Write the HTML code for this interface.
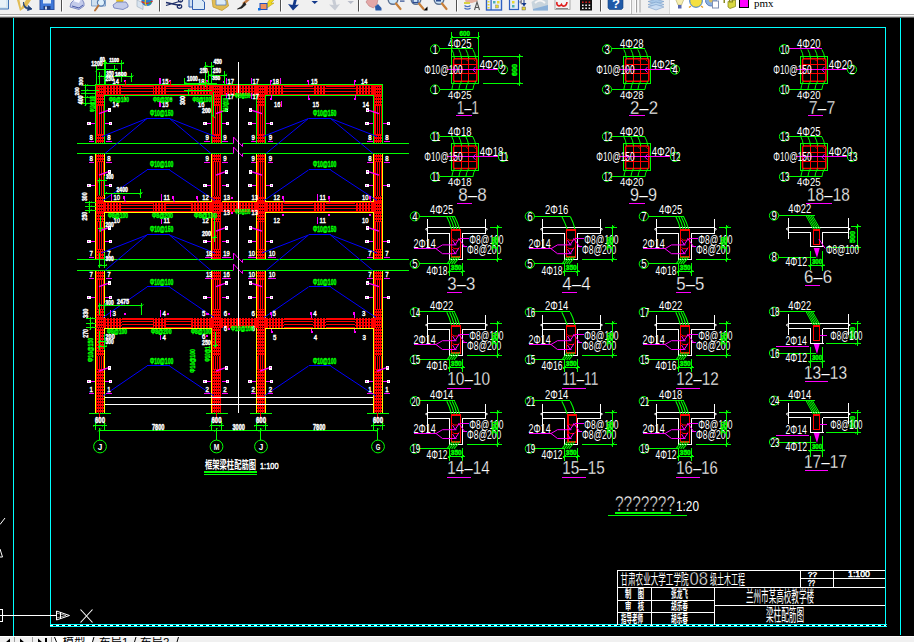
<!DOCTYPE html>
<html><head><meta charset="utf-8"><title>CAD</title>
<style>
html,body{margin:0;padding:0;background:#000;}
body{width:914px;height:642px;overflow:hidden;position:relative;font-family:"Liberation Sans","Noto Sans CJK SC",sans-serif;}
#tb{position:absolute;left:0;top:0;width:914px;height:14px;background:#f0f0f0;overflow:hidden}
#tb2{position:absolute;left:0;top:14px;width:914px;height:4px;background:linear-gradient(#a6a6a6 0,#a6a6a6 25%,#fbfbfb 25%,#fbfbfb 50%,#c4c4c4 50%,#c4c4c4 75%,#5a5a5a 75%,#5a5a5a 100%)}
#dd{position:absolute;left:669px;top:0;width:245px;height:14px;background:#fff}
#pmx{position:absolute;left:754px;top:-3px;font:11px "Liberation Serif",serif;color:#000;letter-spacing:0px}
#bb{position:absolute;left:0;top:636px;width:914px;height:6px;background:#f0f0f0;border-top:1px solid #fff;box-sizing:border-box;overflow:hidden}
.tab{position:absolute;top:-4px;font:11.5px "Liberation Sans","Noto Sans CJK SC",sans-serif;color:#000;white-space:nowrap}
svg{position:absolute;left:0;top:0}
svg text{font-family:"Liberation Sans",sans-serif}
svg text.c{font-family:"Liberation Sans","Noto Sans CJK SC",sans-serif}
</style></head><body>
<div id="tb"><svg width="914" height="14" viewBox="0 0 914 14"><path d="M-1 -1H8.5V9H-1Z" fill="#d4e6f1" stroke="#3f74b5" stroke-width="1"/><rect x="0" y="0" width="6" height="7" fill="#e8f2f8"/>
<path d="M17 0L20 11L27 6L31 0Z" fill="#e2bd55"/><path d="M19.5 0L21 8L26 0Z" fill="#f4f0e0"/><path d="M23.5 2C24 6 26 7.5 28.5 7.5L28 5.5L32 9L27.5 10.5L28 9C25 9 23 6 23.5 2Z" fill="#1d3f7a" stroke="#1d3f7a" stroke-width="0.8"/>
<rect x="40" y="-1" width="14" height="10.5" fill="#3f78d8" stroke="#2a4fa0" stroke-width="1"/><rect x="43" y="-1" width="8" height="4.5" fill="#dfeaf6"/><rect x="43.5" y="6" width="7" height="3.5" fill="#1e3c7c"/><rect x="45" y="6.5" width="2" height="3" fill="#cfd8ea"/>
<rect x="61" y="0" width="1" height="11.5" fill="#505050"/><rect x="62" y="0" width="1" height="11.5" fill="#fff"/>
<path d="M71 3L75 -1H82L84 3V6L79 9.5L70 7Z" fill="#c3cbea" stroke="#6a78b8" stroke-width="0.8"/><path d="M73 1L76 -1H81L79 3Z" fill="#f8f8ff"/><path d="M72 6L79 8L83 5" fill="none" stroke="#4a5aa8" stroke-width="1"/>
<path d="M91.5 -1H105.5V6H91.5Z" fill="#cfe0f0" stroke="#6a90c0" stroke-width="0.8"/><circle cx="101" cy="2.5" r="3.6" fill="#dff0fb" stroke="#5a7fb0" stroke-width="1.2"/><path d="M98.5 5.5L95 10.5" stroke="#b8733a" stroke-width="2" stroke-linecap="round"/>
<path d="M116 -1H124L122 5H117Z" fill="#e8c020"/><path d="M113 5L117 2H126L128 5V7L123 9.5L114 8Z" fill="#c3cbea" stroke="#6a78b8" stroke-width="0.8"/>
<path d="M137 0L143 3V9.5L137 6.5Z" fill="#d8e4f0" stroke="#9ab" stroke-width="0.6"/><circle cx="147" cy="0.5" r="5.5" fill="#2f7fd0"/><path d="M141.5 1.5C145 4 149 4 152.5 1" stroke="#e03020" stroke-width="1.2" fill="none"/><path d="M146 -1C144.5 2 145 4 146.5 6" stroke="#e8d020" stroke-width="1.2" fill="none"/><path d="M149 4L151 2" stroke="#30b040" stroke-width="1.5"/>
<rect x="159" y="0" width="1" height="11.5" fill="#505050"/><rect x="160" y="0" width="1" height="11.5" fill="#fff"/>
<path d="M166 2.5L180 5.5M166 5.5L181 1" stroke="#1e2f6a" stroke-width="1.3" fill="none"/><ellipse cx="179.5" cy="6.5" rx="2.2" ry="1.8" fill="none" stroke="#1e2f6a" stroke-width="1.3"/><ellipse cx="180.5" cy="0.5" rx="2" ry="1.5" fill="none" stroke="#1e2f6a" stroke-width="1.3"/>
<path d="M189 -1H196V7H189Z" fill="#cfe0f0" stroke="#2f5fb0" stroke-width="1"/><path d="M192.5 -1H201L204.5 2V9.5H192.5Z" fill="#dcebf6" stroke="#2f5fb0" stroke-width="1"/>
<path d="M212 -1L213 7L222 10.5L228.5 6L227 -1Z" fill="#e2bd55" stroke="#c09a30" stroke-width="0.8"/><path d="M216 -1H224L226 1.5V5H216Z" fill="#dcebf6" stroke="#5a80c0" stroke-width="0.8"/>
<path d="M249 -1L243 4" stroke="#c07840" stroke-width="2.4"/><path d="M244.5 2.5L241 7L237.5 9L242 8L246 4.5Z" fill="#202020" stroke="#202020" stroke-width="0.8"/>
<path d="M266 5L270 -1H275L271 3H274L267 8Z" fill="#f0d820" stroke="#b09a10" stroke-width="0.5"/><rect x="260" y="3.5" width="7" height="6" fill="#f09060" stroke="#2050c0" stroke-width="1"/><rect x="258" y="8" width="2.5" height="2.5" fill="#1070e0"/>
<rect x="280" y="0" width="1" height="11.5" fill="#505050"/><rect x="281" y="0" width="1" height="11.5" fill="#fff"/>
<path d="M294 -1C293.5 2 293 3.5 292.5 5L288 4L293 10.5L299 4.5L295.5 5C296 3 296.5 1 297 -1Z" fill="#14398a"/>
<path d="M311.5 1H318L314.7 4Z" fill="#14398a"/>
<path d="M332 -1C332.5 2 333 3.5 333.5 5L329 4.5L335 10.5L340 4L336.5 5C336 3 335.5 1 335 -1Z" fill="#c8ccd4"/>
<path d="M347.5 1H354L350.7 4Z" fill="#b8bcc8"/>
<rect x="358" y="0" width="1" height="11.5" fill="#505050"/><rect x="359" y="0" width="1" height="11.5" fill="#fff"/>
<path d="M366 2L368 -1H378L377 4L373.5 8L369 6Z" fill="#e4a8a8" stroke="#b87878" stroke-width="0.6"/><path d="M375 6.5L378 4L381.5 8V10.5H375.5Z" fill="#2a5aa8"/>
<circle cx="393" cy="-0.5" r="4.8" fill="#cfe6f8" stroke="#5a7090" stroke-width="1.4"/><path d="M396 3.5L400.5 9" stroke="#c8803a" stroke-width="2.2" stroke-linecap="round"/><rect x="400" y="0.5" width="4.5" height="1.2" fill="#2a4a90"/>
<circle cx="416" cy="-0.5" r="4.8" fill="#cfe6f8" stroke="#5a7090" stroke-width="1.4"/><path d="M419 3.5L423.5 9" stroke="#c8803a" stroke-width="2.2" stroke-linecap="round"/><rect x="413" y="-1" width="5" height="3.5" fill="none" stroke="#2a4a90" stroke-width="1.2"/><path d="M427.5 6.5V10.5H423.5Z" fill="#000"/>
<circle cx="439" cy="-0.5" r="4.8" fill="#cfe6f8" stroke="#5a7090" stroke-width="1.4"/><path d="M442 3.5L446.5 9" stroke="#c8803a" stroke-width="2.2" stroke-linecap="round"/><rect x="436" y="-1" width="5" height="2.5" fill="#2a4a90"/>
<rect x="456" y="0" width="1" height="11.5" fill="#505050"/><rect x="457" y="0" width="1" height="11.5" fill="#fff"/>
<path d="M465 0H472L476 -1L478 1L472 3H466Z" fill="#e4b0a0"/><rect x="464" y="2" width="6" height="2" fill="#d8d040"/><path d="M464.5 5.5C466 7 469 7 470.5 5.5M464.5 8C466 9.5 469 9.5 470.5 8" stroke="#4a70c0" stroke-width="1.2" fill="none"/><path d="M474.5 10L477 2L479.5 10M475.5 7.5H478.5" stroke="#555" stroke-width="1.100" fill="none"/>
<rect x="486.5" y="-1" width="15" height="11" fill="#e8f0fa" stroke="#2f5fc0" stroke-width="1.4"/><rect x="490.5" y="-1" width="1.2" height="11" fill="#2f5fc0"/><rect x="487.5" y="1" width="2" height="1.5" fill="#e8d830"/><rect x="487.5" y="4" width="2" height="1.5" fill="#e8d830"/><rect x="487.5" y="7" width="2" height="1.5" fill="#e8d830"/><rect x="493" y="1" width="2.5" height="2.5" fill="#50b0b0"/><rect x="497" y="1" width="2.5" height="2.5" fill="#e8d830"/><rect x="495.5" y="5" width="3" height="3" fill="#e8d830" stroke="#777" stroke-width="0.4"/>
<rect x="509.5" y="-1" width="9" height="10.5" fill="#e0eaf8" stroke="#2f5fc0" stroke-width="1.2"/><rect x="512" y="1" width="2.5" height="2.5" fill="#e8d830"/><rect x="512" y="5" width="2.5" height="2.5" fill="#50b0b0"/><path d="M519 2L522 -1V5Z" fill="#889"/><path d="M523.5 -1V3L521.5 3L524 6.5L526.5 3L524.5 3V-1Z" fill="#14398a"/><rect x="522" y="7" width="3.5" height="3" fill="#e8d830" stroke="#556" stroke-width="0.5"/>
<path d="M531.5 2L536 -1H548V10.5H533Z" fill="#c8d4dc"/><path d="M533 9L548 5V10.5H533Z" fill="#8ab0d8"/><path d="M535 3C538 0 542 0 545 3" stroke="#f4f4f4" stroke-width="1.8" fill="none"/>
<rect x="555" y="-1" width="15" height="10.5" fill="#f4f4f4" stroke="#999" stroke-width="0.8"/><path d="M557 2C556 6 560 7 561.5 4.5C562.5 7 566.5 7 567 2" stroke="#e02020" stroke-width="1.6" fill="none"/><rect x="556" y="8" width="12" height="1" fill="#888"/>
<rect x="580" y="-1" width="12" height="11.5" fill="#101010"/>
<rect x="582.0" y="1.5" width="1.6" height="1.4" fill="#e82020"/><rect x="582.0" y="4.5" width="1.6" height="1.5" fill="#f4f4f4"/><rect x="582.0" y="7.5" width="1.6" height="1.5" fill="#f4f4f4"/>
<rect x="585.3" y="1.5" width="1.6" height="1.4" fill="#e82020"/><rect x="585.3" y="4.5" width="1.6" height="1.5" fill="#f4f4f4"/><rect x="585.3" y="7.5" width="1.6" height="1.5" fill="#f4f4f4"/>
<rect x="588.6" y="1.5" width="1.6" height="1.4" fill="#e82020"/><rect x="588.6" y="4.5" width="1.6" height="1.5" fill="#f4f4f4"/><rect x="588.6" y="7.5" width="1.6" height="1.5" fill="#f4f4f4"/>
<rect x="600" y="0" width="1" height="11.5" fill="#505050"/><rect x="601" y="0" width="1" height="11.5" fill="#fff"/>
<path d="M608 -1H623V8L621.5 9.5H609.5L608 8Z" fill="#1f5aa8" stroke="#15407a" stroke-width="0.6"/><text x="612" y="8.3" font-family="'Liberation Sans',sans-serif" font-weight="bold" font-size="13" fill="#fff">?</text>
<rect x="630" y="0" width="1" height="13" fill="#fff"/><rect x="631" y="0" width="1" height="14" fill="#b8b8b8"/><rect x="635" y="0" width="1" height="12.5" fill="#fff"/><rect x="636" y="0" width="1" height="12.5" fill="#a0a0a0"/><rect x="638.5" y="0" width="1" height="12.5" fill="#fff"/><rect x="639.5" y="0" width="1" height="12.5" fill="#a0a0a0"/>
<path d="M648 1.5L656 -1L664 1.5L656 4.5Z" fill="#a8c8e8" stroke="#6a90c0" stroke-width="0.5"/><path d="M648 4.5L656 2L664 4.5L656 7.5Z" fill="#b8d4ee" stroke="#6a90c0" stroke-width="0.5"/><path d="M648 7L656 4.5L664 7L656 10Z" fill="#c8dcf2" stroke="#6a90c0" stroke-width="0.5"/>
<rect x="669" y="0" width="245" height="14" fill="#fff"/><rect x="669" y="0" width="1" height="14" fill="#d8d8d8"/>
<path d="M675.5 -1L678 5H681.5L684 -1Z" fill="#f6eeb0" stroke="#b0a860" stroke-width="0.6"/><rect x="678" y="5" width="3.5" height="3.5" fill="#5a6ab0"/>
<circle cx="696" cy="1" r="6.3" fill="#f4e040" stroke="#3a7ad0" stroke-width="1"/><path d="M689 7.5L691 6M703 7.5L701 6" stroke="#e8a020" stroke-width="1.5"/>
<circle cx="711" cy="0.5" r="5.5" fill="#8ab0e0" stroke="#5a80c0" stroke-width="1"/><circle cx="711" cy="0.5" r="2" fill="#d8c060"/><rect x="712.5" y="1" width="6" height="7" fill="#fff" stroke="#8090b0" stroke-width="1"/>
<rect x="723.5" y="0" width="1.5" height="3" fill="#8a8a20"/><path d="M728 1.5L735.5 0V6.5L730 8.5L728 7Z" fill="#d8d840" stroke="#8a8a20" stroke-width="0.8"/><rect x="729.5" y="-1" width="3" height="3" fill="none" stroke="#8a8a20" stroke-width="1"/>
<rect x="739.5" y="-1" width="9" height="8.5" fill="#ff00ff" stroke="#000" stroke-width="1"/></svg><span id="pmx">pmx</span></div><div id="tb2"></div>
<div id="bb"><svg width="914" height="6" viewBox="0 636 914 6" style="top:-1px" shape-rendering="crispEdges">
<rect x="54" y="637" width="38" height="6" fill="#ffffff"/>
<rect x="14" y="637" width="1" height="6" fill="#a0a0a0"/><rect x="32" y="637" width="1" height="6" fill="#a0a0a0"/><rect x="51" y="637" width="1" height="6" fill="#a0a0a0"/>
<path d="M10 638.5L5.5 642.5H10Z M20 638.5L24.5 642.5H20Z M38 638.5L42.5 642.5H38Z" fill="#000" shape-rendering="geometricPrecision"/><rect x="45" y="638" width="1.5" height="4" fill="#000"/>
<path d="M54.5 637L56.5 642M92.5 642L94 637M134.5 642L136 637M177 642L178.5 637" stroke="#000" stroke-width="1" fill="none" shape-rendering="geometricPrecision"/>
</svg><span class="tab" style="left:62.5px">模型</span><span class="tab" style="left:99px">布局1</span><span class="tab" style="left:140px">布局2</span></div>
<svg width="914" height="642" viewBox="0 0 914 642" shape-rendering="crispEdges">
<line x1="13.5" y1="18" x2="13.5" y2="636" stroke="#00ffff" stroke-width="1"/>
<line x1="900.5" y1="18" x2="900.5" y2="635" stroke="#00ffff" stroke-width="1"/>
<line x1="50" y1="27.5" x2="886" y2="27.5" stroke="#00ffff" stroke-width="1"/>
<line x1="50.5" y1="27" x2="50.5" y2="626" stroke="#00ffff" stroke-width="1"/>
<line x1="885.5" y1="27" x2="885.5" y2="626" stroke="#00ffff" stroke-width="1"/>
<line x1="50" y1="624.5" x2="887" y2="624.5" stroke="#00ffff" stroke-width="1"/>
<line x1="50" y1="626.5" x2="887" y2="626.5" stroke="#00ffff" stroke-width="1"/>
<line x1="50" y1="625.5" x2="886" y2="625.5" stroke="#fff" stroke-width="1" stroke-dasharray="3 3"/>
<line x1="0" y1="615.5" x2="57" y2="615.5" stroke="#ffffff" stroke-width="1"/>
<rect x="-3.5" y="609.5" width="6" height="12" fill="none" stroke="#ffffff" stroke-width="1"/>
<polyline points="56.5,611 69.5,615.5 56.5,620 56.5,611" fill="none" stroke="#ffffff" stroke-width="1" shape-rendering="geometricPrecision"/>
<polyline points="60.5,612 60.5,619" fill="none" stroke="#ffffff" stroke-width="1"/>
<polyline points="56.5,613 66,615.5 56.5,618" fill="none" stroke="#ffffff" stroke-width="0.6" shape-rendering="geometricPrecision"/>
<polyline points="80.5,609.5 92.5,622.5" fill="none" stroke="#ffffff" stroke-width="1.1" shape-rendering="geometricPrecision"/>
<polyline points="92.5,609.5 80.5,622.5" fill="none" stroke="#ffffff" stroke-width="1.1" shape-rendering="geometricPrecision"/>
<polyline points="0,524.5 5,518" fill="none" stroke="#ffffff" stroke-width="1" shape-rendering="geometricPrecision"/>
<polyline points="0,549 2.5,557 0,557" fill="none" stroke="#ffffff" stroke-width="1" shape-rendering="geometricPrecision"/>
<line x1="617" y1="570.5" x2="885" y2="570.5" stroke="#ffffff" stroke-width="1"/>
<line x1="617" y1="587.5" x2="885" y2="587.5" stroke="#ffffff" stroke-width="1"/>
<line x1="617.5" y1="570" x2="617.5" y2="625" stroke="#ffffff" stroke-width="1"/>
<line x1="800" y1="578.5" x2="885" y2="578.5" stroke="#ffffff" stroke-width="1"/>
<line x1="800.5" y1="570" x2="800.5" y2="587" stroke="#ffffff" stroke-width="1"/>
<line x1="833.5" y1="570" x2="833.5" y2="587" stroke="#ffffff" stroke-width="1"/>
<line x1="651.5" y1="587" x2="651.5" y2="625" stroke="#ffffff" stroke-width="1"/>
<line x1="714.5" y1="587" x2="714.5" y2="625" stroke="#ffffff" stroke-width="1"/>
<line x1="617" y1="600.5" x2="714" y2="600.5" stroke="#ffffff" stroke-width="1"/>
<line x1="617" y1="612.5" x2="714" y2="612.5" stroke="#ffffff" stroke-width="1"/>
<line x1="714" y1="605.5" x2="885" y2="605.5" stroke="#ffffff" stroke-width="1"/>
<text x="620.5" y="584.16" font-size="13.95" class="c" fill="#ffffff" textLength="68" lengthAdjust="spacingAndGlyphs">甘肃农业大学工学院</text>
<text x="689.5" y="585.3" font-size="18.58" fill="#ffffff" textLength="18.5" lengthAdjust="spacingAndGlyphs" stroke="#000" stroke-width="0.5">08</text>
<text x="710" y="584.16" font-size="13.95" class="c" fill="#ffffff" textLength="35" lengthAdjust="spacingAndGlyphs">级土木工程</text>
<text x="746" y="602.02" font-size="16.28" class="c" fill="#ffffff" textLength="68" lengthAdjust="spacingAndGlyphs">兰州市某高校教学楼</text>
<text x="766" y="620.95" font-size="17.44" class="c" fill="#ffffff" textLength="38" lengthAdjust="spacingAndGlyphs">梁柱配筋图</text>
<text x="625" y="598.3" font-size="11.63" class="c" fill="#ffffff" textLength="19" lengthAdjust="spacingAndGlyphs" font-weight="bold">制　图</text>
<text x="625" y="610.37" font-size="10.47" class="c" fill="#ffffff" textLength="19" lengthAdjust="spacingAndGlyphs" font-weight="bold">审　核</text>
<text x="621" y="623.3" font-size="11.63" class="c" fill="#ffffff" textLength="22" lengthAdjust="spacingAndGlyphs" font-weight="bold">指导老师</text>
<text x="671" y="598.3" font-size="11.63" class="c" fill="#ffffff" textLength="17" lengthAdjust="spacingAndGlyphs" font-weight="bold">张龙飞</text>
<text x="671" y="610.37" font-size="10.47" class="c" fill="#ffffff" textLength="17" lengthAdjust="spacingAndGlyphs" font-weight="bold">胡乐春</text>
<text x="671" y="623.3" font-size="11.63" class="c" fill="#ffffff" textLength="17" lengthAdjust="spacingAndGlyphs" font-weight="bold">胡乐春</text>
<text x="808" y="577" font-size="6.98" fill="#ffffff" textLength="9" lengthAdjust="spacingAndGlyphs" stroke="#ffffff" stroke-width="0.45">??</text>
<text x="808" y="586" font-size="8.38" fill="#ffffff" textLength="7" lengthAdjust="spacingAndGlyphs" stroke="#ffffff" stroke-width="0.45">??</text>
<text x="848" y="577" font-size="8.38" fill="#ffffff" textLength="22" lengthAdjust="spacingAndGlyphs" stroke="#ffffff" stroke-width="0.45">1:100</text>
<text x="615" y="510.5" font-size="22.21" fill="#ffffff" textLength="60" lengthAdjust="spacingAndGlyphs" stroke="#000" stroke-width="0.6">???????</text>
<text x="676" y="510.5" font-size="14.66" fill="#ffffff" textLength="23" lengthAdjust="spacingAndGlyphs">1:20</text>
<line x1="615" y1="513" x2="671" y2="513" stroke="#00ff00" stroke-width="2"/>
<line x1="608" y1="515.5" x2="687" y2="515.5" stroke="#00ff00" stroke-width="1"/>
<rect x="451.5" y="56.4" width="27" height="27" fill="none" stroke="#00ff00" stroke-width="1"/>
<rect x="453.6" y="58.7" width="23.2" height="22.6" rx="1.2" fill="none" stroke="#ff0000" stroke-width="1.5" shape-rendering="geometricPrecision"/>
<line x1="461.5" y1="58.9" x2="461.5" y2="80.9" stroke="#ff0000" stroke-width="1"/>
<line x1="468.5" y1="58.9" x2="468.5" y2="80.9" stroke="#ff0000" stroke-width="1"/>
<line x1="454" y1="64.5" x2="477" y2="64.5" stroke="#ff0000" stroke-width="1"/>
<line x1="454" y1="73.5" x2="477" y2="73.5" stroke="#ff0000" stroke-width="1"/>
<polyline points="474,59.9 475.5,61.4" fill="none" stroke="#ff0000" stroke-width="1" shape-rendering="geometricPrecision"/>
<polyline points="466.5,59.9 468,61.4" fill="none" stroke="#ff0000" stroke-width="1" shape-rendering="geometricPrecision"/>
<line x1="439.5" y1="48.5" x2="472.8" y2="48.5" stroke="#00ff00" stroke-width="1"/>
<path d="M451.8 49.4 Q454 52.9 454.4 58.9" fill="none" stroke="#00ff00" stroke-width="1" shape-rendering="geometricPrecision"/>
<path d="M458.8 49.4 Q461 52.9 461.6 58.9" fill="none" stroke="#00ff00" stroke-width="1" shape-rendering="geometricPrecision"/>
<path d="M465.8 49.4 Q468 52.9 468.8 58.9" fill="none" stroke="#00ff00" stroke-width="1" shape-rendering="geometricPrecision"/>
<path d="M472.8 49.4 Q475 52.9 476 58.9" fill="none" stroke="#00ff00" stroke-width="1" shape-rendering="geometricPrecision"/>
<circle cx="435" cy="49.2" r="4.6" fill="none" stroke="#00ff00" stroke-width="1" shape-rendering="geometricPrecision"/>
<text x="432.5" y="53.7" font-size="12.85" fill="#ffffff" textLength="5.4" lengthAdjust="spacingAndGlyphs">1</text>
<text x="448" y="48.3" font-size="12.29" fill="#ffffff" textLength="23.5" lengthAdjust="spacingAndGlyphs">4Φ25</text>
<line x1="439.5" y1="89.5" x2="472.8" y2="89.5" stroke="#00ff00" stroke-width="1"/>
<path d="M451.8 89.7 Q452.2 85.2 454.4 80.9" fill="none" stroke="#00ff00" stroke-width="1" shape-rendering="geometricPrecision"/>
<path d="M458.8 89.7 Q459.2 85.2 461.6 80.9" fill="none" stroke="#00ff00" stroke-width="1" shape-rendering="geometricPrecision"/>
<path d="M465.8 89.7 Q466.2 85.2 468.8 80.9" fill="none" stroke="#00ff00" stroke-width="1" shape-rendering="geometricPrecision"/>
<path d="M472.8 89.7 Q473.2 85.2 476 80.9" fill="none" stroke="#00ff00" stroke-width="1" shape-rendering="geometricPrecision"/>
<circle cx="435" cy="89.5" r="4.6" fill="none" stroke="#00ff00" stroke-width="1" shape-rendering="geometricPrecision"/>
<text x="432.5" y="94" font-size="12.85" fill="#ffffff" textLength="5.4" lengthAdjust="spacingAndGlyphs">1</text>
<text x="448" y="98.9" font-size="11.73" fill="#ffffff" textLength="23.5" lengthAdjust="spacingAndGlyphs">4Φ25</text>
<text x="479.7" y="68.8" font-size="12.71" fill="#ffffff" textLength="23.6" lengthAdjust="spacingAndGlyphs">4Φ20</text>
<line x1="447" y1="69.5" x2="498.4" y2="69.5" stroke="#ff00ff" stroke-width="1"/>
<polyline points="453.5,66.9 456,69.8 453.5,72.5" fill="none" stroke="#ff00ff" stroke-width="1" shape-rendering="geometricPrecision"/>
<polyline points="475.5,66.9 473,69.8 475.5,72.5" fill="none" stroke="#ff00ff" stroke-width="1" shape-rendering="geometricPrecision"/>
<circle cx="503" cy="69.6" r="4.6" fill="none" stroke="#00ff00" stroke-width="1" shape-rendering="geometricPrecision"/>
<text x="500.5" y="74.1" font-size="12.85" fill="#ffffff" textLength="5.4" lengthAdjust="spacingAndGlyphs">2</text>
<text x="424.2" y="73.7" font-size="12.29" fill="#ffffff" textLength="38.5" lengthAdjust="spacingAndGlyphs">Φ10@100</text>
<text x="457" y="113.6" font-size="17.74" fill="#ffffff" textLength="21.8" lengthAdjust="spacingAndGlyphs" stroke="#000" stroke-width="0.3">1–1</text>
<line x1="456" y1="115.5" x2="471.8" y2="115.5" stroke="#ff00ff" stroke-width="1"/>
<rect x="623.5" y="56.4" width="27" height="27" fill="none" stroke="#00ff00" stroke-width="1"/>
<rect x="625.6" y="58.7" width="23.2" height="22.6" rx="1.2" fill="none" stroke="#ff0000" stroke-width="1.5" shape-rendering="geometricPrecision"/>
<line x1="633.5" y1="58.9" x2="633.5" y2="80.9" stroke="#ff0000" stroke-width="1"/>
<line x1="640.5" y1="58.9" x2="640.5" y2="80.9" stroke="#ff0000" stroke-width="1"/>
<line x1="626" y1="64.5" x2="649" y2="64.5" stroke="#ff0000" stroke-width="1"/>
<line x1="626" y1="73.5" x2="649" y2="73.5" stroke="#ff0000" stroke-width="1"/>
<polyline points="646,59.9 647.5,61.4" fill="none" stroke="#ff0000" stroke-width="1" shape-rendering="geometricPrecision"/>
<polyline points="638.5,59.9 640,61.4" fill="none" stroke="#ff0000" stroke-width="1" shape-rendering="geometricPrecision"/>
<line x1="611.5" y1="48.5" x2="644.8" y2="48.5" stroke="#00ff00" stroke-width="1"/>
<path d="M623.8 49.4 Q626 52.9 626.4 58.9" fill="none" stroke="#00ff00" stroke-width="1" shape-rendering="geometricPrecision"/>
<path d="M630.8 49.4 Q633 52.9 633.6 58.9" fill="none" stroke="#00ff00" stroke-width="1" shape-rendering="geometricPrecision"/>
<path d="M637.8 49.4 Q640 52.9 640.8 58.9" fill="none" stroke="#00ff00" stroke-width="1" shape-rendering="geometricPrecision"/>
<path d="M644.8 49.4 Q647 52.9 648 58.9" fill="none" stroke="#00ff00" stroke-width="1" shape-rendering="geometricPrecision"/>
<circle cx="607" cy="49.2" r="4.6" fill="none" stroke="#00ff00" stroke-width="1" shape-rendering="geometricPrecision"/>
<text x="604.5" y="53.7" font-size="12.85" fill="#ffffff" textLength="5.4" lengthAdjust="spacingAndGlyphs">3</text>
<text x="620" y="48.3" font-size="12.29" fill="#ffffff" textLength="23.5" lengthAdjust="spacingAndGlyphs">4Φ28</text>
<line x1="611.5" y1="89.5" x2="644.8" y2="89.5" stroke="#00ff00" stroke-width="1"/>
<path d="M623.8 89.7 Q624.2 85.2 626.4 80.9" fill="none" stroke="#00ff00" stroke-width="1" shape-rendering="geometricPrecision"/>
<path d="M630.8 89.7 Q631.2 85.2 633.6 80.9" fill="none" stroke="#00ff00" stroke-width="1" shape-rendering="geometricPrecision"/>
<path d="M637.8 89.7 Q638.2 85.2 640.8 80.9" fill="none" stroke="#00ff00" stroke-width="1" shape-rendering="geometricPrecision"/>
<path d="M644.8 89.7 Q645.2 85.2 648 80.9" fill="none" stroke="#00ff00" stroke-width="1" shape-rendering="geometricPrecision"/>
<circle cx="607" cy="89.5" r="4.6" fill="none" stroke="#00ff00" stroke-width="1" shape-rendering="geometricPrecision"/>
<text x="604.5" y="94" font-size="12.85" fill="#ffffff" textLength="5.4" lengthAdjust="spacingAndGlyphs">3</text>
<text x="620" y="98.9" font-size="11.73" fill="#ffffff" textLength="23.5" lengthAdjust="spacingAndGlyphs">4Φ28</text>
<text x="651.7" y="68.8" font-size="12.71" fill="#ffffff" textLength="23.6" lengthAdjust="spacingAndGlyphs">4Φ25</text>
<line x1="619" y1="69.5" x2="670.4" y2="69.5" stroke="#ff00ff" stroke-width="1"/>
<polyline points="625.5,66.9 628,69.8 625.5,72.5" fill="none" stroke="#ff00ff" stroke-width="1" shape-rendering="geometricPrecision"/>
<polyline points="647.5,66.9 645,69.8 647.5,72.5" fill="none" stroke="#ff00ff" stroke-width="1" shape-rendering="geometricPrecision"/>
<circle cx="675" cy="69.6" r="4.6" fill="none" stroke="#00ff00" stroke-width="1" shape-rendering="geometricPrecision"/>
<text x="672.5" y="74.1" font-size="12.85" fill="#ffffff" textLength="5.4" lengthAdjust="spacingAndGlyphs">4</text>
<text x="596.2" y="73.7" font-size="12.29" fill="#ffffff" textLength="38.5" lengthAdjust="spacingAndGlyphs">Φ10@100</text>
<text x="630" y="113.6" font-size="17.74" fill="#ffffff" textLength="28" lengthAdjust="spacingAndGlyphs" stroke="#000" stroke-width="0.3">2–2</text>
<line x1="629" y1="115.5" x2="644.8" y2="115.5" stroke="#ff00ff" stroke-width="1"/>
<rect x="800.5" y="56.4" width="27" height="27" fill="none" stroke="#00ff00" stroke-width="1"/>
<rect x="802.6" y="58.7" width="23.2" height="22.6" rx="1.2" fill="none" stroke="#ff0000" stroke-width="1.5" shape-rendering="geometricPrecision"/>
<line x1="810.5" y1="58.9" x2="810.5" y2="80.9" stroke="#ff0000" stroke-width="1"/>
<line x1="817.5" y1="58.9" x2="817.5" y2="80.9" stroke="#ff0000" stroke-width="1"/>
<line x1="803" y1="64.5" x2="826" y2="64.5" stroke="#ff0000" stroke-width="1"/>
<line x1="803" y1="73.5" x2="826" y2="73.5" stroke="#ff0000" stroke-width="1"/>
<polyline points="823,59.9 824.5,61.4" fill="none" stroke="#ff0000" stroke-width="1" shape-rendering="geometricPrecision"/>
<polyline points="815.5,59.9 817,61.4" fill="none" stroke="#ff0000" stroke-width="1" shape-rendering="geometricPrecision"/>
<line x1="788.5" y1="48.5" x2="821.8" y2="48.5" stroke="#ff00ff" stroke-width="1"/>
<path d="M800.8 49.4 Q803 52.9 803.4 58.9" fill="none" stroke="#00ff00" stroke-width="1" shape-rendering="geometricPrecision"/>
<path d="M807.8 49.4 Q810 52.9 810.6 58.9" fill="none" stroke="#00ff00" stroke-width="1" shape-rendering="geometricPrecision"/>
<path d="M814.8 49.4 Q817 52.9 817.8 58.9" fill="none" stroke="#00ff00" stroke-width="1" shape-rendering="geometricPrecision"/>
<path d="M821.8 49.4 Q824 52.9 825 58.9" fill="none" stroke="#00ff00" stroke-width="1" shape-rendering="geometricPrecision"/>
<circle cx="784" cy="49.2" r="4.6" fill="none" stroke="#00ff00" stroke-width="1" shape-rendering="geometricPrecision"/>
<text x="780.4" y="53.7" font-size="12.85" fill="#ffffff" textLength="9" lengthAdjust="spacingAndGlyphs">10</text>
<text x="797" y="48.3" font-size="12.29" fill="#ffffff" textLength="23.5" lengthAdjust="spacingAndGlyphs">4Φ20</text>
<line x1="788.5" y1="89.5" x2="821.8" y2="89.5" stroke="#00ff00" stroke-width="1"/>
<path d="M800.8 89.7 Q801.2 85.2 803.4 80.9" fill="none" stroke="#00ff00" stroke-width="1" shape-rendering="geometricPrecision"/>
<path d="M807.8 89.7 Q808.2 85.2 810.6 80.9" fill="none" stroke="#00ff00" stroke-width="1" shape-rendering="geometricPrecision"/>
<path d="M814.8 89.7 Q815.2 85.2 817.8 80.9" fill="none" stroke="#00ff00" stroke-width="1" shape-rendering="geometricPrecision"/>
<path d="M821.8 89.7 Q822.2 85.2 825 80.9" fill="none" stroke="#00ff00" stroke-width="1" shape-rendering="geometricPrecision"/>
<circle cx="784" cy="89.5" r="4.6" fill="none" stroke="#00ff00" stroke-width="1" shape-rendering="geometricPrecision"/>
<text x="780.4" y="94" font-size="12.85" fill="#ffffff" textLength="9" lengthAdjust="spacingAndGlyphs">10</text>
<text x="797" y="98.9" font-size="11.73" fill="#ffffff" textLength="23.5" lengthAdjust="spacingAndGlyphs">4Φ20</text>
<text x="828.7" y="68.8" font-size="12.71" fill="#ffffff" textLength="23.6" lengthAdjust="spacingAndGlyphs">4Φ20</text>
<line x1="796" y1="69.5" x2="847.4" y2="69.5" stroke="#ff00ff" stroke-width="1"/>
<polyline points="802.5,66.9 805,69.8 802.5,72.5" fill="none" stroke="#ff00ff" stroke-width="1" shape-rendering="geometricPrecision"/>
<polyline points="824.5,66.9 822,69.8 824.5,72.5" fill="none" stroke="#ff00ff" stroke-width="1" shape-rendering="geometricPrecision"/>
<circle cx="852" cy="69.6" r="4.6" fill="none" stroke="#00ff00" stroke-width="1" shape-rendering="geometricPrecision"/>
<text x="849.5" y="74.1" font-size="12.85" fill="#ffffff" textLength="5.4" lengthAdjust="spacingAndGlyphs">2</text>
<text x="773.2" y="73.7" font-size="12.29" fill="#ffffff" textLength="38.5" lengthAdjust="spacingAndGlyphs">Φ10@150</text>
<text x="808.7" y="113.6" font-size="17.74" fill="#ffffff" textLength="26.6" lengthAdjust="spacingAndGlyphs" stroke="#000" stroke-width="0.3">7–7</text>
<line x1="807.7" y1="115.5" x2="822.7" y2="115.5" stroke="#ff00ff" stroke-width="1"/>
<rect x="451.5" y="143.7" width="27" height="27" fill="none" stroke="#00ff00" stroke-width="1"/>
<rect x="453.6" y="146" width="23.2" height="22.6" rx="1.2" fill="none" stroke="#ff0000" stroke-width="1.5" shape-rendering="geometricPrecision"/>
<line x1="461.5" y1="146.2" x2="461.5" y2="168.2" stroke="#ff0000" stroke-width="1"/>
<line x1="468.5" y1="146.2" x2="468.5" y2="168.2" stroke="#ff0000" stroke-width="1"/>
<line x1="454" y1="152.5" x2="477" y2="152.5" stroke="#ff0000" stroke-width="1"/>
<line x1="454" y1="161.5" x2="477" y2="161.5" stroke="#ff0000" stroke-width="1"/>
<polyline points="474,147.2 475.5,148.7" fill="none" stroke="#ff0000" stroke-width="1" shape-rendering="geometricPrecision"/>
<polyline points="466.5,147.2 468,148.7" fill="none" stroke="#ff0000" stroke-width="1" shape-rendering="geometricPrecision"/>
<line x1="439.5" y1="136.5" x2="472.8" y2="136.5" stroke="#00ff00" stroke-width="1"/>
<path d="M451.8 136.7 Q454 140.2 454.4 146.2" fill="none" stroke="#00ff00" stroke-width="1" shape-rendering="geometricPrecision"/>
<path d="M458.8 136.7 Q461 140.2 461.6 146.2" fill="none" stroke="#00ff00" stroke-width="1" shape-rendering="geometricPrecision"/>
<path d="M465.8 136.7 Q468 140.2 468.8 146.2" fill="none" stroke="#00ff00" stroke-width="1" shape-rendering="geometricPrecision"/>
<path d="M472.8 136.7 Q475 140.2 476 146.2" fill="none" stroke="#00ff00" stroke-width="1" shape-rendering="geometricPrecision"/>
<circle cx="435" cy="136.5" r="4.6" fill="none" stroke="#00ff00" stroke-width="1" shape-rendering="geometricPrecision"/>
<text x="431.4" y="141" font-size="12.85" fill="#ffffff" textLength="9" lengthAdjust="spacingAndGlyphs">11</text>
<text x="448" y="135.6" font-size="12.29" fill="#ffffff" textLength="23.5" lengthAdjust="spacingAndGlyphs">4Φ18</text>
<line x1="439.5" y1="176.5" x2="472.8" y2="176.5" stroke="#00ff00" stroke-width="1"/>
<path d="M451.8 177 Q452.2 172.5 454.4 168.2" fill="none" stroke="#00ff00" stroke-width="1" shape-rendering="geometricPrecision"/>
<path d="M458.8 177 Q459.2 172.5 461.6 168.2" fill="none" stroke="#00ff00" stroke-width="1" shape-rendering="geometricPrecision"/>
<path d="M465.8 177 Q466.2 172.5 468.8 168.2" fill="none" stroke="#00ff00" stroke-width="1" shape-rendering="geometricPrecision"/>
<path d="M472.8 177 Q473.2 172.5 476 168.2" fill="none" stroke="#00ff00" stroke-width="1" shape-rendering="geometricPrecision"/>
<circle cx="435" cy="176.8" r="4.6" fill="none" stroke="#00ff00" stroke-width="1" shape-rendering="geometricPrecision"/>
<text x="431.4" y="181.3" font-size="12.85" fill="#ffffff" textLength="9" lengthAdjust="spacingAndGlyphs">11</text>
<text x="448" y="186.2" font-size="11.73" fill="#ffffff" textLength="23.5" lengthAdjust="spacingAndGlyphs">4Φ18</text>
<text x="479.7" y="156.1" font-size="12.71" fill="#ffffff" textLength="23.6" lengthAdjust="spacingAndGlyphs">4Φ18</text>
<line x1="447" y1="156.5" x2="498.4" y2="156.5" stroke="#ff00ff" stroke-width="1"/>
<polyline points="453.5,154.2 456,157.1 453.5,159.8" fill="none" stroke="#ff00ff" stroke-width="1" shape-rendering="geometricPrecision"/>
<polyline points="475.5,154.2 473,157.1 475.5,159.8" fill="none" stroke="#ff00ff" stroke-width="1" shape-rendering="geometricPrecision"/>
<circle cx="503" cy="156.9" r="4.6" fill="none" stroke="#00ff00" stroke-width="1" shape-rendering="geometricPrecision"/>
<text x="499.4" y="161.4" font-size="12.85" fill="#ffffff" textLength="9" lengthAdjust="spacingAndGlyphs">11</text>
<text x="424.2" y="161" font-size="12.29" fill="#ffffff" textLength="38.5" lengthAdjust="spacingAndGlyphs">Φ10@150</text>
<text x="458.3" y="200.9" font-size="17.74" fill="#ffffff" textLength="28.4" lengthAdjust="spacingAndGlyphs" stroke="#000" stroke-width="0.3">8–8</text>
<line x1="457.3" y1="203.5" x2="472.3" y2="203.5" stroke="#ff00ff" stroke-width="1"/>
<rect x="623.5" y="143.7" width="27" height="27" fill="none" stroke="#00ff00" stroke-width="1"/>
<rect x="625.6" y="146" width="23.2" height="22.6" rx="1.2" fill="none" stroke="#ff0000" stroke-width="1.5" shape-rendering="geometricPrecision"/>
<line x1="633.5" y1="146.2" x2="633.5" y2="168.2" stroke="#ff0000" stroke-width="1"/>
<line x1="640.5" y1="146.2" x2="640.5" y2="168.2" stroke="#ff0000" stroke-width="1"/>
<line x1="626" y1="152.5" x2="649" y2="152.5" stroke="#ff0000" stroke-width="1"/>
<line x1="626" y1="161.5" x2="649" y2="161.5" stroke="#ff0000" stroke-width="1"/>
<polyline points="646,147.2 647.5,148.7" fill="none" stroke="#ff0000" stroke-width="1" shape-rendering="geometricPrecision"/>
<polyline points="638.5,147.2 640,148.7" fill="none" stroke="#ff0000" stroke-width="1" shape-rendering="geometricPrecision"/>
<line x1="611.5" y1="136.5" x2="644.8" y2="136.5" stroke="#00ff00" stroke-width="1"/>
<path d="M623.8 136.7 Q626 140.2 626.4 146.2" fill="none" stroke="#00ff00" stroke-width="1" shape-rendering="geometricPrecision"/>
<path d="M630.8 136.7 Q633 140.2 633.6 146.2" fill="none" stroke="#00ff00" stroke-width="1" shape-rendering="geometricPrecision"/>
<path d="M637.8 136.7 Q640 140.2 640.8 146.2" fill="none" stroke="#00ff00" stroke-width="1" shape-rendering="geometricPrecision"/>
<path d="M644.8 136.7 Q647 140.2 648 146.2" fill="none" stroke="#00ff00" stroke-width="1" shape-rendering="geometricPrecision"/>
<circle cx="607" cy="136.5" r="4.6" fill="none" stroke="#00ff00" stroke-width="1" shape-rendering="geometricPrecision"/>
<text x="603.4" y="141" font-size="12.85" fill="#ffffff" textLength="9" lengthAdjust="spacingAndGlyphs">12</text>
<text x="620" y="135.6" font-size="12.29" fill="#ffffff" textLength="23.5" lengthAdjust="spacingAndGlyphs">4Φ20</text>
<line x1="611.5" y1="176.5" x2="644.8" y2="176.5" stroke="#00ff00" stroke-width="1"/>
<path d="M623.8 177 Q624.2 172.5 626.4 168.2" fill="none" stroke="#00ff00" stroke-width="1" shape-rendering="geometricPrecision"/>
<path d="M630.8 177 Q631.2 172.5 633.6 168.2" fill="none" stroke="#00ff00" stroke-width="1" shape-rendering="geometricPrecision"/>
<path d="M637.8 177 Q638.2 172.5 640.8 168.2" fill="none" stroke="#00ff00" stroke-width="1" shape-rendering="geometricPrecision"/>
<path d="M644.8 177 Q645.2 172.5 648 168.2" fill="none" stroke="#00ff00" stroke-width="1" shape-rendering="geometricPrecision"/>
<circle cx="607" cy="176.8" r="4.6" fill="none" stroke="#00ff00" stroke-width="1" shape-rendering="geometricPrecision"/>
<text x="603.4" y="181.3" font-size="12.85" fill="#ffffff" textLength="9" lengthAdjust="spacingAndGlyphs">12</text>
<text x="620" y="186.2" font-size="11.73" fill="#ffffff" textLength="23.5" lengthAdjust="spacingAndGlyphs">4Φ20</text>
<text x="651.7" y="156.1" font-size="12.71" fill="#ffffff" textLength="23.6" lengthAdjust="spacingAndGlyphs">4Φ20</text>
<line x1="619" y1="156.5" x2="670.4" y2="156.5" stroke="#ff00ff" stroke-width="1"/>
<polyline points="625.5,154.2 628,157.1 625.5,159.8" fill="none" stroke="#ff00ff" stroke-width="1" shape-rendering="geometricPrecision"/>
<polyline points="647.5,154.2 645,157.1 647.5,159.8" fill="none" stroke="#ff00ff" stroke-width="1" shape-rendering="geometricPrecision"/>
<circle cx="675" cy="156.9" r="4.6" fill="none" stroke="#00ff00" stroke-width="1" shape-rendering="geometricPrecision"/>
<text x="671.4" y="161.4" font-size="12.85" fill="#ffffff" textLength="9" lengthAdjust="spacingAndGlyphs">12</text>
<text x="596.2" y="161" font-size="12.29" fill="#ffffff" textLength="38.5" lengthAdjust="spacingAndGlyphs">Φ10@150</text>
<text x="630" y="200.9" font-size="17.74" fill="#ffffff" textLength="27" lengthAdjust="spacingAndGlyphs" stroke="#000" stroke-width="0.3">9–9</text>
<line x1="629" y1="203.5" x2="644.8" y2="203.5" stroke="#ff00ff" stroke-width="1"/>
<rect x="800.5" y="143.7" width="27" height="27" fill="none" stroke="#00ff00" stroke-width="1"/>
<rect x="802.6" y="146" width="23.2" height="22.6" rx="1.2" fill="none" stroke="#ff0000" stroke-width="1.5" shape-rendering="geometricPrecision"/>
<line x1="810.5" y1="146.2" x2="810.5" y2="168.2" stroke="#ff0000" stroke-width="1"/>
<line x1="817.5" y1="146.2" x2="817.5" y2="168.2" stroke="#ff0000" stroke-width="1"/>
<line x1="803" y1="152.5" x2="826" y2="152.5" stroke="#ff0000" stroke-width="1"/>
<line x1="803" y1="161.5" x2="826" y2="161.5" stroke="#ff0000" stroke-width="1"/>
<polyline points="823,147.2 824.5,148.7" fill="none" stroke="#ff0000" stroke-width="1" shape-rendering="geometricPrecision"/>
<polyline points="815.5,147.2 817,148.7" fill="none" stroke="#ff0000" stroke-width="1" shape-rendering="geometricPrecision"/>
<line x1="788.5" y1="136.5" x2="821.8" y2="136.5" stroke="#00ff00" stroke-width="1"/>
<path d="M800.8 136.7 Q803 140.2 803.4 146.2" fill="none" stroke="#00ff00" stroke-width="1" shape-rendering="geometricPrecision"/>
<path d="M807.8 136.7 Q810 140.2 810.6 146.2" fill="none" stroke="#00ff00" stroke-width="1" shape-rendering="geometricPrecision"/>
<path d="M814.8 136.7 Q817 140.2 817.8 146.2" fill="none" stroke="#00ff00" stroke-width="1" shape-rendering="geometricPrecision"/>
<path d="M821.8 136.7 Q824 140.2 825 146.2" fill="none" stroke="#00ff00" stroke-width="1" shape-rendering="geometricPrecision"/>
<circle cx="784" cy="136.5" r="4.6" fill="none" stroke="#00ff00" stroke-width="1" shape-rendering="geometricPrecision"/>
<text x="780.4" y="141" font-size="12.85" fill="#ffffff" textLength="9" lengthAdjust="spacingAndGlyphs">13</text>
<text x="797" y="135.6" font-size="12.29" fill="#ffffff" textLength="23.5" lengthAdjust="spacingAndGlyphs">4Φ25</text>
<line x1="788.5" y1="176.5" x2="821.8" y2="176.5" stroke="#00ff00" stroke-width="1"/>
<path d="M800.8 177 Q801.2 172.5 803.4 168.2" fill="none" stroke="#00ff00" stroke-width="1" shape-rendering="geometricPrecision"/>
<path d="M807.8 177 Q808.2 172.5 810.6 168.2" fill="none" stroke="#00ff00" stroke-width="1" shape-rendering="geometricPrecision"/>
<path d="M814.8 177 Q815.2 172.5 817.8 168.2" fill="none" stroke="#00ff00" stroke-width="1" shape-rendering="geometricPrecision"/>
<path d="M821.8 177 Q822.2 172.5 825 168.2" fill="none" stroke="#00ff00" stroke-width="1" shape-rendering="geometricPrecision"/>
<circle cx="784" cy="176.8" r="4.6" fill="none" stroke="#00ff00" stroke-width="1" shape-rendering="geometricPrecision"/>
<text x="780.4" y="181.3" font-size="12.85" fill="#ffffff" textLength="9" lengthAdjust="spacingAndGlyphs">13</text>
<text x="797" y="186.2" font-size="11.73" fill="#ffffff" textLength="23.5" lengthAdjust="spacingAndGlyphs">4Φ25</text>
<text x="828.7" y="156.1" font-size="12.71" fill="#ffffff" textLength="23.6" lengthAdjust="spacingAndGlyphs">4Φ20</text>
<line x1="796" y1="156.5" x2="847.4" y2="156.5" stroke="#ff00ff" stroke-width="1"/>
<polyline points="802.5,154.2 805,157.1 802.5,159.8" fill="none" stroke="#ff00ff" stroke-width="1" shape-rendering="geometricPrecision"/>
<polyline points="824.5,154.2 822,157.1 824.5,159.8" fill="none" stroke="#ff00ff" stroke-width="1" shape-rendering="geometricPrecision"/>
<circle cx="852" cy="156.9" r="4.6" fill="none" stroke="#00ff00" stroke-width="1" shape-rendering="geometricPrecision"/>
<text x="848.4" y="161.4" font-size="12.85" fill="#ffffff" textLength="9" lengthAdjust="spacingAndGlyphs">13</text>
<text x="773.2" y="161" font-size="12.29" fill="#ffffff" textLength="38.5" lengthAdjust="spacingAndGlyphs">Φ10@150</text>
<text x="807" y="200.9" font-size="17.74" fill="#ffffff" textLength="42.8" lengthAdjust="spacingAndGlyphs" stroke="#000" stroke-width="0.3">18–18</text>
<line x1="806" y1="203.5" x2="832" y2="203.5" stroke="#ff00ff" stroke-width="1"/>
<line x1="451" y1="37.5" x2="479" y2="37.5" stroke="#00ff00" stroke-width="1"/>
<line x1="451.5" y1="32" x2="451.5" y2="56" stroke="#00ff00" stroke-width="1"/>
<line x1="478.5" y1="32" x2="478.5" y2="56" stroke="#00ff00" stroke-width="1"/>
<polyline points="450,39 453,36" fill="none" stroke="#00ff00" stroke-width="1" shape-rendering="geometricPrecision"/>
<polyline points="477,39 480,36" fill="none" stroke="#00ff00" stroke-width="1" shape-rendering="geometricPrecision"/>
<text x="459.5" y="36" font-size="7.68" fill="#00ff00" textLength="10.5" lengthAdjust="spacingAndGlyphs" font-weight="bold" stroke="#00ff00" stroke-width="0.45">600</text>
<line x1="483" y1="56.5" x2="523" y2="56.5" stroke="#00ff00" stroke-width="1"/>
<line x1="483" y1="83.5" x2="523" y2="83.5" stroke="#00ff00" stroke-width="1"/>
<line x1="519.5" y1="54" x2="519.5" y2="86" stroke="#00ff00" stroke-width="1"/>
<polyline points="517.5,58 520.5,55" fill="none" stroke="#00ff00" stroke-width="1" shape-rendering="geometricPrecision"/>
<polyline points="517.5,85 520.5,82" fill="none" stroke="#00ff00" stroke-width="1" shape-rendering="geometricPrecision"/>
<text x="0" y="0" font-size="7.68" fill="#00ff00" textLength="12" lengthAdjust="spacingAndGlyphs" transform="translate(516.5 76) rotate(-90)" font-weight="bold" stroke="#00ff00" stroke-width="0.4">600</text>
<line x1="427.5" y1="219.2" x2="427.5" y2="247.7" stroke="#ffffff" stroke-width="1"/>
<line x1="485.5" y1="219.2" x2="485.5" y2="233.7" stroke="#ffffff" stroke-width="1"/>
<line x1="427.5" y1="227.5" x2="486" y2="227.5" stroke="#ffffff" stroke-width="1"/>
<polyline points="428,227.7 425.5,229.2 427.5,230.7" fill="none" stroke="#ffffff" stroke-width="1" shape-rendering="geometricPrecision"/>
<polyline points="485,227.7 487.5,229.2 485.5,230.7" fill="none" stroke="#ffffff" stroke-width="1" shape-rendering="geometricPrecision"/>
<line x1="427.5" y1="233.5" x2="450" y2="233.5" stroke="#ffffff" stroke-width="1"/>
<line x1="462.3" y1="233.5" x2="486" y2="233.5" stroke="#ffffff" stroke-width="1"/>
<line x1="449.5" y1="233.5" x2="449.5" y2="259.7" stroke="#ffffff" stroke-width="1"/>
<line x1="462.5" y1="233.5" x2="462.5" y2="259.7" stroke="#ffffff" stroke-width="1"/>
<line x1="449.9" y1="259.5" x2="463" y2="259.5" stroke="#ffffff" stroke-width="1"/>
<rect x="451.6" y="229.9" width="8.8" height="27" fill="none" stroke="#ff0000" stroke-width="1.6"/>
<polyline points="452.4,238.7 454,240.2 458,240.2 459.6,238.7" fill="none" stroke="#ff0000" stroke-width="1" shape-rendering="geometricPrecision"/>
<polyline points="452.4,247.2 454,248.7 458,248.7 459.6,247.2" fill="none" stroke="#ff0000" stroke-width="1" shape-rendering="geometricPrecision"/>
<line x1="419.4" y1="216.5" x2="454.5" y2="216.5" stroke="#00ff00" stroke-width="1"/>
<path d="M446.8 216.5 Q449.8 222 451.4 229.2" fill="none" stroke="#00ff00" stroke-width="1.1" shape-rendering="geometricPrecision"/>
<path d="M449.6 216.5 Q452.6 222 454.2 229.2" fill="none" stroke="#00ff00" stroke-width="1.1" shape-rendering="geometricPrecision"/>
<path d="M452.2 216.5 Q455.2 222 456.9 229.2" fill="none" stroke="#00ff00" stroke-width="1.1" shape-rendering="geometricPrecision"/>
<path d="M454.5 216.5 Q457.5 222 459.6 229.2" fill="none" stroke="#00ff00" stroke-width="1.1" shape-rendering="geometricPrecision"/>
<circle cx="414.8" cy="216.3" r="4.6" fill="none" stroke="#00ff00" stroke-width="1" shape-rendering="geometricPrecision"/>
<text x="412.3" y="220.8" font-size="12.85" fill="#ffffff" textLength="5.4" lengthAdjust="spacingAndGlyphs">4</text>
<text x="430" y="213.7" font-size="12.01" fill="#ffffff" textLength="23.3" lengthAdjust="spacingAndGlyphs">4Φ25</text>
<text x="413.5" y="248.2" font-size="12.85" fill="#ffffff" textLength="22.2" lengthAdjust="spacingAndGlyphs">2Φ14</text>
<line x1="413.5" y1="248.5" x2="436" y2="248.5" stroke="#ff00ff" stroke-width="1"/>
<polyline points="436,248.7 442.5,244.9 456.5,244.9" fill="none" stroke="#ff00ff" stroke-width="1" shape-rendering="geometricPrecision"/>
<polyline points="436,248.7 442.5,253.7 456.5,253.7" fill="none" stroke="#ff00ff" stroke-width="1" shape-rendering="geometricPrecision"/>
<polyline points="452.5,240.2 455.2,244.7 458.8,239.2" fill="none" stroke="#ff00ff" stroke-width="1" shape-rendering="geometricPrecision"/>
<polyline points="452.5,249.2 455.2,253.7 458.8,248.2" fill="none" stroke="#ff00ff" stroke-width="1" shape-rendering="geometricPrecision"/>
<text x="469.3" y="244.1" font-size="13.13" fill="#ffffff" textLength="34.3" lengthAdjust="spacingAndGlyphs">Φ8@100</text>
<text x="467" y="253.9" font-size="12.57" fill="#ffffff" textLength="34.3" lengthAdjust="spacingAndGlyphs">Φ8@200</text>
<line x1="459.5" y1="238.5" x2="469.3" y2="238.5" stroke="#ff00ff" stroke-width="1"/>
<line x1="463" y1="246.5" x2="467" y2="246.5" stroke="#ff00ff" stroke-width="1"/>
<polyline points="458.5,238.2 465,247.2" fill="none" stroke="#ff00ff" stroke-width="1" shape-rendering="geometricPrecision"/>
<line x1="490.4" y1="227.5" x2="502" y2="227.5" stroke="#00ff00" stroke-width="1"/>
<line x1="467" y1="259.5" x2="502" y2="259.5" stroke="#00ff00" stroke-width="1"/>
<line x1="497.5" y1="224.7" x2="497.5" y2="261.7" stroke="#00ff00" stroke-width="1"/>
<polyline points="496.4,228.7 499.4,225.7" fill="none" stroke="#00ff00" stroke-width="1" shape-rendering="geometricPrecision"/>
<polyline points="496.4,260.7 499.4,257.7" fill="none" stroke="#00ff00" stroke-width="1" shape-rendering="geometricPrecision"/>
<text x="0" y="0" font-size="7.26" fill="#00ff00" textLength="13" lengthAdjust="spacingAndGlyphs" transform="translate(496.7 249.7) rotate(-90)" font-weight="bold" stroke="#00ff00" stroke-width="0.4">750</text>
<line x1="419.4" y1="263.5" x2="448.5" y2="263.5" stroke="#00ff00" stroke-width="1"/>
<polyline points="447,264.1 452.4,256.7" fill="none" stroke="#00ff00" stroke-width="1.1" shape-rendering="geometricPrecision"/>
<polyline points="449.3,264.1 454.9,256.7" fill="none" stroke="#00ff00" stroke-width="1.1" shape-rendering="geometricPrecision"/>
<polyline points="451.6,264.1 457.4,256.7" fill="none" stroke="#00ff00" stroke-width="1.1" shape-rendering="geometricPrecision"/>
<polyline points="453.9,264.1 459.9,256.7" fill="none" stroke="#00ff00" stroke-width="1.1" shape-rendering="geometricPrecision"/>
<circle cx="414.8" cy="263.9" r="4.6" fill="none" stroke="#00ff00" stroke-width="1" shape-rendering="geometricPrecision"/>
<text x="412.3" y="268.4" font-size="12.85" fill="#ffffff" textLength="5.4" lengthAdjust="spacingAndGlyphs">5</text>
<text x="426.5" y="274.5" font-size="12.01" fill="#ffffff" textLength="21" lengthAdjust="spacingAndGlyphs">4Φ18</text>
<line x1="449.5" y1="262.7" x2="449.5" y2="276.2" stroke="#00ff00" stroke-width="1"/>
<line x1="462.5" y1="262.7" x2="462.5" y2="276.2" stroke="#00ff00" stroke-width="1"/>
<line x1="447.5" y1="271.5" x2="464.5" y2="271.5" stroke="#00ff00" stroke-width="1"/>
<polyline points="448,273.2 451,270.2" fill="none" stroke="#00ff00" stroke-width="1" shape-rendering="geometricPrecision"/>
<polyline points="461,273.2 464,270.2" fill="none" stroke="#00ff00" stroke-width="1" shape-rendering="geometricPrecision"/>
<text x="450.8" y="270.1" font-size="7.82" fill="#00ff00" textLength="11" lengthAdjust="spacingAndGlyphs" font-weight="bold" stroke="#00ff00" stroke-width="0.45">350</text>
<text x="447.3" y="289.5" font-size="17.46" fill="#ffffff" textLength="28" lengthAdjust="spacingAndGlyphs" stroke="#000" stroke-width="0.3">3–3</text>
<line x1="446.8" y1="292.5" x2="462.3" y2="292.5" stroke="#ff00ff" stroke-width="1"/>
<line x1="542.5" y1="219.2" x2="542.5" y2="247.7" stroke="#ffffff" stroke-width="1"/>
<line x1="600.5" y1="219.2" x2="600.5" y2="233.7" stroke="#ffffff" stroke-width="1"/>
<line x1="542.5" y1="227.5" x2="601" y2="227.5" stroke="#ffffff" stroke-width="1"/>
<polyline points="543,227.7 540.5,229.2 542.5,230.7" fill="none" stroke="#ffffff" stroke-width="1" shape-rendering="geometricPrecision"/>
<polyline points="600,227.7 602.5,229.2 600.5,230.7" fill="none" stroke="#ffffff" stroke-width="1" shape-rendering="geometricPrecision"/>
<line x1="542.5" y1="233.5" x2="565" y2="233.5" stroke="#ffffff" stroke-width="1"/>
<line x1="577.3" y1="233.5" x2="601" y2="233.5" stroke="#ffffff" stroke-width="1"/>
<line x1="564.5" y1="233.5" x2="564.5" y2="259.7" stroke="#ffffff" stroke-width="1"/>
<line x1="577.5" y1="233.5" x2="577.5" y2="259.7" stroke="#ffffff" stroke-width="1"/>
<line x1="564.9" y1="259.5" x2="578" y2="259.5" stroke="#ffffff" stroke-width="1"/>
<rect x="566.6" y="229.9" width="8.8" height="27" fill="none" stroke="#ff0000" stroke-width="1.6"/>
<polyline points="567.4,238.7 569,240.2 573,240.2 574.6,238.7" fill="none" stroke="#ff0000" stroke-width="1" shape-rendering="geometricPrecision"/>
<polyline points="567.4,247.2 569,248.7 573,248.7 574.6,247.2" fill="none" stroke="#ff0000" stroke-width="1" shape-rendering="geometricPrecision"/>
<line x1="534.4" y1="216.5" x2="569.5" y2="216.5" stroke="#00ff00" stroke-width="1"/>
<path d="M561.8 216.5 Q564.8 222 567.2 229.2" fill="none" stroke="#00ff00" stroke-width="1.1" shape-rendering="geometricPrecision"/>
<path d="M570.3 216.5 Q573.3 222 575 229.2" fill="none" stroke="#00ff00" stroke-width="1.1" shape-rendering="geometricPrecision"/>
<circle cx="529.8" cy="216.3" r="4.6" fill="none" stroke="#00ff00" stroke-width="1" shape-rendering="geometricPrecision"/>
<text x="527.3" y="220.8" font-size="12.85" fill="#ffffff" textLength="5.4" lengthAdjust="spacingAndGlyphs">6</text>
<text x="545" y="213.7" font-size="12.01" fill="#ffffff" textLength="23.3" lengthAdjust="spacingAndGlyphs">2Φ16</text>
<text x="528.5" y="248.2" font-size="12.85" fill="#ffffff" textLength="22.2" lengthAdjust="spacingAndGlyphs">2Φ14</text>
<line x1="528.5" y1="248.5" x2="551" y2="248.5" stroke="#ff00ff" stroke-width="1"/>
<polyline points="551,248.7 557.5,244.9 571.5,244.9" fill="none" stroke="#ff00ff" stroke-width="1" shape-rendering="geometricPrecision"/>
<polyline points="551,248.7 557.5,253.7 571.5,253.7" fill="none" stroke="#ff00ff" stroke-width="1" shape-rendering="geometricPrecision"/>
<polyline points="567.5,240.2 570.2,244.7 573.8,239.2" fill="none" stroke="#ff00ff" stroke-width="1" shape-rendering="geometricPrecision"/>
<polyline points="567.5,249.2 570.2,253.7 573.8,248.2" fill="none" stroke="#ff00ff" stroke-width="1" shape-rendering="geometricPrecision"/>
<text x="584.3" y="244.1" font-size="13.13" fill="#ffffff" textLength="34.3" lengthAdjust="spacingAndGlyphs">Φ8@100</text>
<text x="582" y="253.9" font-size="12.57" fill="#ffffff" textLength="34.3" lengthAdjust="spacingAndGlyphs">Φ8@200</text>
<line x1="574.5" y1="238.5" x2="584.3" y2="238.5" stroke="#ff00ff" stroke-width="1"/>
<line x1="578" y1="246.5" x2="582" y2="246.5" stroke="#ff00ff" stroke-width="1"/>
<polyline points="573.5,238.2 580,247.2" fill="none" stroke="#ff00ff" stroke-width="1" shape-rendering="geometricPrecision"/>
<line x1="605.4" y1="227.5" x2="617" y2="227.5" stroke="#00ff00" stroke-width="1"/>
<line x1="582" y1="259.5" x2="617" y2="259.5" stroke="#00ff00" stroke-width="1"/>
<line x1="612.5" y1="224.7" x2="612.5" y2="261.7" stroke="#00ff00" stroke-width="1"/>
<polyline points="611.4,228.7 614.4,225.7" fill="none" stroke="#00ff00" stroke-width="1" shape-rendering="geometricPrecision"/>
<polyline points="611.4,260.7 614.4,257.7" fill="none" stroke="#00ff00" stroke-width="1" shape-rendering="geometricPrecision"/>
<text x="0" y="0" font-size="7.26" fill="#00ff00" textLength="13" lengthAdjust="spacingAndGlyphs" transform="translate(611.7 249.7) rotate(-90)" font-weight="bold" stroke="#00ff00" stroke-width="0.4">750</text>
<line x1="534.4" y1="263.5" x2="563.5" y2="263.5" stroke="#00ff00" stroke-width="1"/>
<polyline points="562,264.1 567.4,256.7" fill="none" stroke="#00ff00" stroke-width="1.1" shape-rendering="geometricPrecision"/>
<polyline points="564.3,264.1 569.9,256.7" fill="none" stroke="#00ff00" stroke-width="1.1" shape-rendering="geometricPrecision"/>
<polyline points="566.6,264.1 572.4,256.7" fill="none" stroke="#00ff00" stroke-width="1.1" shape-rendering="geometricPrecision"/>
<polyline points="568.9,264.1 574.9,256.7" fill="none" stroke="#00ff00" stroke-width="1.1" shape-rendering="geometricPrecision"/>
<circle cx="529.8" cy="263.9" r="4.6" fill="none" stroke="#00ff00" stroke-width="1" shape-rendering="geometricPrecision"/>
<text x="527.3" y="268.4" font-size="12.85" fill="#ffffff" textLength="5.4" lengthAdjust="spacingAndGlyphs">5</text>
<text x="541.5" y="274.5" font-size="12.01" fill="#ffffff" textLength="21" lengthAdjust="spacingAndGlyphs">4Φ18</text>
<line x1="564.5" y1="262.7" x2="564.5" y2="276.2" stroke="#00ff00" stroke-width="1"/>
<line x1="577.5" y1="262.7" x2="577.5" y2="276.2" stroke="#00ff00" stroke-width="1"/>
<line x1="562.5" y1="271.5" x2="579.5" y2="271.5" stroke="#00ff00" stroke-width="1"/>
<polyline points="563,273.2 566,270.2" fill="none" stroke="#00ff00" stroke-width="1" shape-rendering="geometricPrecision"/>
<polyline points="576,273.2 579,270.2" fill="none" stroke="#00ff00" stroke-width="1" shape-rendering="geometricPrecision"/>
<text x="565.8" y="270.1" font-size="7.82" fill="#00ff00" textLength="11" lengthAdjust="spacingAndGlyphs" font-weight="bold" stroke="#00ff00" stroke-width="0.45">350</text>
<text x="562.3" y="289.5" font-size="17.46" fill="#ffffff" textLength="28.5" lengthAdjust="spacingAndGlyphs" stroke="#000" stroke-width="0.3">4–4</text>
<line x1="561.8" y1="292.5" x2="577.3" y2="292.5" stroke="#ff00ff" stroke-width="1"/>
<line x1="656.5" y1="219.2" x2="656.5" y2="247.7" stroke="#ffffff" stroke-width="1"/>
<line x1="714.5" y1="219.2" x2="714.5" y2="233.7" stroke="#ffffff" stroke-width="1"/>
<line x1="656.5" y1="227.5" x2="715" y2="227.5" stroke="#ffffff" stroke-width="1"/>
<polyline points="657,227.7 654.5,229.2 656.5,230.7" fill="none" stroke="#ffffff" stroke-width="1" shape-rendering="geometricPrecision"/>
<polyline points="714,227.7 716.5,229.2 714.5,230.7" fill="none" stroke="#ffffff" stroke-width="1" shape-rendering="geometricPrecision"/>
<line x1="656.5" y1="233.5" x2="679" y2="233.5" stroke="#ffffff" stroke-width="1"/>
<line x1="691.3" y1="233.5" x2="715" y2="233.5" stroke="#ffffff" stroke-width="1"/>
<line x1="678.5" y1="233.5" x2="678.5" y2="259.7" stroke="#ffffff" stroke-width="1"/>
<line x1="691.5" y1="233.5" x2="691.5" y2="259.7" stroke="#ffffff" stroke-width="1"/>
<line x1="678.9" y1="259.5" x2="692" y2="259.5" stroke="#ffffff" stroke-width="1"/>
<rect x="680.6" y="229.9" width="8.8" height="27" fill="none" stroke="#ff0000" stroke-width="1.6"/>
<polyline points="681.4,238.7 683,240.2 687,240.2 688.6,238.7" fill="none" stroke="#ff0000" stroke-width="1" shape-rendering="geometricPrecision"/>
<polyline points="681.4,247.2 683,248.7 687,248.7 688.6,247.2" fill="none" stroke="#ff0000" stroke-width="1" shape-rendering="geometricPrecision"/>
<line x1="648.4" y1="216.5" x2="683.5" y2="216.5" stroke="#00ff00" stroke-width="1"/>
<path d="M675.8 216.5 Q678.8 222 680.4 229.2" fill="none" stroke="#00ff00" stroke-width="1.1" shape-rendering="geometricPrecision"/>
<path d="M678.6 216.5 Q681.6 222 683.2 229.2" fill="none" stroke="#00ff00" stroke-width="1.1" shape-rendering="geometricPrecision"/>
<path d="M681.2 216.5 Q684.2 222 685.9 229.2" fill="none" stroke="#00ff00" stroke-width="1.1" shape-rendering="geometricPrecision"/>
<path d="M683.5 216.5 Q686.5 222 688.6 229.2" fill="none" stroke="#00ff00" stroke-width="1.1" shape-rendering="geometricPrecision"/>
<circle cx="643.8" cy="216.3" r="4.6" fill="none" stroke="#00ff00" stroke-width="1" shape-rendering="geometricPrecision"/>
<text x="641.3" y="220.8" font-size="12.85" fill="#ffffff" textLength="5.4" lengthAdjust="spacingAndGlyphs">7</text>
<text x="659" y="213.7" font-size="12.01" fill="#ffffff" textLength="23.3" lengthAdjust="spacingAndGlyphs">4Φ25</text>
<text x="642.5" y="248.2" font-size="12.85" fill="#ffffff" textLength="22.2" lengthAdjust="spacingAndGlyphs">2Φ14</text>
<line x1="642.5" y1="248.5" x2="665" y2="248.5" stroke="#ff00ff" stroke-width="1"/>
<polyline points="665,248.7 671.5,244.9 685.5,244.9" fill="none" stroke="#ff00ff" stroke-width="1" shape-rendering="geometricPrecision"/>
<polyline points="665,248.7 671.5,253.7 685.5,253.7" fill="none" stroke="#ff00ff" stroke-width="1" shape-rendering="geometricPrecision"/>
<polyline points="681.5,240.2 684.2,244.7 687.8,239.2" fill="none" stroke="#ff00ff" stroke-width="1" shape-rendering="geometricPrecision"/>
<polyline points="681.5,249.2 684.2,253.7 687.8,248.2" fill="none" stroke="#ff00ff" stroke-width="1" shape-rendering="geometricPrecision"/>
<text x="698.3" y="244.1" font-size="13.13" fill="#ffffff" textLength="34.3" lengthAdjust="spacingAndGlyphs">Φ8@100</text>
<text x="696" y="253.9" font-size="12.57" fill="#ffffff" textLength="34.3" lengthAdjust="spacingAndGlyphs">Φ8@200</text>
<line x1="688.5" y1="238.5" x2="698.3" y2="238.5" stroke="#ff00ff" stroke-width="1"/>
<line x1="692" y1="246.5" x2="696" y2="246.5" stroke="#ff00ff" stroke-width="1"/>
<polyline points="687.5,238.2 694,247.2" fill="none" stroke="#ff00ff" stroke-width="1" shape-rendering="geometricPrecision"/>
<line x1="719.4" y1="227.5" x2="731" y2="227.5" stroke="#00ff00" stroke-width="1"/>
<line x1="696" y1="259.5" x2="731" y2="259.5" stroke="#00ff00" stroke-width="1"/>
<line x1="726.5" y1="224.7" x2="726.5" y2="261.7" stroke="#00ff00" stroke-width="1"/>
<polyline points="725.4,228.7 728.4,225.7" fill="none" stroke="#00ff00" stroke-width="1" shape-rendering="geometricPrecision"/>
<polyline points="725.4,260.7 728.4,257.7" fill="none" stroke="#00ff00" stroke-width="1" shape-rendering="geometricPrecision"/>
<text x="0" y="0" font-size="7.26" fill="#00ff00" textLength="13" lengthAdjust="spacingAndGlyphs" transform="translate(725.7 249.7) rotate(-90)" font-weight="bold" stroke="#00ff00" stroke-width="0.4">750</text>
<line x1="648.4" y1="263.5" x2="677.5" y2="263.5" stroke="#00ff00" stroke-width="1"/>
<polyline points="676,264.1 681.4,256.7" fill="none" stroke="#00ff00" stroke-width="1.1" shape-rendering="geometricPrecision"/>
<polyline points="678.3,264.1 683.9,256.7" fill="none" stroke="#00ff00" stroke-width="1.1" shape-rendering="geometricPrecision"/>
<polyline points="680.6,264.1 686.4,256.7" fill="none" stroke="#00ff00" stroke-width="1.1" shape-rendering="geometricPrecision"/>
<polyline points="682.9,264.1 688.9,256.7" fill="none" stroke="#00ff00" stroke-width="1.1" shape-rendering="geometricPrecision"/>
<circle cx="643.8" cy="263.9" r="4.6" fill="none" stroke="#00ff00" stroke-width="1" shape-rendering="geometricPrecision"/>
<text x="641.3" y="268.4" font-size="12.85" fill="#ffffff" textLength="5.4" lengthAdjust="spacingAndGlyphs">5</text>
<text x="655.5" y="274.5" font-size="12.01" fill="#ffffff" textLength="21" lengthAdjust="spacingAndGlyphs">4Φ18</text>
<line x1="678.5" y1="262.7" x2="678.5" y2="276.2" stroke="#00ff00" stroke-width="1"/>
<line x1="691.5" y1="262.7" x2="691.5" y2="276.2" stroke="#00ff00" stroke-width="1"/>
<line x1="676.5" y1="271.5" x2="693.5" y2="271.5" stroke="#00ff00" stroke-width="1"/>
<polyline points="677,273.2 680,270.2" fill="none" stroke="#00ff00" stroke-width="1" shape-rendering="geometricPrecision"/>
<polyline points="690,273.2 693,270.2" fill="none" stroke="#00ff00" stroke-width="1" shape-rendering="geometricPrecision"/>
<text x="679.8" y="270.1" font-size="7.82" fill="#00ff00" textLength="11" lengthAdjust="spacingAndGlyphs" font-weight="bold" stroke="#00ff00" stroke-width="0.45">350</text>
<text x="676.3" y="289.5" font-size="17.46" fill="#ffffff" textLength="28" lengthAdjust="spacingAndGlyphs" stroke="#000" stroke-width="0.3">5–5</text>
<line x1="675.8" y1="292.5" x2="691.3" y2="292.5" stroke="#ff00ff" stroke-width="1"/>
<line x1="788.5" y1="218.1" x2="788.5" y2="239.1" stroke="#ffffff" stroke-width="1"/>
<line x1="848.5" y1="218.1" x2="848.5" y2="239.1" stroke="#ffffff" stroke-width="1"/>
<line x1="788.2" y1="227.5" x2="848.7" y2="227.5" stroke="#ffffff" stroke-width="1"/>
<polyline points="788.7,227.4 786.2,228.9 788.2,230.4" fill="none" stroke="#ffffff" stroke-width="1" shape-rendering="geometricPrecision"/>
<polyline points="847.7,227.4 850.2,228.9 848.2,230.4" fill="none" stroke="#ffffff" stroke-width="1" shape-rendering="geometricPrecision"/>
<line x1="788.2" y1="232.5" x2="810.7" y2="232.5" stroke="#ffffff" stroke-width="1"/>
<line x1="822.8" y1="232.5" x2="848.7" y2="232.5" stroke="#ffffff" stroke-width="1"/>
<line x1="810.5" y1="232.4" x2="810.5" y2="247.4" stroke="#ffffff" stroke-width="1"/>
<line x1="822.5" y1="232.4" x2="822.5" y2="247.4" stroke="#ffffff" stroke-width="1"/>
<line x1="810.6" y1="246.5" x2="823.7" y2="246.5" stroke="#ffffff" stroke-width="1"/>
<rect x="813.5" y="229.8" width="6.2" height="14.6" fill="none" stroke="#ff0000" stroke-width="1.5"/>
<line x1="778.7" y1="215.5" x2="815" y2="215.5" stroke="#00ff00" stroke-width="1"/>
<path d="M806.2 215.8 Q809.2 221.3 813.3 228.9" fill="none" stroke="#00ff00" stroke-width="1" shape-rendering="geometricPrecision"/>
<path d="M807.8 215.8 Q810.8 221.3 815 228.9" fill="none" stroke="#00ff00" stroke-width="1" shape-rendering="geometricPrecision"/>
<path d="M809.4 215.8 Q812.4 221.3 816.7 228.9" fill="none" stroke="#00ff00" stroke-width="1" shape-rendering="geometricPrecision"/>
<path d="M811 215.8 Q814 221.3 818.4 228.9" fill="none" stroke="#00ff00" stroke-width="1" shape-rendering="geometricPrecision"/>
<path d="M812.6 215.8 Q815.6 221.3 820.1 228.9" fill="none" stroke="#00ff00" stroke-width="1" shape-rendering="geometricPrecision"/>
<circle cx="774" cy="215.6" r="4.6" fill="none" stroke="#00ff00" stroke-width="1" shape-rendering="geometricPrecision"/>
<text x="771.5" y="220.1" font-size="12.85" fill="#ffffff" textLength="5.4" lengthAdjust="spacingAndGlyphs">9</text>
<text x="788.2" y="213.4" font-size="12.57" fill="#ffffff" textLength="23" lengthAdjust="spacingAndGlyphs">4Φ22</text>
<line x1="850.7" y1="226.5" x2="861.2" y2="226.5" stroke="#00ff00" stroke-width="1"/>
<line x1="825.9" y1="247.5" x2="861.2" y2="247.5" stroke="#00ff00" stroke-width="1"/>
<line x1="857.5" y1="224.4" x2="857.5" y2="249.9" stroke="#00ff00" stroke-width="1"/>
<polyline points="855.5,228.4 858.5,225.4" fill="none" stroke="#00ff00" stroke-width="1" shape-rendering="geometricPrecision"/>
<polyline points="855.5,248.7 858.5,245.7" fill="none" stroke="#00ff00" stroke-width="1" shape-rendering="geometricPrecision"/>
<text x="0" y="0" font-size="7.26" fill="#00ff00" textLength="12" lengthAdjust="spacingAndGlyphs" transform="translate(855.4 242.9) rotate(-90)" font-weight="bold" stroke="#00ff00" stroke-width="0.4">500</text>
<text x="825.9" y="253.6" font-size="12.57" fill="#ffffff" textLength="33.1" lengthAdjust="spacingAndGlyphs">Φ8@100</text>
<polyline points="818.9,239.1 825.1,248.4" fill="none" stroke="#ff00ff" stroke-width="1" shape-rendering="geometricPrecision"/>
<line x1="778.7" y1="257.5" x2="815.7" y2="257.5" stroke="#00ff00" stroke-width="1"/>
<circle cx="774" cy="256.9" r="4.6" fill="none" stroke="#00ff00" stroke-width="1" shape-rendering="geometricPrecision"/>
<text x="771.5" y="261.4" font-size="12.85" fill="#ffffff" textLength="5.4" lengthAdjust="spacingAndGlyphs">8</text>
<polygon points="813.7,247.9 819.7,247.9 817,257.9" fill="#ff00ff" shape-rendering="geometricPrecision"/>
<text x="785.4" y="265.8" font-size="12.01" fill="#ffffff" textLength="21.8" lengthAdjust="spacingAndGlyphs">4Φ12</text>
<line x1="810.5" y1="250.7" x2="810.5" y2="271.4" stroke="#00ff00" stroke-width="1"/>
<line x1="822.5" y1="250.7" x2="822.5" y2="271.4" stroke="#00ff00" stroke-width="1"/>
<line x1="808.2" y1="265.5" x2="825.2" y2="265.5" stroke="#00ff00" stroke-width="1"/>
<polyline points="809.1,267.1 812.1,264.1" fill="none" stroke="#00ff00" stroke-width="1" shape-rendering="geometricPrecision"/>
<polyline points="821.3,267.1 824.3,264.1" fill="none" stroke="#00ff00" stroke-width="1" shape-rendering="geometricPrecision"/>
<text x="811.9" y="264.2" font-size="8.1" fill="#00ff00" textLength="10.4" lengthAdjust="spacingAndGlyphs" font-weight="bold" stroke="#00ff00" stroke-width="0.45">300</text>
<text x="804" y="282.7" font-size="18.58" fill="#ffffff" textLength="28" lengthAdjust="spacingAndGlyphs" stroke="#000" stroke-width="0.3">6–6</text>
<line x1="805.2" y1="285.5" x2="819.7" y2="285.5" stroke="#ff00ff" stroke-width="1"/>
<line x1="427.5" y1="315" x2="427.5" y2="343.5" stroke="#ffffff" stroke-width="1"/>
<line x1="485.5" y1="315" x2="485.5" y2="329.5" stroke="#ffffff" stroke-width="1"/>
<line x1="427.5" y1="323.5" x2="486" y2="323.5" stroke="#ffffff" stroke-width="1"/>
<polyline points="428,323.5 425.5,325 427.5,326.5" fill="none" stroke="#ffffff" stroke-width="1" shape-rendering="geometricPrecision"/>
<polyline points="485,323.5 487.5,325 485.5,326.5" fill="none" stroke="#ffffff" stroke-width="1" shape-rendering="geometricPrecision"/>
<line x1="427.5" y1="329.5" x2="450" y2="329.5" stroke="#ffffff" stroke-width="1"/>
<line x1="462.3" y1="329.5" x2="486" y2="329.5" stroke="#ffffff" stroke-width="1"/>
<line x1="449.5" y1="329.3" x2="449.5" y2="355.5" stroke="#ffffff" stroke-width="1"/>
<line x1="462.5" y1="329.3" x2="462.5" y2="355.5" stroke="#ffffff" stroke-width="1"/>
<line x1="449.9" y1="355.5" x2="463" y2="355.5" stroke="#ffffff" stroke-width="1"/>
<rect x="451.6" y="325.7" width="8.8" height="27" fill="none" stroke="#ff0000" stroke-width="1.6"/>
<polyline points="452.4,334.5 454,336 458,336 459.6,334.5" fill="none" stroke="#ff0000" stroke-width="1" shape-rendering="geometricPrecision"/>
<polyline points="452.4,343 454,344.5 458,344.5 459.6,343" fill="none" stroke="#ff0000" stroke-width="1" shape-rendering="geometricPrecision"/>
<line x1="419.4" y1="311.5" x2="454.5" y2="311.5" stroke="#00ff00" stroke-width="1"/>
<path d="M446.8 312.3 Q449.8 317.8 451.4 325" fill="none" stroke="#00ff00" stroke-width="1.1" shape-rendering="geometricPrecision"/>
<path d="M449.6 312.3 Q452.6 317.8 454.2 325" fill="none" stroke="#00ff00" stroke-width="1.1" shape-rendering="geometricPrecision"/>
<path d="M452.2 312.3 Q455.2 317.8 456.9 325" fill="none" stroke="#00ff00" stroke-width="1.1" shape-rendering="geometricPrecision"/>
<path d="M454.5 312.3 Q457.5 317.8 459.6 325" fill="none" stroke="#00ff00" stroke-width="1.1" shape-rendering="geometricPrecision"/>
<circle cx="414.8" cy="312.1" r="4.6" fill="none" stroke="#00ff00" stroke-width="1" shape-rendering="geometricPrecision"/>
<text x="411.2" y="316.6" font-size="12.85" fill="#ffffff" textLength="9" lengthAdjust="spacingAndGlyphs">14</text>
<text x="430" y="309.5" font-size="12.01" fill="#ffffff" textLength="23.3" lengthAdjust="spacingAndGlyphs">4Φ22</text>
<text x="413.5" y="344" font-size="12.85" fill="#ffffff" textLength="22.2" lengthAdjust="spacingAndGlyphs">2Φ14</text>
<line x1="413.5" y1="344.5" x2="436" y2="344.5" stroke="#ff00ff" stroke-width="1"/>
<polyline points="436,344.5 442.5,340.7 456.5,340.7" fill="none" stroke="#ff00ff" stroke-width="1" shape-rendering="geometricPrecision"/>
<polyline points="436,344.5 442.5,349.5 456.5,349.5" fill="none" stroke="#ff00ff" stroke-width="1" shape-rendering="geometricPrecision"/>
<polyline points="452.5,336 455.2,340.5 458.8,335" fill="none" stroke="#ff00ff" stroke-width="1" shape-rendering="geometricPrecision"/>
<polyline points="452.5,345 455.2,349.5 458.8,344" fill="none" stroke="#ff00ff" stroke-width="1" shape-rendering="geometricPrecision"/>
<text x="469.3" y="339.9" font-size="13.13" fill="#ffffff" textLength="34.3" lengthAdjust="spacingAndGlyphs">Φ8@100</text>
<text x="467" y="349.7" font-size="12.57" fill="#ffffff" textLength="34.3" lengthAdjust="spacingAndGlyphs">Φ8@200</text>
<line x1="459.5" y1="334.5" x2="469.3" y2="334.5" stroke="#ff00ff" stroke-width="1"/>
<line x1="463" y1="342.5" x2="467" y2="342.5" stroke="#ff00ff" stroke-width="1"/>
<polyline points="458.5,334 465,343" fill="none" stroke="#ff00ff" stroke-width="1" shape-rendering="geometricPrecision"/>
<line x1="490.4" y1="323.5" x2="502" y2="323.5" stroke="#00ff00" stroke-width="1"/>
<line x1="467" y1="355.5" x2="502" y2="355.5" stroke="#00ff00" stroke-width="1"/>
<line x1="497.5" y1="320.5" x2="497.5" y2="357.5" stroke="#00ff00" stroke-width="1"/>
<polyline points="496.4,324.5 499.4,321.5" fill="none" stroke="#00ff00" stroke-width="1" shape-rendering="geometricPrecision"/>
<polyline points="496.4,356.5 499.4,353.5" fill="none" stroke="#00ff00" stroke-width="1" shape-rendering="geometricPrecision"/>
<text x="0" y="0" font-size="7.26" fill="#00ff00" textLength="13" lengthAdjust="spacingAndGlyphs" transform="translate(496.7 345.5) rotate(-90)" font-weight="bold" stroke="#00ff00" stroke-width="0.4">750</text>
<line x1="419.4" y1="359.5" x2="448.5" y2="359.5" stroke="#00ff00" stroke-width="1"/>
<polyline points="447,359.9 452.4,352.5" fill="none" stroke="#00ff00" stroke-width="1.1" shape-rendering="geometricPrecision"/>
<polyline points="449.3,359.9 454.9,352.5" fill="none" stroke="#00ff00" stroke-width="1.1" shape-rendering="geometricPrecision"/>
<polyline points="451.6,359.9 457.4,352.5" fill="none" stroke="#00ff00" stroke-width="1.1" shape-rendering="geometricPrecision"/>
<polyline points="453.9,359.9 459.9,352.5" fill="none" stroke="#00ff00" stroke-width="1.1" shape-rendering="geometricPrecision"/>
<circle cx="414.8" cy="359.7" r="4.6" fill="none" stroke="#00ff00" stroke-width="1" shape-rendering="geometricPrecision"/>
<text x="411.2" y="364.2" font-size="12.85" fill="#ffffff" textLength="9" lengthAdjust="spacingAndGlyphs">15</text>
<text x="426.5" y="370.3" font-size="12.01" fill="#ffffff" textLength="21" lengthAdjust="spacingAndGlyphs">4Φ16</text>
<line x1="449.5" y1="358.5" x2="449.5" y2="372" stroke="#00ff00" stroke-width="1"/>
<line x1="462.5" y1="358.5" x2="462.5" y2="372" stroke="#00ff00" stroke-width="1"/>
<line x1="447.5" y1="367.5" x2="464.5" y2="367.5" stroke="#00ff00" stroke-width="1"/>
<polyline points="448,369 451,366" fill="none" stroke="#00ff00" stroke-width="1" shape-rendering="geometricPrecision"/>
<polyline points="461,369 464,366" fill="none" stroke="#00ff00" stroke-width="1" shape-rendering="geometricPrecision"/>
<text x="450.8" y="365.9" font-size="7.82" fill="#00ff00" textLength="11" lengthAdjust="spacingAndGlyphs" font-weight="bold" stroke="#00ff00" stroke-width="0.45">350</text>
<text x="447.3" y="385.3" font-size="17.46" fill="#ffffff" textLength="42.8" lengthAdjust="spacingAndGlyphs" stroke="#000" stroke-width="0.3">10–10</text>
<line x1="446.8" y1="388.5" x2="470.8" y2="388.5" stroke="#ff00ff" stroke-width="1"/>
<line x1="542.5" y1="315" x2="542.5" y2="343.5" stroke="#ffffff" stroke-width="1"/>
<line x1="600.5" y1="315" x2="600.5" y2="329.5" stroke="#ffffff" stroke-width="1"/>
<line x1="542.5" y1="323.5" x2="601" y2="323.5" stroke="#ffffff" stroke-width="1"/>
<polyline points="543,323.5 540.5,325 542.5,326.5" fill="none" stroke="#ffffff" stroke-width="1" shape-rendering="geometricPrecision"/>
<polyline points="600,323.5 602.5,325 600.5,326.5" fill="none" stroke="#ffffff" stroke-width="1" shape-rendering="geometricPrecision"/>
<line x1="542.5" y1="329.5" x2="565" y2="329.5" stroke="#ffffff" stroke-width="1"/>
<line x1="577.3" y1="329.5" x2="601" y2="329.5" stroke="#ffffff" stroke-width="1"/>
<line x1="564.5" y1="329.3" x2="564.5" y2="355.5" stroke="#ffffff" stroke-width="1"/>
<line x1="577.5" y1="329.3" x2="577.5" y2="355.5" stroke="#ffffff" stroke-width="1"/>
<line x1="564.9" y1="355.5" x2="578" y2="355.5" stroke="#ffffff" stroke-width="1"/>
<rect x="566.6" y="325.7" width="8.8" height="27" fill="none" stroke="#ff0000" stroke-width="1.6"/>
<polyline points="567.4,334.5 569,336 573,336 574.6,334.5" fill="none" stroke="#ff0000" stroke-width="1" shape-rendering="geometricPrecision"/>
<polyline points="567.4,343 569,344.5 573,344.5 574.6,343" fill="none" stroke="#ff0000" stroke-width="1" shape-rendering="geometricPrecision"/>
<line x1="534.4" y1="311.5" x2="569.5" y2="311.5" stroke="#00ff00" stroke-width="1"/>
<path d="M561.8 312.3 Q564.8 317.8 567.2 325" fill="none" stroke="#00ff00" stroke-width="1.1" shape-rendering="geometricPrecision"/>
<path d="M570.3 312.3 Q573.3 317.8 575 325" fill="none" stroke="#00ff00" stroke-width="1.1" shape-rendering="geometricPrecision"/>
<circle cx="529.8" cy="312.1" r="4.6" fill="none" stroke="#00ff00" stroke-width="1" shape-rendering="geometricPrecision"/>
<text x="526.2" y="316.6" font-size="12.85" fill="#ffffff" textLength="9" lengthAdjust="spacingAndGlyphs">16</text>
<text x="545" y="309.5" font-size="12.01" fill="#ffffff" textLength="23.3" lengthAdjust="spacingAndGlyphs">2Φ14</text>
<text x="528.5" y="344" font-size="12.85" fill="#ffffff" textLength="22.2" lengthAdjust="spacingAndGlyphs">2Φ14</text>
<line x1="528.5" y1="344.5" x2="551" y2="344.5" stroke="#ff00ff" stroke-width="1"/>
<polyline points="551,344.5 557.5,340.7 571.5,340.7" fill="none" stroke="#ff00ff" stroke-width="1" shape-rendering="geometricPrecision"/>
<polyline points="551,344.5 557.5,349.5 571.5,349.5" fill="none" stroke="#ff00ff" stroke-width="1" shape-rendering="geometricPrecision"/>
<polyline points="567.5,336 570.2,340.5 573.8,335" fill="none" stroke="#ff00ff" stroke-width="1" shape-rendering="geometricPrecision"/>
<polyline points="567.5,345 570.2,349.5 573.8,344" fill="none" stroke="#ff00ff" stroke-width="1" shape-rendering="geometricPrecision"/>
<text x="584.3" y="339.9" font-size="13.13" fill="#ffffff" textLength="34.3" lengthAdjust="spacingAndGlyphs">Φ8@100</text>
<text x="582" y="349.7" font-size="12.57" fill="#ffffff" textLength="34.3" lengthAdjust="spacingAndGlyphs">Φ8@200</text>
<line x1="574.5" y1="334.5" x2="584.3" y2="334.5" stroke="#ff00ff" stroke-width="1"/>
<line x1="578" y1="342.5" x2="582" y2="342.5" stroke="#ff00ff" stroke-width="1"/>
<polyline points="573.5,334 580,343" fill="none" stroke="#ff00ff" stroke-width="1" shape-rendering="geometricPrecision"/>
<line x1="605.4" y1="323.5" x2="617" y2="323.5" stroke="#00ff00" stroke-width="1"/>
<line x1="582" y1="355.5" x2="617" y2="355.5" stroke="#00ff00" stroke-width="1"/>
<line x1="612.5" y1="320.5" x2="612.5" y2="357.5" stroke="#00ff00" stroke-width="1"/>
<polyline points="611.4,324.5 614.4,321.5" fill="none" stroke="#00ff00" stroke-width="1" shape-rendering="geometricPrecision"/>
<polyline points="611.4,356.5 614.4,353.5" fill="none" stroke="#00ff00" stroke-width="1" shape-rendering="geometricPrecision"/>
<text x="0" y="0" font-size="7.26" fill="#00ff00" textLength="13" lengthAdjust="spacingAndGlyphs" transform="translate(611.7 345.5) rotate(-90)" font-weight="bold" stroke="#00ff00" stroke-width="0.4">750</text>
<line x1="534.4" y1="359.5" x2="563.5" y2="359.5" stroke="#00ff00" stroke-width="1"/>
<polyline points="562,359.9 567.4,352.5" fill="none" stroke="#00ff00" stroke-width="1.1" shape-rendering="geometricPrecision"/>
<polyline points="564.3,359.9 569.9,352.5" fill="none" stroke="#00ff00" stroke-width="1.1" shape-rendering="geometricPrecision"/>
<polyline points="566.6,359.9 572.4,352.5" fill="none" stroke="#00ff00" stroke-width="1.1" shape-rendering="geometricPrecision"/>
<polyline points="568.9,359.9 574.9,352.5" fill="none" stroke="#00ff00" stroke-width="1.1" shape-rendering="geometricPrecision"/>
<circle cx="529.8" cy="359.7" r="4.6" fill="none" stroke="#00ff00" stroke-width="1" shape-rendering="geometricPrecision"/>
<text x="526.2" y="364.2" font-size="12.85" fill="#ffffff" textLength="9" lengthAdjust="spacingAndGlyphs">15</text>
<text x="541.5" y="370.3" font-size="12.01" fill="#ffffff" textLength="21" lengthAdjust="spacingAndGlyphs">4Φ16</text>
<line x1="564.5" y1="358.5" x2="564.5" y2="372" stroke="#00ff00" stroke-width="1"/>
<line x1="577.5" y1="358.5" x2="577.5" y2="372" stroke="#00ff00" stroke-width="1"/>
<line x1="562.5" y1="367.5" x2="579.5" y2="367.5" stroke="#00ff00" stroke-width="1"/>
<polyline points="563,369 566,366" fill="none" stroke="#00ff00" stroke-width="1" shape-rendering="geometricPrecision"/>
<polyline points="576,369 579,366" fill="none" stroke="#00ff00" stroke-width="1" shape-rendering="geometricPrecision"/>
<text x="565.8" y="365.9" font-size="7.82" fill="#00ff00" textLength="11" lengthAdjust="spacingAndGlyphs" font-weight="bold" stroke="#00ff00" stroke-width="0.45">350</text>
<text x="562.3" y="385.3" font-size="17.46" fill="#ffffff" textLength="36" lengthAdjust="spacingAndGlyphs" stroke="#000" stroke-width="0.3">11–11</text>
<line x1="561.8" y1="388.5" x2="585.8" y2="388.5" stroke="#ff00ff" stroke-width="1"/>
<line x1="656.5" y1="315" x2="656.5" y2="343.5" stroke="#ffffff" stroke-width="1"/>
<line x1="714.5" y1="315" x2="714.5" y2="329.5" stroke="#ffffff" stroke-width="1"/>
<line x1="656.5" y1="323.5" x2="715" y2="323.5" stroke="#ffffff" stroke-width="1"/>
<polyline points="657,323.5 654.5,325 656.5,326.5" fill="none" stroke="#ffffff" stroke-width="1" shape-rendering="geometricPrecision"/>
<polyline points="714,323.5 716.5,325 714.5,326.5" fill="none" stroke="#ffffff" stroke-width="1" shape-rendering="geometricPrecision"/>
<line x1="656.5" y1="329.5" x2="679" y2="329.5" stroke="#ffffff" stroke-width="1"/>
<line x1="691.3" y1="329.5" x2="715" y2="329.5" stroke="#ffffff" stroke-width="1"/>
<line x1="678.5" y1="329.3" x2="678.5" y2="355.5" stroke="#ffffff" stroke-width="1"/>
<line x1="691.5" y1="329.3" x2="691.5" y2="355.5" stroke="#ffffff" stroke-width="1"/>
<line x1="678.9" y1="355.5" x2="692" y2="355.5" stroke="#ffffff" stroke-width="1"/>
<rect x="680.6" y="325.7" width="8.8" height="27" fill="none" stroke="#ff0000" stroke-width="1.6"/>
<polyline points="681.4,334.5 683,336 687,336 688.6,334.5" fill="none" stroke="#ff0000" stroke-width="1" shape-rendering="geometricPrecision"/>
<polyline points="681.4,343 683,344.5 687,344.5 688.6,343" fill="none" stroke="#ff0000" stroke-width="1" shape-rendering="geometricPrecision"/>
<line x1="648.4" y1="311.5" x2="683.5" y2="311.5" stroke="#00ff00" stroke-width="1"/>
<path d="M675.8 312.3 Q678.8 317.8 680.4 325" fill="none" stroke="#00ff00" stroke-width="1.1" shape-rendering="geometricPrecision"/>
<path d="M678.6 312.3 Q681.6 317.8 683.2 325" fill="none" stroke="#00ff00" stroke-width="1.1" shape-rendering="geometricPrecision"/>
<path d="M681.2 312.3 Q684.2 317.8 685.9 325" fill="none" stroke="#00ff00" stroke-width="1.1" shape-rendering="geometricPrecision"/>
<path d="M683.5 312.3 Q686.5 317.8 688.6 325" fill="none" stroke="#00ff00" stroke-width="1.1" shape-rendering="geometricPrecision"/>
<circle cx="643.8" cy="312.1" r="4.6" fill="none" stroke="#00ff00" stroke-width="1" shape-rendering="geometricPrecision"/>
<text x="640.2" y="316.6" font-size="12.85" fill="#ffffff" textLength="9" lengthAdjust="spacingAndGlyphs">17</text>
<text x="659" y="309.5" font-size="12.01" fill="#ffffff" textLength="23.3" lengthAdjust="spacingAndGlyphs">4Φ22</text>
<text x="642.5" y="344" font-size="12.85" fill="#ffffff" textLength="22.2" lengthAdjust="spacingAndGlyphs">2Φ14</text>
<line x1="642.5" y1="344.5" x2="665" y2="344.5" stroke="#ff00ff" stroke-width="1"/>
<polyline points="665,344.5 671.5,340.7 685.5,340.7" fill="none" stroke="#ff00ff" stroke-width="1" shape-rendering="geometricPrecision"/>
<polyline points="665,344.5 671.5,349.5 685.5,349.5" fill="none" stroke="#ff00ff" stroke-width="1" shape-rendering="geometricPrecision"/>
<polyline points="681.5,336 684.2,340.5 687.8,335" fill="none" stroke="#ff00ff" stroke-width="1" shape-rendering="geometricPrecision"/>
<polyline points="681.5,345 684.2,349.5 687.8,344" fill="none" stroke="#ff00ff" stroke-width="1" shape-rendering="geometricPrecision"/>
<text x="698.3" y="339.9" font-size="13.13" fill="#ffffff" textLength="34.3" lengthAdjust="spacingAndGlyphs">Φ8@100</text>
<text x="696" y="349.7" font-size="12.57" fill="#ffffff" textLength="34.3" lengthAdjust="spacingAndGlyphs">Φ8@200</text>
<line x1="688.5" y1="334.5" x2="698.3" y2="334.5" stroke="#ff00ff" stroke-width="1"/>
<line x1="692" y1="342.5" x2="696" y2="342.5" stroke="#ff00ff" stroke-width="1"/>
<polyline points="687.5,334 694,343" fill="none" stroke="#ff00ff" stroke-width="1" shape-rendering="geometricPrecision"/>
<line x1="719.4" y1="323.5" x2="731" y2="323.5" stroke="#00ff00" stroke-width="1"/>
<line x1="696" y1="355.5" x2="731" y2="355.5" stroke="#00ff00" stroke-width="1"/>
<line x1="726.5" y1="320.5" x2="726.5" y2="357.5" stroke="#00ff00" stroke-width="1"/>
<polyline points="725.4,324.5 728.4,321.5" fill="none" stroke="#00ff00" stroke-width="1" shape-rendering="geometricPrecision"/>
<polyline points="725.4,356.5 728.4,353.5" fill="none" stroke="#00ff00" stroke-width="1" shape-rendering="geometricPrecision"/>
<text x="0" y="0" font-size="7.26" fill="#00ff00" textLength="13" lengthAdjust="spacingAndGlyphs" transform="translate(725.7 345.5) rotate(-90)" font-weight="bold" stroke="#00ff00" stroke-width="0.4">750</text>
<line x1="648.4" y1="359.5" x2="677.5" y2="359.5" stroke="#00ff00" stroke-width="1"/>
<polyline points="676,359.9 681.4,352.5" fill="none" stroke="#00ff00" stroke-width="1.1" shape-rendering="geometricPrecision"/>
<polyline points="678.3,359.9 683.9,352.5" fill="none" stroke="#00ff00" stroke-width="1.1" shape-rendering="geometricPrecision"/>
<polyline points="680.6,359.9 686.4,352.5" fill="none" stroke="#00ff00" stroke-width="1.1" shape-rendering="geometricPrecision"/>
<polyline points="682.9,359.9 688.9,352.5" fill="none" stroke="#00ff00" stroke-width="1.1" shape-rendering="geometricPrecision"/>
<circle cx="643.8" cy="359.7" r="4.6" fill="none" stroke="#00ff00" stroke-width="1" shape-rendering="geometricPrecision"/>
<text x="640.2" y="364.2" font-size="12.85" fill="#ffffff" textLength="9" lengthAdjust="spacingAndGlyphs">15</text>
<text x="655.5" y="370.3" font-size="12.01" fill="#ffffff" textLength="21" lengthAdjust="spacingAndGlyphs">4Φ16</text>
<line x1="678.5" y1="358.5" x2="678.5" y2="372" stroke="#00ff00" stroke-width="1"/>
<line x1="691.5" y1="358.5" x2="691.5" y2="372" stroke="#00ff00" stroke-width="1"/>
<line x1="676.5" y1="367.5" x2="693.5" y2="367.5" stroke="#00ff00" stroke-width="1"/>
<polyline points="677,369 680,366" fill="none" stroke="#00ff00" stroke-width="1" shape-rendering="geometricPrecision"/>
<polyline points="690,369 693,366" fill="none" stroke="#00ff00" stroke-width="1" shape-rendering="geometricPrecision"/>
<text x="679.8" y="365.9" font-size="7.82" fill="#00ff00" textLength="11" lengthAdjust="spacingAndGlyphs" font-weight="bold" stroke="#00ff00" stroke-width="0.45">350</text>
<text x="676.3" y="385.3" font-size="17.46" fill="#ffffff" textLength="42.5" lengthAdjust="spacingAndGlyphs" stroke="#000" stroke-width="0.3">12–12</text>
<line x1="675.8" y1="388.5" x2="699.8" y2="388.5" stroke="#ff00ff" stroke-width="1"/>
<line x1="788.5" y1="314.2" x2="788.5" y2="335.2" stroke="#ffffff" stroke-width="1"/>
<line x1="848.5" y1="314.2" x2="848.5" y2="335.2" stroke="#ffffff" stroke-width="1"/>
<line x1="788.2" y1="323.5" x2="848.7" y2="323.5" stroke="#ffffff" stroke-width="1"/>
<polyline points="788.7,323.5 786.2,325 788.2,326.5" fill="none" stroke="#ffffff" stroke-width="1" shape-rendering="geometricPrecision"/>
<polyline points="847.7,323.5 850.2,325 848.2,326.5" fill="none" stroke="#ffffff" stroke-width="1" shape-rendering="geometricPrecision"/>
<line x1="788.2" y1="328.5" x2="810.7" y2="328.5" stroke="#ffffff" stroke-width="1"/>
<line x1="822.8" y1="328.5" x2="848.7" y2="328.5" stroke="#ffffff" stroke-width="1"/>
<line x1="810.5" y1="328.5" x2="810.5" y2="343.5" stroke="#ffffff" stroke-width="1"/>
<line x1="822.5" y1="328.5" x2="822.5" y2="343.5" stroke="#ffffff" stroke-width="1"/>
<line x1="810.6" y1="343.5" x2="823.7" y2="343.5" stroke="#ffffff" stroke-width="1"/>
<rect x="813.5" y="325.9" width="6.2" height="14.6" fill="none" stroke="#ff0000" stroke-width="1.5"/>
<line x1="778.7" y1="311.5" x2="815" y2="311.5" stroke="#00ff00" stroke-width="1"/>
<path d="M806.2 311.9 Q809.2 317.4 813.3 325" fill="none" stroke="#00ff00" stroke-width="1" shape-rendering="geometricPrecision"/>
<path d="M807.8 311.9 Q810.8 317.4 815 325" fill="none" stroke="#00ff00" stroke-width="1" shape-rendering="geometricPrecision"/>
<path d="M809.4 311.9 Q812.4 317.4 816.7 325" fill="none" stroke="#00ff00" stroke-width="1" shape-rendering="geometricPrecision"/>
<path d="M811 311.9 Q814 317.4 818.4 325" fill="none" stroke="#00ff00" stroke-width="1" shape-rendering="geometricPrecision"/>
<path d="M812.6 311.9 Q815.6 317.4 820.1 325" fill="none" stroke="#00ff00" stroke-width="1" shape-rendering="geometricPrecision"/>
<circle cx="774" cy="311.7" r="4.6" fill="none" stroke="#00ff00" stroke-width="1" shape-rendering="geometricPrecision"/>
<text x="770.4" y="316.2" font-size="12.85" fill="#ffffff" textLength="9" lengthAdjust="spacingAndGlyphs">18</text>
<text x="788.2" y="309.5" font-size="12.57" fill="#ffffff" textLength="23" lengthAdjust="spacingAndGlyphs">4Φ22</text>
<line x1="850.7" y1="323.5" x2="861.2" y2="323.5" stroke="#00ff00" stroke-width="1"/>
<line x1="825.9" y1="343.5" x2="861.2" y2="343.5" stroke="#00ff00" stroke-width="1"/>
<line x1="857.5" y1="320.5" x2="857.5" y2="346" stroke="#00ff00" stroke-width="1"/>
<polyline points="855.5,324.5 858.5,321.5" fill="none" stroke="#00ff00" stroke-width="1" shape-rendering="geometricPrecision"/>
<polyline points="855.5,344.8 858.5,341.8" fill="none" stroke="#00ff00" stroke-width="1" shape-rendering="geometricPrecision"/>
<text x="0" y="0" font-size="7.26" fill="#00ff00" textLength="12" lengthAdjust="spacingAndGlyphs" transform="translate(855.4 339) rotate(-90)" font-weight="bold" stroke="#00ff00" stroke-width="0.4">500</text>
<text x="830.3" y="339.9" font-size="12.01" fill="#ffffff" textLength="32.2" lengthAdjust="spacingAndGlyphs">Φ8@100</text>
<line x1="819.7" y1="335.5" x2="827.2" y2="335.5" stroke="#ff00ff" stroke-width="1"/>
<text x="785.4" y="345.3" font-size="12.99" fill="#ffffff" textLength="21.5" lengthAdjust="spacingAndGlyphs">2Φ14</text>
<line x1="776" y1="346.5" x2="808.7" y2="346.5" stroke="#ff00ff" stroke-width="1"/>
<line x1="778.7" y1="353.5" x2="815.7" y2="353.5" stroke="#00ff00" stroke-width="1"/>
<circle cx="774" cy="353" r="4.6" fill="none" stroke="#00ff00" stroke-width="1" shape-rendering="geometricPrecision"/>
<text x="770.4" y="357.5" font-size="12.85" fill="#ffffff" textLength="9" lengthAdjust="spacingAndGlyphs">16</text>
<polygon points="813.7,344 819.7,344 817,354" fill="#ff00ff" shape-rendering="geometricPrecision"/>
<text x="785.4" y="361.9" font-size="12.01" fill="#ffffff" textLength="21.8" lengthAdjust="spacingAndGlyphs">4Φ12</text>
<line x1="810.5" y1="346.8" x2="810.5" y2="367.5" stroke="#00ff00" stroke-width="1"/>
<line x1="822.5" y1="346.8" x2="822.5" y2="367.5" stroke="#00ff00" stroke-width="1"/>
<line x1="808.2" y1="361.5" x2="825.2" y2="361.5" stroke="#00ff00" stroke-width="1"/>
<polyline points="809.1,363.2 812.1,360.2" fill="none" stroke="#00ff00" stroke-width="1" shape-rendering="geometricPrecision"/>
<polyline points="821.3,363.2 824.3,360.2" fill="none" stroke="#00ff00" stroke-width="1" shape-rendering="geometricPrecision"/>
<text x="811.9" y="360.3" font-size="8.1" fill="#00ff00" textLength="10.4" lengthAdjust="spacingAndGlyphs" font-weight="bold" stroke="#00ff00" stroke-width="0.45">300</text>
<text x="804" y="378.8" font-size="18.58" fill="#ffffff" textLength="43" lengthAdjust="spacingAndGlyphs" stroke="#000" stroke-width="0.3">13–13</text>
<line x1="805.2" y1="381.5" x2="827.8" y2="381.5" stroke="#ff00ff" stroke-width="1"/>
<line x1="427.5" y1="404" x2="427.5" y2="432.5" stroke="#ffffff" stroke-width="1"/>
<line x1="485.5" y1="404" x2="485.5" y2="418.5" stroke="#ffffff" stroke-width="1"/>
<line x1="427.5" y1="412.5" x2="486" y2="412.5" stroke="#ffffff" stroke-width="1"/>
<polyline points="428,412.5 425.5,414 427.5,415.5" fill="none" stroke="#ffffff" stroke-width="1" shape-rendering="geometricPrecision"/>
<polyline points="485,412.5 487.5,414 485.5,415.5" fill="none" stroke="#ffffff" stroke-width="1" shape-rendering="geometricPrecision"/>
<line x1="427.5" y1="418.5" x2="450" y2="418.5" stroke="#ffffff" stroke-width="1"/>
<line x1="462.3" y1="418.5" x2="486" y2="418.5" stroke="#ffffff" stroke-width="1"/>
<line x1="449.5" y1="418.3" x2="449.5" y2="444.5" stroke="#ffffff" stroke-width="1"/>
<line x1="462.5" y1="418.3" x2="462.5" y2="444.5" stroke="#ffffff" stroke-width="1"/>
<line x1="449.9" y1="444.5" x2="463" y2="444.5" stroke="#ffffff" stroke-width="1"/>
<rect x="451.6" y="414.7" width="8.8" height="27" fill="none" stroke="#ff0000" stroke-width="1.6"/>
<polyline points="452.4,423.5 454,425 458,425 459.6,423.5" fill="none" stroke="#ff0000" stroke-width="1" shape-rendering="geometricPrecision"/>
<polyline points="452.4,432 454,433.5 458,433.5 459.6,432" fill="none" stroke="#ff0000" stroke-width="1" shape-rendering="geometricPrecision"/>
<line x1="419.4" y1="400.5" x2="454.5" y2="400.5" stroke="#00ff00" stroke-width="1"/>
<path d="M446.8 401.3 Q449.8 406.8 451.4 414" fill="none" stroke="#00ff00" stroke-width="1.1" shape-rendering="geometricPrecision"/>
<path d="M449.6 401.3 Q452.6 406.8 454.2 414" fill="none" stroke="#00ff00" stroke-width="1.1" shape-rendering="geometricPrecision"/>
<path d="M452.2 401.3 Q455.2 406.8 456.9 414" fill="none" stroke="#00ff00" stroke-width="1.1" shape-rendering="geometricPrecision"/>
<path d="M454.5 401.3 Q457.5 406.8 459.6 414" fill="none" stroke="#00ff00" stroke-width="1.1" shape-rendering="geometricPrecision"/>
<circle cx="414.8" cy="401.1" r="4.6" fill="none" stroke="#00ff00" stroke-width="1" shape-rendering="geometricPrecision"/>
<text x="411.2" y="405.6" font-size="12.85" fill="#ffffff" textLength="9" lengthAdjust="spacingAndGlyphs">20</text>
<text x="430" y="398.5" font-size="12.01" fill="#ffffff" textLength="23.3" lengthAdjust="spacingAndGlyphs">4Φ14</text>
<text x="413.5" y="433" font-size="12.85" fill="#ffffff" textLength="22.2" lengthAdjust="spacingAndGlyphs">2Φ14</text>
<line x1="413.5" y1="433.5" x2="436" y2="433.5" stroke="#ff00ff" stroke-width="1"/>
<polyline points="436,433.5 442.5,429.7 456.5,429.7" fill="none" stroke="#ff00ff" stroke-width="1" shape-rendering="geometricPrecision"/>
<polyline points="436,433.5 442.5,438.5 456.5,438.5" fill="none" stroke="#ff00ff" stroke-width="1" shape-rendering="geometricPrecision"/>
<polyline points="452.5,425 455.2,429.5 458.8,424" fill="none" stroke="#ff00ff" stroke-width="1" shape-rendering="geometricPrecision"/>
<polyline points="452.5,434 455.2,438.5 458.8,433" fill="none" stroke="#ff00ff" stroke-width="1" shape-rendering="geometricPrecision"/>
<text x="469.3" y="428.9" font-size="13.13" fill="#ffffff" textLength="34.3" lengthAdjust="spacingAndGlyphs">Φ8@100</text>
<text x="467" y="438.7" font-size="12.57" fill="#ffffff" textLength="34.3" lengthAdjust="spacingAndGlyphs">Φ8@200</text>
<line x1="459.5" y1="423.5" x2="469.3" y2="423.5" stroke="#ff00ff" stroke-width="1"/>
<line x1="463" y1="431.5" x2="467" y2="431.5" stroke="#ff00ff" stroke-width="1"/>
<polyline points="458.5,423 465,432" fill="none" stroke="#ff00ff" stroke-width="1" shape-rendering="geometricPrecision"/>
<line x1="490.4" y1="412.5" x2="502" y2="412.5" stroke="#00ff00" stroke-width="1"/>
<line x1="467" y1="444.5" x2="502" y2="444.5" stroke="#00ff00" stroke-width="1"/>
<line x1="497.5" y1="409.5" x2="497.5" y2="446.5" stroke="#00ff00" stroke-width="1"/>
<polyline points="496.4,413.5 499.4,410.5" fill="none" stroke="#00ff00" stroke-width="1" shape-rendering="geometricPrecision"/>
<polyline points="496.4,445.5 499.4,442.5" fill="none" stroke="#00ff00" stroke-width="1" shape-rendering="geometricPrecision"/>
<text x="0" y="0" font-size="7.26" fill="#00ff00" textLength="13" lengthAdjust="spacingAndGlyphs" transform="translate(496.7 434.5) rotate(-90)" font-weight="bold" stroke="#00ff00" stroke-width="0.4">750</text>
<line x1="419.4" y1="448.5" x2="448.5" y2="448.5" stroke="#00ff00" stroke-width="1"/>
<polyline points="447,448.9 452.4,441.5" fill="none" stroke="#00ff00" stroke-width="1.1" shape-rendering="geometricPrecision"/>
<polyline points="449.3,448.9 454.9,441.5" fill="none" stroke="#00ff00" stroke-width="1.1" shape-rendering="geometricPrecision"/>
<polyline points="451.6,448.9 457.4,441.5" fill="none" stroke="#00ff00" stroke-width="1.1" shape-rendering="geometricPrecision"/>
<polyline points="453.9,448.9 459.9,441.5" fill="none" stroke="#00ff00" stroke-width="1.1" shape-rendering="geometricPrecision"/>
<circle cx="414.8" cy="448.7" r="4.6" fill="none" stroke="#00ff00" stroke-width="1" shape-rendering="geometricPrecision"/>
<text x="411.2" y="453.2" font-size="12.85" fill="#ffffff" textLength="9" lengthAdjust="spacingAndGlyphs">19</text>
<text x="426.5" y="459.3" font-size="12.01" fill="#ffffff" textLength="21" lengthAdjust="spacingAndGlyphs">4Φ12</text>
<line x1="449.5" y1="447.5" x2="449.5" y2="461" stroke="#00ff00" stroke-width="1"/>
<line x1="462.5" y1="447.5" x2="462.5" y2="461" stroke="#00ff00" stroke-width="1"/>
<line x1="447.5" y1="456.5" x2="464.5" y2="456.5" stroke="#00ff00" stroke-width="1"/>
<polyline points="448,458 451,455" fill="none" stroke="#00ff00" stroke-width="1" shape-rendering="geometricPrecision"/>
<polyline points="461,458 464,455" fill="none" stroke="#00ff00" stroke-width="1" shape-rendering="geometricPrecision"/>
<text x="450.8" y="454.9" font-size="7.82" fill="#00ff00" textLength="11" lengthAdjust="spacingAndGlyphs" font-weight="bold" stroke="#00ff00" stroke-width="0.45">350</text>
<text x="447.3" y="474.3" font-size="17.46" fill="#ffffff" textLength="42.5" lengthAdjust="spacingAndGlyphs" stroke="#000" stroke-width="0.3">14–14</text>
<line x1="446.8" y1="477.5" x2="470.8" y2="477.5" stroke="#ff00ff" stroke-width="1"/>
<line x1="542.5" y1="404" x2="542.5" y2="432.5" stroke="#ffffff" stroke-width="1"/>
<line x1="600.5" y1="404" x2="600.5" y2="418.5" stroke="#ffffff" stroke-width="1"/>
<line x1="542.5" y1="412.5" x2="601" y2="412.5" stroke="#ffffff" stroke-width="1"/>
<polyline points="543,412.5 540.5,414 542.5,415.5" fill="none" stroke="#ffffff" stroke-width="1" shape-rendering="geometricPrecision"/>
<polyline points="600,412.5 602.5,414 600.5,415.5" fill="none" stroke="#ffffff" stroke-width="1" shape-rendering="geometricPrecision"/>
<line x1="542.5" y1="418.5" x2="565" y2="418.5" stroke="#ffffff" stroke-width="1"/>
<line x1="577.3" y1="418.5" x2="601" y2="418.5" stroke="#ffffff" stroke-width="1"/>
<line x1="564.5" y1="418.3" x2="564.5" y2="444.5" stroke="#ffffff" stroke-width="1"/>
<line x1="577.5" y1="418.3" x2="577.5" y2="444.5" stroke="#ffffff" stroke-width="1"/>
<line x1="564.9" y1="444.5" x2="578" y2="444.5" stroke="#ffffff" stroke-width="1"/>
<rect x="567.8" y="414.7" width="8.8" height="27" fill="none" stroke="#ff0000" stroke-width="1.6"/>
<polyline points="568.6,423.5 570.2,425 574.2,425 575.8,423.5" fill="none" stroke="#ff0000" stroke-width="1" shape-rendering="geometricPrecision"/>
<polyline points="568.6,432 570.2,433.5 574.2,433.5 575.8,432" fill="none" stroke="#ff0000" stroke-width="1" shape-rendering="geometricPrecision"/>
<line x1="534.4" y1="400.5" x2="569.5" y2="400.5" stroke="#00ff00" stroke-width="1"/>
<path d="M561.8 401.3 Q564.8 406.8 567.2 414" fill="none" stroke="#00ff00" stroke-width="1.1" shape-rendering="geometricPrecision"/>
<path d="M570.3 401.3 Q573.3 406.8 575 414" fill="none" stroke="#00ff00" stroke-width="1.1" shape-rendering="geometricPrecision"/>
<circle cx="529.8" cy="401.1" r="4.6" fill="none" stroke="#00ff00" stroke-width="1" shape-rendering="geometricPrecision"/>
<text x="526.2" y="405.6" font-size="12.85" fill="#ffffff" textLength="9" lengthAdjust="spacingAndGlyphs">21</text>
<text x="545" y="398.5" font-size="12.01" fill="#ffffff" textLength="23.3" lengthAdjust="spacingAndGlyphs">2Φ14</text>
<text x="528.5" y="433" font-size="12.85" fill="#ffffff" textLength="22.2" lengthAdjust="spacingAndGlyphs">2Φ14</text>
<line x1="528.5" y1="433.5" x2="551" y2="433.5" stroke="#ff00ff" stroke-width="1"/>
<polyline points="551,433.5 557.5,429.7 571.5,429.7" fill="none" stroke="#ff00ff" stroke-width="1" shape-rendering="geometricPrecision"/>
<polyline points="551,433.5 557.5,438.5 571.5,438.5" fill="none" stroke="#ff00ff" stroke-width="1" shape-rendering="geometricPrecision"/>
<polyline points="567.5,425 570.2,429.5 573.8,424" fill="none" stroke="#ff00ff" stroke-width="1" shape-rendering="geometricPrecision"/>
<polyline points="567.5,434 570.2,438.5 573.8,433" fill="none" stroke="#ff00ff" stroke-width="1" shape-rendering="geometricPrecision"/>
<text x="584.3" y="428.9" font-size="13.13" fill="#ffffff" textLength="34.3" lengthAdjust="spacingAndGlyphs">Φ8@100</text>
<text x="582" y="438.7" font-size="12.57" fill="#ffffff" textLength="34.3" lengthAdjust="spacingAndGlyphs">Φ8@200</text>
<line x1="574.5" y1="423.5" x2="584.3" y2="423.5" stroke="#ff00ff" stroke-width="1"/>
<line x1="578" y1="431.5" x2="582" y2="431.5" stroke="#ff00ff" stroke-width="1"/>
<polyline points="573.5,423 580,432" fill="none" stroke="#ff00ff" stroke-width="1" shape-rendering="geometricPrecision"/>
<line x1="605.4" y1="412.5" x2="617" y2="412.5" stroke="#00ff00" stroke-width="1"/>
<line x1="582" y1="444.5" x2="617" y2="444.5" stroke="#00ff00" stroke-width="1"/>
<line x1="612.5" y1="409.5" x2="612.5" y2="446.5" stroke="#00ff00" stroke-width="1"/>
<polyline points="611.4,413.5 614.4,410.5" fill="none" stroke="#00ff00" stroke-width="1" shape-rendering="geometricPrecision"/>
<polyline points="611.4,445.5 614.4,442.5" fill="none" stroke="#00ff00" stroke-width="1" shape-rendering="geometricPrecision"/>
<text x="0" y="0" font-size="7.26" fill="#00ff00" textLength="13" lengthAdjust="spacingAndGlyphs" transform="translate(611.7 434.5) rotate(-90)" font-weight="bold" stroke="#00ff00" stroke-width="0.4">750</text>
<line x1="534.4" y1="448.5" x2="563.5" y2="448.5" stroke="#00ff00" stroke-width="1"/>
<polyline points="562,448.9 567.4,441.5" fill="none" stroke="#00ff00" stroke-width="1.1" shape-rendering="geometricPrecision"/>
<polyline points="564.3,448.9 569.9,441.5" fill="none" stroke="#00ff00" stroke-width="1.1" shape-rendering="geometricPrecision"/>
<polyline points="566.6,448.9 572.4,441.5" fill="none" stroke="#00ff00" stroke-width="1.1" shape-rendering="geometricPrecision"/>
<polyline points="568.9,448.9 574.9,441.5" fill="none" stroke="#00ff00" stroke-width="1.1" shape-rendering="geometricPrecision"/>
<circle cx="529.8" cy="448.7" r="4.6" fill="none" stroke="#00ff00" stroke-width="1" shape-rendering="geometricPrecision"/>
<text x="526.2" y="453.2" font-size="12.85" fill="#ffffff" textLength="9" lengthAdjust="spacingAndGlyphs">19</text>
<text x="541.5" y="459.3" font-size="12.01" fill="#ffffff" textLength="21" lengthAdjust="spacingAndGlyphs">4Φ12</text>
<line x1="564.5" y1="447.5" x2="564.5" y2="461" stroke="#00ff00" stroke-width="1"/>
<line x1="577.5" y1="447.5" x2="577.5" y2="461" stroke="#00ff00" stroke-width="1"/>
<line x1="562.5" y1="456.5" x2="579.5" y2="456.5" stroke="#00ff00" stroke-width="1"/>
<polyline points="563,458 566,455" fill="none" stroke="#00ff00" stroke-width="1" shape-rendering="geometricPrecision"/>
<polyline points="576,458 579,455" fill="none" stroke="#00ff00" stroke-width="1" shape-rendering="geometricPrecision"/>
<text x="565.8" y="454.9" font-size="7.82" fill="#00ff00" textLength="11" lengthAdjust="spacingAndGlyphs" font-weight="bold" stroke="#00ff00" stroke-width="0.45">350</text>
<text x="562.3" y="474.3" font-size="17.46" fill="#ffffff" textLength="42.5" lengthAdjust="spacingAndGlyphs" stroke="#000" stroke-width="0.3">15–15</text>
<line x1="561.8" y1="477.5" x2="585.8" y2="477.5" stroke="#ff00ff" stroke-width="1"/>
<line x1="656.5" y1="404" x2="656.5" y2="432.5" stroke="#ffffff" stroke-width="1"/>
<line x1="714.5" y1="404" x2="714.5" y2="418.5" stroke="#ffffff" stroke-width="1"/>
<line x1="656.5" y1="412.5" x2="715" y2="412.5" stroke="#ffffff" stroke-width="1"/>
<polyline points="657,412.5 654.5,414 656.5,415.5" fill="none" stroke="#ffffff" stroke-width="1" shape-rendering="geometricPrecision"/>
<polyline points="714,412.5 716.5,414 714.5,415.5" fill="none" stroke="#ffffff" stroke-width="1" shape-rendering="geometricPrecision"/>
<line x1="656.5" y1="418.5" x2="679" y2="418.5" stroke="#ffffff" stroke-width="1"/>
<line x1="691.3" y1="418.5" x2="715" y2="418.5" stroke="#ffffff" stroke-width="1"/>
<line x1="678.5" y1="418.3" x2="678.5" y2="444.5" stroke="#ffffff" stroke-width="1"/>
<line x1="691.5" y1="418.3" x2="691.5" y2="444.5" stroke="#ffffff" stroke-width="1"/>
<line x1="678.9" y1="444.5" x2="692" y2="444.5" stroke="#ffffff" stroke-width="1"/>
<rect x="680.6" y="414.7" width="8.8" height="27" fill="none" stroke="#ff0000" stroke-width="1.6"/>
<polyline points="681.4,423.5 683,425 687,425 688.6,423.5" fill="none" stroke="#ff0000" stroke-width="1" shape-rendering="geometricPrecision"/>
<polyline points="681.4,432 683,433.5 687,433.5 688.6,432" fill="none" stroke="#ff0000" stroke-width="1" shape-rendering="geometricPrecision"/>
<line x1="648.4" y1="400.5" x2="683.5" y2="400.5" stroke="#00ff00" stroke-width="1"/>
<path d="M675.8 401.3 Q678.8 406.8 680.4 414" fill="none" stroke="#00ff00" stroke-width="1.1" shape-rendering="geometricPrecision"/>
<path d="M678.6 401.3 Q681.6 406.8 683.2 414" fill="none" stroke="#00ff00" stroke-width="1.1" shape-rendering="geometricPrecision"/>
<path d="M681.2 401.3 Q684.2 406.8 685.9 414" fill="none" stroke="#00ff00" stroke-width="1.1" shape-rendering="geometricPrecision"/>
<path d="M683.5 401.3 Q686.5 406.8 688.6 414" fill="none" stroke="#00ff00" stroke-width="1.1" shape-rendering="geometricPrecision"/>
<circle cx="643.8" cy="401.1" r="4.6" fill="none" stroke="#00ff00" stroke-width="1" shape-rendering="geometricPrecision"/>
<text x="640.2" y="405.6" font-size="12.85" fill="#ffffff" textLength="9" lengthAdjust="spacingAndGlyphs">21</text>
<text x="659" y="398.5" font-size="12.01" fill="#ffffff" textLength="23.3" lengthAdjust="spacingAndGlyphs">4Φ18</text>
<text x="642.5" y="433" font-size="12.85" fill="#ffffff" textLength="22.2" lengthAdjust="spacingAndGlyphs">2Φ14</text>
<line x1="642.5" y1="433.5" x2="665" y2="433.5" stroke="#ff00ff" stroke-width="1"/>
<polyline points="665,433.5 671.5,429.7 685.5,429.7" fill="none" stroke="#ff00ff" stroke-width="1" shape-rendering="geometricPrecision"/>
<polyline points="665,433.5 671.5,438.5 685.5,438.5" fill="none" stroke="#ff00ff" stroke-width="1" shape-rendering="geometricPrecision"/>
<polyline points="681.5,425 684.2,429.5 687.8,424" fill="none" stroke="#ff00ff" stroke-width="1" shape-rendering="geometricPrecision"/>
<polyline points="681.5,434 684.2,438.5 687.8,433" fill="none" stroke="#ff00ff" stroke-width="1" shape-rendering="geometricPrecision"/>
<text x="698.3" y="428.9" font-size="13.13" fill="#ffffff" textLength="34.3" lengthAdjust="spacingAndGlyphs">Φ8@100</text>
<text x="696" y="438.7" font-size="12.57" fill="#ffffff" textLength="34.3" lengthAdjust="spacingAndGlyphs">Φ8@200</text>
<line x1="688.5" y1="423.5" x2="698.3" y2="423.5" stroke="#ff00ff" stroke-width="1"/>
<line x1="692" y1="431.5" x2="696" y2="431.5" stroke="#ff00ff" stroke-width="1"/>
<polyline points="687.5,423 694,432" fill="none" stroke="#ff00ff" stroke-width="1" shape-rendering="geometricPrecision"/>
<line x1="719.4" y1="412.5" x2="731" y2="412.5" stroke="#00ff00" stroke-width="1"/>
<line x1="696" y1="444.5" x2="731" y2="444.5" stroke="#00ff00" stroke-width="1"/>
<line x1="726.5" y1="409.5" x2="726.5" y2="446.5" stroke="#00ff00" stroke-width="1"/>
<polyline points="725.4,413.5 728.4,410.5" fill="none" stroke="#00ff00" stroke-width="1" shape-rendering="geometricPrecision"/>
<polyline points="725.4,445.5 728.4,442.5" fill="none" stroke="#00ff00" stroke-width="1" shape-rendering="geometricPrecision"/>
<text x="0" y="0" font-size="7.26" fill="#00ff00" textLength="13" lengthAdjust="spacingAndGlyphs" transform="translate(725.7 434.5) rotate(-90)" font-weight="bold" stroke="#00ff00" stroke-width="0.4">750</text>
<line x1="648.4" y1="448.5" x2="677.5" y2="448.5" stroke="#00ff00" stroke-width="1"/>
<polyline points="676,448.9 681.4,441.5" fill="none" stroke="#00ff00" stroke-width="1.1" shape-rendering="geometricPrecision"/>
<polyline points="678.3,448.9 683.9,441.5" fill="none" stroke="#00ff00" stroke-width="1.1" shape-rendering="geometricPrecision"/>
<polyline points="680.6,448.9 686.4,441.5" fill="none" stroke="#00ff00" stroke-width="1.1" shape-rendering="geometricPrecision"/>
<polyline points="682.9,448.9 688.9,441.5" fill="none" stroke="#00ff00" stroke-width="1.1" shape-rendering="geometricPrecision"/>
<circle cx="643.8" cy="448.7" r="4.6" fill="none" stroke="#00ff00" stroke-width="1" shape-rendering="geometricPrecision"/>
<text x="640.2" y="453.2" font-size="12.85" fill="#ffffff" textLength="9" lengthAdjust="spacingAndGlyphs">19</text>
<text x="655.5" y="459.3" font-size="12.01" fill="#ffffff" textLength="21" lengthAdjust="spacingAndGlyphs">4Φ12</text>
<line x1="678.5" y1="447.5" x2="678.5" y2="461" stroke="#00ff00" stroke-width="1"/>
<line x1="691.5" y1="447.5" x2="691.5" y2="461" stroke="#00ff00" stroke-width="1"/>
<line x1="676.5" y1="456.5" x2="693.5" y2="456.5" stroke="#00ff00" stroke-width="1"/>
<polyline points="677,458 680,455" fill="none" stroke="#00ff00" stroke-width="1" shape-rendering="geometricPrecision"/>
<polyline points="690,458 693,455" fill="none" stroke="#00ff00" stroke-width="1" shape-rendering="geometricPrecision"/>
<text x="679.8" y="454.9" font-size="7.82" fill="#00ff00" textLength="11" lengthAdjust="spacingAndGlyphs" font-weight="bold" stroke="#00ff00" stroke-width="0.45">350</text>
<text x="676.3" y="474.3" font-size="17.46" fill="#ffffff" textLength="41.5" lengthAdjust="spacingAndGlyphs" stroke="#000" stroke-width="0.3">16–16</text>
<line x1="675.8" y1="477.5" x2="699.8" y2="477.5" stroke="#ff00ff" stroke-width="1"/>
<line x1="788.5" y1="403.2" x2="788.5" y2="424.2" stroke="#ffffff" stroke-width="1"/>
<line x1="848.5" y1="403.2" x2="848.5" y2="424.2" stroke="#ffffff" stroke-width="1"/>
<line x1="788.2" y1="412.5" x2="848.7" y2="412.5" stroke="#ffffff" stroke-width="1"/>
<polyline points="788.7,412.5 786.2,414 788.2,415.5" fill="none" stroke="#ffffff" stroke-width="1" shape-rendering="geometricPrecision"/>
<polyline points="847.7,412.5 850.2,414 848.2,415.5" fill="none" stroke="#ffffff" stroke-width="1" shape-rendering="geometricPrecision"/>
<line x1="788.2" y1="417.5" x2="810.7" y2="417.5" stroke="#ffffff" stroke-width="1"/>
<line x1="822.8" y1="417.5" x2="848.7" y2="417.5" stroke="#ffffff" stroke-width="1"/>
<line x1="810.5" y1="417.5" x2="810.5" y2="432.5" stroke="#ffffff" stroke-width="1"/>
<line x1="822.5" y1="417.5" x2="822.5" y2="432.5" stroke="#ffffff" stroke-width="1"/>
<line x1="810.6" y1="432.5" x2="823.7" y2="432.5" stroke="#ffffff" stroke-width="1"/>
<rect x="813.5" y="414.9" width="6.2" height="14.6" fill="none" stroke="#ff0000" stroke-width="1.5"/>
<line x1="778.7" y1="400.5" x2="815" y2="400.5" stroke="#00ff00" stroke-width="1"/>
<path d="M806.2 400.9 Q809.2 406.4 813.3 414" fill="none" stroke="#00ff00" stroke-width="1" shape-rendering="geometricPrecision"/>
<path d="M807.8 400.9 Q810.8 406.4 815 414" fill="none" stroke="#00ff00" stroke-width="1" shape-rendering="geometricPrecision"/>
<path d="M809.4 400.9 Q812.4 406.4 816.7 414" fill="none" stroke="#00ff00" stroke-width="1" shape-rendering="geometricPrecision"/>
<path d="M811 400.9 Q814 406.4 818.4 414" fill="none" stroke="#00ff00" stroke-width="1" shape-rendering="geometricPrecision"/>
<path d="M812.6 400.9 Q815.6 406.4 820.1 414" fill="none" stroke="#00ff00" stroke-width="1" shape-rendering="geometricPrecision"/>
<circle cx="774" cy="400.7" r="4.6" fill="none" stroke="#00ff00" stroke-width="1" shape-rendering="geometricPrecision"/>
<text x="770.4" y="405.2" font-size="12.85" fill="#ffffff" textLength="9" lengthAdjust="spacingAndGlyphs">24</text>
<text x="788.2" y="398.5" font-size="12.57" fill="#ffffff" textLength="23" lengthAdjust="spacingAndGlyphs">4Φ14</text>
<line x1="850.7" y1="412.5" x2="861.2" y2="412.5" stroke="#00ff00" stroke-width="1"/>
<line x1="825.9" y1="432.5" x2="861.2" y2="432.5" stroke="#00ff00" stroke-width="1"/>
<line x1="857.5" y1="409.5" x2="857.5" y2="435" stroke="#00ff00" stroke-width="1"/>
<polyline points="855.5,413.5 858.5,410.5" fill="none" stroke="#00ff00" stroke-width="1" shape-rendering="geometricPrecision"/>
<polyline points="855.5,433.8 858.5,430.8" fill="none" stroke="#00ff00" stroke-width="1" shape-rendering="geometricPrecision"/>
<text x="0" y="0" font-size="7.26" fill="#00ff00" textLength="12" lengthAdjust="spacingAndGlyphs" transform="translate(855.4 428) rotate(-90)" font-weight="bold" stroke="#00ff00" stroke-width="0.4">500</text>
<text x="830.3" y="428.9" font-size="12.01" fill="#ffffff" textLength="32.2" lengthAdjust="spacingAndGlyphs">Φ8@100</text>
<line x1="819.7" y1="424.5" x2="827.2" y2="424.5" stroke="#ff00ff" stroke-width="1"/>
<text x="785.4" y="434.3" font-size="12.99" fill="#ffffff" textLength="21.5" lengthAdjust="spacingAndGlyphs">2Φ14</text>
<line x1="776" y1="435.5" x2="808.7" y2="435.5" stroke="#ff00ff" stroke-width="1"/>
<line x1="778.7" y1="442.5" x2="815.7" y2="442.5" stroke="#00ff00" stroke-width="1"/>
<circle cx="774" cy="442" r="4.6" fill="none" stroke="#00ff00" stroke-width="1" shape-rendering="geometricPrecision"/>
<text x="770.4" y="446.5" font-size="12.85" fill="#ffffff" textLength="9" lengthAdjust="spacingAndGlyphs">23</text>
<polygon points="813.7,433 819.7,433 817,443" fill="#ff00ff" shape-rendering="geometricPrecision"/>
<text x="785.4" y="450.9" font-size="12.01" fill="#ffffff" textLength="21.8" lengthAdjust="spacingAndGlyphs">4Φ12</text>
<line x1="810.5" y1="435.8" x2="810.5" y2="456.5" stroke="#00ff00" stroke-width="1"/>
<line x1="822.5" y1="435.8" x2="822.5" y2="456.5" stroke="#00ff00" stroke-width="1"/>
<line x1="808.2" y1="450.5" x2="825.2" y2="450.5" stroke="#00ff00" stroke-width="1"/>
<polyline points="809.1,452.2 812.1,449.2" fill="none" stroke="#00ff00" stroke-width="1" shape-rendering="geometricPrecision"/>
<polyline points="821.3,452.2 824.3,449.2" fill="none" stroke="#00ff00" stroke-width="1" shape-rendering="geometricPrecision"/>
<text x="811.9" y="449.3" font-size="8.1" fill="#00ff00" textLength="10.4" lengthAdjust="spacingAndGlyphs" font-weight="bold" stroke="#00ff00" stroke-width="0.45">300</text>
<text x="804" y="467.8" font-size="18.58" fill="#ffffff" textLength="43" lengthAdjust="spacingAndGlyphs" stroke="#000" stroke-width="0.3">17–17</text>
<line x1="805.2" y1="470.5" x2="827.8" y2="470.5" stroke="#ff00ff" stroke-width="1"/>
<defs><pattern id="dc" width="2" height="3" patternUnits="userSpaceOnUse"><rect width="2" height="3" fill="#ff0000"/><rect x="1" y="1" width="1" height="1" fill="#000"/></pattern><pattern id="db" width="3" height="3" patternUnits="userSpaceOnUse" x="0" y="84"><rect width="3" height="3" fill="#ff0000"/><rect x="1" y="0" width="1" height="1" fill="#000"/><rect x="1" y="2" width="1" height="1" fill="#000"/></pattern></defs>
<rect x="96" y="84" width="2" height="59" fill="#ff0000"/>
<rect x="99" y="84" width="1" height="59" fill="#ff0000"/>
<rect x="101" y="84" width="1" height="59" fill="#ff0000"/>
<rect x="103" y="84" width="1" height="59" fill="#ff0000"/>
<rect x="96" y="84" width="8" height="22" fill="url(#dc)"/>
<rect x="96" y="134" width="8" height="9" fill="url(#dc)"/>
<rect x="95" y="84" width="1" height="59" fill="#00ff00"/>
<rect x="104" y="84" width="1" height="59" fill="#00ff00"/>
<rect x="96" y="154" width="2" height="105" fill="#ff0000"/>
<rect x="99" y="154" width="1" height="105" fill="#ff0000"/>
<rect x="101" y="154" width="1" height="105" fill="#ff0000"/>
<rect x="103" y="154" width="1" height="105" fill="#ff0000"/>
<rect x="96" y="154" width="8" height="8" fill="url(#dc)"/>
<rect x="96" y="196" width="8" height="26" fill="url(#dc)"/>
<rect x="96" y="249" width="8" height="10" fill="url(#dc)"/>
<rect x="95" y="154" width="1" height="105" fill="#ffff00"/>
<rect x="104" y="154" width="1" height="105" fill="#ffff00"/>
<rect x="96" y="271" width="2" height="142" fill="#ff0000"/>
<rect x="99" y="271" width="1" height="142" fill="#ff0000"/>
<rect x="101" y="271" width="1" height="142" fill="#ff0000"/>
<rect x="103" y="271" width="1" height="142" fill="#ff0000"/>
<rect x="96" y="271" width="8" height="9" fill="url(#dc)"/>
<rect x="96" y="309" width="8" height="47" fill="url(#dc)"/>
<rect x="96" y="369" width="8" height="44" fill="url(#dc)"/>
<rect x="95" y="271" width="1" height="142" fill="#ffff00"/>
<rect x="104" y="271" width="1" height="142" fill="#ffff00"/>
<rect x="212" y="84" width="2" height="59" fill="#ff0000"/>
<rect x="215" y="84" width="1" height="59" fill="#ff0000"/>
<rect x="217" y="84" width="1" height="59" fill="#ff0000"/>
<rect x="219" y="84" width="2" height="59" fill="#ff0000"/>
<rect x="212" y="84" width="9" height="22" fill="url(#dc)"/>
<rect x="212" y="134" width="9" height="9" fill="url(#dc)"/>
<rect x="211" y="84" width="1" height="59" fill="#00ff00"/>
<rect x="221" y="84" width="1" height="59" fill="#00ff00"/>
<rect x="212" y="154" width="2" height="105" fill="#ff0000"/>
<rect x="215" y="154" width="1" height="105" fill="#ff0000"/>
<rect x="217" y="154" width="1" height="105" fill="#ff0000"/>
<rect x="219" y="154" width="2" height="105" fill="#ff0000"/>
<rect x="212" y="154" width="9" height="8" fill="url(#dc)"/>
<rect x="212" y="196" width="9" height="26" fill="url(#dc)"/>
<rect x="212" y="249" width="9" height="10" fill="url(#dc)"/>
<rect x="211" y="154" width="1" height="105" fill="#ffff00"/>
<rect x="212" y="271" width="2" height="142" fill="#ff0000"/>
<rect x="215" y="271" width="1" height="142" fill="#ff0000"/>
<rect x="217" y="271" width="1" height="142" fill="#ff0000"/>
<rect x="219" y="271" width="2" height="142" fill="#ff0000"/>
<rect x="212" y="271" width="9" height="9" fill="url(#dc)"/>
<rect x="212" y="309" width="9" height="47" fill="url(#dc)"/>
<rect x="212" y="369" width="9" height="44" fill="url(#dc)"/>
<rect x="211" y="271" width="1" height="142" fill="#ffff00"/>
<rect x="257" y="84" width="2" height="59" fill="#ff0000"/>
<rect x="260" y="84" width="1" height="59" fill="#ff0000"/>
<rect x="262" y="84" width="1" height="59" fill="#ff0000"/>
<rect x="264" y="84" width="1" height="59" fill="#ff0000"/>
<rect x="257" y="84" width="8" height="22" fill="url(#dc)"/>
<rect x="257" y="134" width="8" height="9" fill="url(#dc)"/>
<rect x="256" y="84" width="1" height="59" fill="#00ff00"/>
<rect x="265" y="84" width="1" height="59" fill="#00ff00"/>
<rect x="257" y="154" width="2" height="105" fill="#ff0000"/>
<rect x="260" y="154" width="1" height="105" fill="#ff0000"/>
<rect x="262" y="154" width="1" height="105" fill="#ff0000"/>
<rect x="264" y="154" width="1" height="105" fill="#ff0000"/>
<rect x="257" y="154" width="8" height="8" fill="url(#dc)"/>
<rect x="257" y="196" width="8" height="26" fill="url(#dc)"/>
<rect x="257" y="249" width="8" height="10" fill="url(#dc)"/>
<rect x="256" y="154" width="1" height="105" fill="#ffff00"/>
<rect x="265" y="154" width="1" height="105" fill="#ffff00"/>
<rect x="257" y="271" width="2" height="142" fill="#ff0000"/>
<rect x="260" y="271" width="1" height="142" fill="#ff0000"/>
<rect x="262" y="271" width="1" height="142" fill="#ff0000"/>
<rect x="264" y="271" width="1" height="142" fill="#ff0000"/>
<rect x="257" y="271" width="8" height="9" fill="url(#dc)"/>
<rect x="257" y="309" width="8" height="47" fill="url(#dc)"/>
<rect x="257" y="369" width="8" height="44" fill="url(#dc)"/>
<rect x="256" y="271" width="1" height="142" fill="#ffff00"/>
<rect x="265" y="271" width="1" height="142" fill="#ffff00"/>
<rect x="374" y="84" width="2" height="59" fill="#ff0000"/>
<rect x="377" y="84" width="1" height="59" fill="#ff0000"/>
<rect x="379" y="84" width="1" height="59" fill="#ff0000"/>
<rect x="381" y="84" width="1" height="59" fill="#ff0000"/>
<rect x="374" y="84" width="8" height="22" fill="url(#dc)"/>
<rect x="374" y="134" width="8" height="9" fill="url(#dc)"/>
<rect x="373" y="84" width="1" height="59" fill="#00ff00"/>
<rect x="382" y="84" width="1" height="59" fill="#00ff00"/>
<rect x="374" y="154" width="2" height="105" fill="#ff0000"/>
<rect x="377" y="154" width="1" height="105" fill="#ff0000"/>
<rect x="379" y="154" width="1" height="105" fill="#ff0000"/>
<rect x="381" y="154" width="1" height="105" fill="#ff0000"/>
<rect x="374" y="154" width="8" height="8" fill="url(#dc)"/>
<rect x="374" y="196" width="8" height="26" fill="url(#dc)"/>
<rect x="374" y="249" width="8" height="10" fill="url(#dc)"/>
<rect x="373" y="154" width="1" height="105" fill="#ffff00"/>
<rect x="382" y="154" width="1" height="105" fill="#ffff00"/>
<rect x="374" y="271" width="2" height="142" fill="#ff0000"/>
<rect x="377" y="271" width="1" height="142" fill="#ff0000"/>
<rect x="379" y="271" width="1" height="142" fill="#ff0000"/>
<rect x="381" y="271" width="1" height="142" fill="#ff0000"/>
<rect x="374" y="271" width="8" height="9" fill="url(#dc)"/>
<rect x="374" y="309" width="8" height="47" fill="url(#dc)"/>
<rect x="374" y="369" width="8" height="44" fill="url(#dc)"/>
<rect x="373" y="271" width="1" height="142" fill="#ffff00"/>
<rect x="382" y="271" width="1" height="142" fill="#ffff00"/>
<rect x="105" y="85" width="106" height="2" fill="#ff0000"/>
<rect x="105" y="88" width="106" height="1" fill="#ff0000"/>
<rect x="105" y="91" width="106" height="1" fill="#ff0000"/>
<rect x="105" y="94" width="106" height="1" fill="#ff0000"/>
<rect x="105" y="85" width="17" height="10" fill="url(#db)"/>
<rect x="153" y="85" width="13" height="10" fill="url(#db)"/>
<rect x="191" y="85" width="20" height="10" fill="url(#db)"/>
<rect x="105" y="84" width="106" height="1" fill="#00ff00"/>
<rect x="105" y="95" width="106" height="1" fill="#00ff00"/>
<rect x="222" y="85" width="34" height="2" fill="#ff0000"/>
<rect x="222" y="88" width="34" height="1" fill="#ff0000"/>
<rect x="222" y="91" width="34" height="1" fill="#ff0000"/>
<rect x="222" y="94" width="34" height="1" fill="#ff0000"/>
<rect x="222" y="85" width="34" height="10" fill="url(#db)"/>
<rect x="222" y="84" width="34" height="1" fill="#00ff00"/>
<rect x="222" y="95" width="34" height="1" fill="#00ff00"/>
<rect x="266" y="85" width="107" height="2" fill="#ff0000"/>
<rect x="266" y="88" width="107" height="1" fill="#ff0000"/>
<rect x="266" y="91" width="107" height="1" fill="#ff0000"/>
<rect x="266" y="94" width="107" height="1" fill="#ff0000"/>
<rect x="266" y="85" width="18" height="10" fill="url(#db)"/>
<rect x="313" y="85" width="13" height="10" fill="url(#db)"/>
<rect x="355" y="85" width="18" height="10" fill="url(#db)"/>
<rect x="266" y="84" width="107" height="1" fill="#00ff00"/>
<rect x="266" y="95" width="107" height="1" fill="#00ff00"/>
<rect x="96" y="85" width="9" height="10" fill="#ff0000"/>
<rect x="98" y="87" width="1" height="1" fill="#000"/>
<rect x="98" y="90" width="1" height="1" fill="#000"/>
<rect x="98" y="93" width="1" height="1" fill="#000"/>
<rect x="100" y="87" width="1" height="1" fill="#000"/>
<rect x="100" y="90" width="1" height="1" fill="#000"/>
<rect x="100" y="93" width="1" height="1" fill="#000"/>
<rect x="102" y="87" width="1" height="1" fill="#000"/>
<rect x="102" y="90" width="1" height="1" fill="#000"/>
<rect x="102" y="93" width="1" height="1" fill="#000"/>
<rect x="211" y="85" width="11" height="10" fill="#ff0000"/>
<rect x="214" y="87" width="1" height="1" fill="#000"/>
<rect x="214" y="90" width="1" height="1" fill="#000"/>
<rect x="214" y="93" width="1" height="1" fill="#000"/>
<rect x="216" y="87" width="1" height="1" fill="#000"/>
<rect x="216" y="90" width="1" height="1" fill="#000"/>
<rect x="216" y="93" width="1" height="1" fill="#000"/>
<rect x="218" y="87" width="1" height="1" fill="#000"/>
<rect x="218" y="90" width="1" height="1" fill="#000"/>
<rect x="218" y="93" width="1" height="1" fill="#000"/>
<rect x="256" y="85" width="10" height="10" fill="#ff0000"/>
<rect x="259" y="87" width="1" height="1" fill="#000"/>
<rect x="259" y="90" width="1" height="1" fill="#000"/>
<rect x="259" y="93" width="1" height="1" fill="#000"/>
<rect x="261" y="87" width="1" height="1" fill="#000"/>
<rect x="261" y="90" width="1" height="1" fill="#000"/>
<rect x="261" y="93" width="1" height="1" fill="#000"/>
<rect x="263" y="87" width="1" height="1" fill="#000"/>
<rect x="263" y="90" width="1" height="1" fill="#000"/>
<rect x="263" y="93" width="1" height="1" fill="#000"/>
<rect x="373" y="85" width="9" height="10" fill="#ff0000"/>
<rect x="376" y="87" width="1" height="1" fill="#000"/>
<rect x="376" y="90" width="1" height="1" fill="#000"/>
<rect x="376" y="93" width="1" height="1" fill="#000"/>
<rect x="378" y="87" width="1" height="1" fill="#000"/>
<rect x="378" y="90" width="1" height="1" fill="#000"/>
<rect x="378" y="93" width="1" height="1" fill="#000"/>
<rect x="380" y="87" width="1" height="1" fill="#000"/>
<rect x="380" y="90" width="1" height="1" fill="#000"/>
<rect x="380" y="93" width="1" height="1" fill="#000"/>
<rect x="105" y="202" width="106" height="2" fill="#ff0000"/>
<rect x="105" y="205" width="106" height="1" fill="#ff0000"/>
<rect x="105" y="208" width="106" height="1" fill="#ff0000"/>
<rect x="105" y="211" width="106" height="1" fill="#ff0000"/>
<rect x="105" y="202" width="17" height="10" fill="url(#db)"/>
<rect x="153" y="202" width="13" height="10" fill="url(#db)"/>
<rect x="191" y="202" width="20" height="10" fill="url(#db)"/>
<rect x="105" y="201" width="106" height="1" fill="#ffff00"/>
<rect x="105" y="212" width="106" height="1" fill="#ffff00"/>
<rect x="222" y="202" width="34" height="2" fill="#ff0000"/>
<rect x="222" y="205" width="34" height="1" fill="#ff0000"/>
<rect x="222" y="208" width="34" height="1" fill="#ff0000"/>
<rect x="222" y="211" width="34" height="1" fill="#ff0000"/>
<rect x="222" y="202" width="34" height="10" fill="url(#db)"/>
<rect x="222" y="201" width="34" height="1" fill="#ffff00"/>
<rect x="266" y="202" width="107" height="2" fill="#ff0000"/>
<rect x="266" y="205" width="107" height="1" fill="#ff0000"/>
<rect x="266" y="208" width="107" height="1" fill="#ff0000"/>
<rect x="266" y="211" width="107" height="1" fill="#ff0000"/>
<rect x="266" y="202" width="18" height="10" fill="url(#db)"/>
<rect x="313" y="202" width="13" height="10" fill="url(#db)"/>
<rect x="355" y="202" width="18" height="10" fill="url(#db)"/>
<rect x="266" y="201" width="107" height="1" fill="#ffff00"/>
<rect x="266" y="212" width="107" height="1" fill="#ffff00"/>
<rect x="96" y="202" width="9" height="10" fill="#ff0000"/>
<rect x="98" y="204" width="1" height="1" fill="#000"/>
<rect x="98" y="207" width="1" height="1" fill="#000"/>
<rect x="98" y="210" width="1" height="1" fill="#000"/>
<rect x="100" y="204" width="1" height="1" fill="#000"/>
<rect x="100" y="207" width="1" height="1" fill="#000"/>
<rect x="100" y="210" width="1" height="1" fill="#000"/>
<rect x="102" y="204" width="1" height="1" fill="#000"/>
<rect x="102" y="207" width="1" height="1" fill="#000"/>
<rect x="102" y="210" width="1" height="1" fill="#000"/>
<rect x="211" y="202" width="11" height="10" fill="#ff0000"/>
<rect x="214" y="204" width="1" height="1" fill="#000"/>
<rect x="214" y="207" width="1" height="1" fill="#000"/>
<rect x="214" y="210" width="1" height="1" fill="#000"/>
<rect x="216" y="204" width="1" height="1" fill="#000"/>
<rect x="216" y="207" width="1" height="1" fill="#000"/>
<rect x="216" y="210" width="1" height="1" fill="#000"/>
<rect x="218" y="204" width="1" height="1" fill="#000"/>
<rect x="218" y="207" width="1" height="1" fill="#000"/>
<rect x="218" y="210" width="1" height="1" fill="#000"/>
<rect x="256" y="202" width="10" height="10" fill="#ff0000"/>
<rect x="259" y="204" width="1" height="1" fill="#000"/>
<rect x="259" y="207" width="1" height="1" fill="#000"/>
<rect x="259" y="210" width="1" height="1" fill="#000"/>
<rect x="261" y="204" width="1" height="1" fill="#000"/>
<rect x="261" y="207" width="1" height="1" fill="#000"/>
<rect x="261" y="210" width="1" height="1" fill="#000"/>
<rect x="263" y="204" width="1" height="1" fill="#000"/>
<rect x="263" y="207" width="1" height="1" fill="#000"/>
<rect x="263" y="210" width="1" height="1" fill="#000"/>
<rect x="373" y="202" width="9" height="10" fill="#ff0000"/>
<rect x="376" y="204" width="1" height="1" fill="#000"/>
<rect x="376" y="207" width="1" height="1" fill="#000"/>
<rect x="376" y="210" width="1" height="1" fill="#000"/>
<rect x="378" y="204" width="1" height="1" fill="#000"/>
<rect x="378" y="207" width="1" height="1" fill="#000"/>
<rect x="378" y="210" width="1" height="1" fill="#000"/>
<rect x="380" y="204" width="1" height="1" fill="#000"/>
<rect x="380" y="207" width="1" height="1" fill="#000"/>
<rect x="380" y="210" width="1" height="1" fill="#000"/>
<rect x="105" y="318" width="106" height="2" fill="#ff0000"/>
<rect x="105" y="321" width="106" height="1" fill="#ff0000"/>
<rect x="105" y="324" width="106" height="1" fill="#ff0000"/>
<rect x="105" y="327" width="106" height="1" fill="#ff0000"/>
<rect x="105" y="318" width="17" height="10" fill="url(#db)"/>
<rect x="153" y="318" width="13" height="10" fill="url(#db)"/>
<rect x="191" y="318" width="20" height="10" fill="url(#db)"/>
<rect x="105" y="328" width="106" height="1" fill="#ffff00"/>
<rect x="222" y="318" width="34" height="2" fill="#ff0000"/>
<rect x="222" y="321" width="34" height="1" fill="#ff0000"/>
<rect x="222" y="324" width="34" height="1" fill="#ff0000"/>
<rect x="222" y="327" width="34" height="1" fill="#ff0000"/>
<rect x="222" y="318" width="34" height="10" fill="url(#db)"/>
<rect x="266" y="318" width="107" height="2" fill="#ff0000"/>
<rect x="266" y="321" width="107" height="1" fill="#ff0000"/>
<rect x="266" y="324" width="107" height="1" fill="#ff0000"/>
<rect x="266" y="327" width="107" height="1" fill="#ff0000"/>
<rect x="266" y="318" width="18" height="10" fill="url(#db)"/>
<rect x="313" y="318" width="13" height="10" fill="url(#db)"/>
<rect x="355" y="318" width="18" height="10" fill="url(#db)"/>
<rect x="266" y="328" width="107" height="1" fill="#ffff00"/>
<rect x="96" y="318" width="9" height="10" fill="#ff0000"/>
<rect x="98" y="320" width="1" height="1" fill="#000"/>
<rect x="98" y="323" width="1" height="1" fill="#000"/>
<rect x="98" y="326" width="1" height="1" fill="#000"/>
<rect x="100" y="320" width="1" height="1" fill="#000"/>
<rect x="100" y="323" width="1" height="1" fill="#000"/>
<rect x="100" y="326" width="1" height="1" fill="#000"/>
<rect x="102" y="320" width="1" height="1" fill="#000"/>
<rect x="102" y="323" width="1" height="1" fill="#000"/>
<rect x="102" y="326" width="1" height="1" fill="#000"/>
<rect x="211" y="318" width="11" height="10" fill="#ff0000"/>
<rect x="214" y="320" width="1" height="1" fill="#000"/>
<rect x="214" y="323" width="1" height="1" fill="#000"/>
<rect x="214" y="326" width="1" height="1" fill="#000"/>
<rect x="216" y="320" width="1" height="1" fill="#000"/>
<rect x="216" y="323" width="1" height="1" fill="#000"/>
<rect x="216" y="326" width="1" height="1" fill="#000"/>
<rect x="218" y="320" width="1" height="1" fill="#000"/>
<rect x="218" y="323" width="1" height="1" fill="#000"/>
<rect x="218" y="326" width="1" height="1" fill="#000"/>
<rect x="256" y="318" width="10" height="10" fill="#ff0000"/>
<rect x="259" y="320" width="1" height="1" fill="#000"/>
<rect x="259" y="323" width="1" height="1" fill="#000"/>
<rect x="259" y="326" width="1" height="1" fill="#000"/>
<rect x="261" y="320" width="1" height="1" fill="#000"/>
<rect x="261" y="323" width="1" height="1" fill="#000"/>
<rect x="261" y="326" width="1" height="1" fill="#000"/>
<rect x="263" y="320" width="1" height="1" fill="#000"/>
<rect x="263" y="323" width="1" height="1" fill="#000"/>
<rect x="263" y="326" width="1" height="1" fill="#000"/>
<rect x="373" y="318" width="9" height="10" fill="#ff0000"/>
<rect x="376" y="320" width="1" height="1" fill="#000"/>
<rect x="376" y="323" width="1" height="1" fill="#000"/>
<rect x="376" y="326" width="1" height="1" fill="#000"/>
<rect x="378" y="320" width="1" height="1" fill="#000"/>
<rect x="378" y="323" width="1" height="1" fill="#000"/>
<rect x="378" y="326" width="1" height="1" fill="#000"/>
<rect x="380" y="320" width="1" height="1" fill="#000"/>
<rect x="380" y="323" width="1" height="1" fill="#000"/>
<rect x="380" y="326" width="1" height="1" fill="#000"/>
<rect x="95" y="84" width="288" height="1" fill="#00ff00"/>
<line x1="77" y1="143.5" x2="233" y2="143.5" stroke="#00ff00" stroke-width="1"/>
<line x1="243" y1="143.5" x2="409" y2="143.5" stroke="#00ff00" stroke-width="1"/>
<line x1="77" y1="153.5" x2="233" y2="153.5" stroke="#00ff00" stroke-width="1"/>
<line x1="243" y1="153.5" x2="409" y2="153.5" stroke="#00ff00" stroke-width="1"/>
<line x1="77" y1="259.5" x2="233" y2="259.5" stroke="#00ff00" stroke-width="1"/>
<line x1="243" y1="259.5" x2="409" y2="259.5" stroke="#00ff00" stroke-width="1"/>
<line x1="77" y1="270.5" x2="233" y2="270.5" stroke="#00ff00" stroke-width="1"/>
<line x1="243" y1="270.5" x2="409" y2="270.5" stroke="#00ff00" stroke-width="1"/>
<polyline points="233.5,143.5 233.5,137 242.5,146.5 242.5,143.5" fill="none" stroke="#ff00ff" stroke-width="1" shape-rendering="geometricPrecision"/>
<polyline points="233.5,153.5 233.5,147 242.5,156.5 242.5,153.5" fill="none" stroke="#ff00ff" stroke-width="1" shape-rendering="geometricPrecision"/>
<polyline points="233.5,259.5 233.5,253 242.5,262.5 242.5,259.5" fill="none" stroke="#ff00ff" stroke-width="1" shape-rendering="geometricPrecision"/>
<polyline points="233.5,270.5 233.5,264 242.5,273.5 242.5,270.5" fill="none" stroke="#ff00ff" stroke-width="1" shape-rendering="geometricPrecision"/>
<line x1="238.5" y1="62" x2="238.5" y2="413" stroke="#ffffff" stroke-width="1"/>
<line x1="105" y1="397.5" x2="373" y2="397.5" stroke="#ffffff" stroke-width="1"/>
<line x1="105" y1="404.5" x2="373" y2="404.5" stroke="#ffffff" stroke-width="1"/>
<line x1="89" y1="413.5" x2="111" y2="413.5" stroke="#00ff00" stroke-width="1"/>
<line x1="99.5" y1="413" x2="99.5" y2="421" stroke="#ff0000" stroke-width="1"/>
<line x1="93" y1="425.5" x2="107" y2="425.5" stroke="#00ff00" stroke-width="1"/>
<line x1="95.5" y1="421" x2="95.5" y2="430" stroke="#00ff00" stroke-width="1"/>
<line x1="104.5" y1="421" x2="104.5" y2="430" stroke="#00ff00" stroke-width="1"/>
<polyline points="93.5,426.5 96.5,423.5" fill="none" stroke="#00ff00" stroke-width="1" shape-rendering="geometricPrecision"/>
<polyline points="102.5,426.5 105.5,423.5" fill="none" stroke="#00ff00" stroke-width="1" shape-rendering="geometricPrecision"/>
<text x="95" y="423" font-size="8.38" fill="#ffffff" textLength="10" lengthAdjust="spacingAndGlyphs" font-weight="bold" stroke="#ffffff" stroke-width="0.45">600</text>
<line x1="99.5" y1="428" x2="99.5" y2="440" stroke="#00ff00" stroke-width="1"/>
<polyline points="98,431.5 101,428.5" fill="none" stroke="#00ff00" stroke-width="1" shape-rendering="geometricPrecision"/>
<line x1="205.5" y1="413.5" x2="227.5" y2="413.5" stroke="#00ff00" stroke-width="1"/>
<line x1="216.5" y1="413" x2="216.5" y2="421" stroke="#ff0000" stroke-width="1"/>
<line x1="209.5" y1="425.5" x2="223.5" y2="425.5" stroke="#00ff00" stroke-width="1"/>
<line x1="211.5" y1="421" x2="211.5" y2="430" stroke="#00ff00" stroke-width="1"/>
<line x1="221.5" y1="421" x2="221.5" y2="430" stroke="#00ff00" stroke-width="1"/>
<polyline points="209.5,426.5 212.5,423.5" fill="none" stroke="#00ff00" stroke-width="1" shape-rendering="geometricPrecision"/>
<polyline points="219.5,426.5 222.5,423.5" fill="none" stroke="#00ff00" stroke-width="1" shape-rendering="geometricPrecision"/>
<text x="211.5" y="423" font-size="8.38" fill="#ffffff" textLength="10" lengthAdjust="spacingAndGlyphs" font-weight="bold" stroke="#ffffff" stroke-width="0.45">600</text>
<line x1="216.5" y1="428" x2="216.5" y2="440" stroke="#00ff00" stroke-width="1"/>
<polyline points="214.5,431.5 217.5,428.5" fill="none" stroke="#00ff00" stroke-width="1" shape-rendering="geometricPrecision"/>
<line x1="250" y1="413.5" x2="272" y2="413.5" stroke="#00ff00" stroke-width="1"/>
<line x1="260.5" y1="413" x2="260.5" y2="421" stroke="#ff0000" stroke-width="1"/>
<line x1="254" y1="425.5" x2="268" y2="425.5" stroke="#00ff00" stroke-width="1"/>
<line x1="256.5" y1="421" x2="256.5" y2="430" stroke="#00ff00" stroke-width="1"/>
<line x1="265.5" y1="421" x2="265.5" y2="430" stroke="#00ff00" stroke-width="1"/>
<polyline points="254.5,426.5 257.5,423.5" fill="none" stroke="#00ff00" stroke-width="1" shape-rendering="geometricPrecision"/>
<polyline points="263.5,426.5 266.5,423.5" fill="none" stroke="#00ff00" stroke-width="1" shape-rendering="geometricPrecision"/>
<text x="256" y="423" font-size="8.38" fill="#ffffff" textLength="10" lengthAdjust="spacingAndGlyphs" font-weight="bold" stroke="#ffffff" stroke-width="0.45">600</text>
<line x1="260.5" y1="428" x2="260.5" y2="440" stroke="#00ff00" stroke-width="1"/>
<polyline points="259,431.5 262,428.5" fill="none" stroke="#00ff00" stroke-width="1" shape-rendering="geometricPrecision"/>
<line x1="367" y1="413.5" x2="389" y2="413.5" stroke="#00ff00" stroke-width="1"/>
<line x1="377.5" y1="413" x2="377.5" y2="421" stroke="#ff0000" stroke-width="1"/>
<line x1="371" y1="425.5" x2="385" y2="425.5" stroke="#00ff00" stroke-width="1"/>
<line x1="373.5" y1="421" x2="373.5" y2="430" stroke="#00ff00" stroke-width="1"/>
<line x1="382.5" y1="421" x2="382.5" y2="430" stroke="#00ff00" stroke-width="1"/>
<polyline points="371.5,426.5 374.5,423.5" fill="none" stroke="#00ff00" stroke-width="1" shape-rendering="geometricPrecision"/>
<polyline points="380.5,426.5 383.5,423.5" fill="none" stroke="#00ff00" stroke-width="1" shape-rendering="geometricPrecision"/>
<text x="373" y="423" font-size="8.38" fill="#ffffff" textLength="10" lengthAdjust="spacingAndGlyphs" font-weight="bold" stroke="#ffffff" stroke-width="0.45">600</text>
<line x1="377.5" y1="428" x2="377.5" y2="440" stroke="#00ff00" stroke-width="1"/>
<polyline points="376,431.5 379,428.5" fill="none" stroke="#00ff00" stroke-width="1" shape-rendering="geometricPrecision"/>
<line x1="100" y1="430.5" x2="378" y2="430.5" stroke="#00ff00" stroke-width="1"/>
<text x="152" y="429.5" font-size="8.38" fill="#ffffff" textLength="12.5" lengthAdjust="spacingAndGlyphs" font-weight="bold" stroke="#ffffff" stroke-width="0.45">7800</text>
<text x="232.5" y="429.5" font-size="8.38" fill="#ffffff" textLength="12.5" lengthAdjust="spacingAndGlyphs" font-weight="bold" stroke="#ffffff" stroke-width="0.45">3000</text>
<text x="313" y="429.5" font-size="8.38" fill="#ffffff" textLength="12.5" lengthAdjust="spacingAndGlyphs" font-weight="bold" stroke="#ffffff" stroke-width="0.45">7800</text>
<circle cx="100" cy="446.5" r="6.4" fill="none" stroke="#00ff00" stroke-width="1" shape-rendering="geometricPrecision"/>
<text x="97.8" y="450" font-size="9.78" fill="#ffffff" textLength="4.6" lengthAdjust="spacingAndGlyphs" font-weight="bold">J</text>
<circle cx="216.5" cy="446.5" r="6.4" fill="none" stroke="#00ff00" stroke-width="1" shape-rendering="geometricPrecision"/>
<text x="213.7" y="450" font-size="9.78" fill="#ffffff" textLength="5.6" lengthAdjust="spacingAndGlyphs" font-weight="bold">M</text>
<circle cx="261" cy="446.5" r="6.4" fill="none" stroke="#00ff00" stroke-width="1" shape-rendering="geometricPrecision"/>
<text x="258.8" y="450" font-size="9.78" fill="#ffffff" textLength="4.6" lengthAdjust="spacingAndGlyphs" font-weight="bold">J</text>
<circle cx="378" cy="446.5" r="6.4" fill="none" stroke="#00ff00" stroke-width="1" shape-rendering="geometricPrecision"/>
<text x="375.8" y="450" font-size="9.78" fill="#ffffff" textLength="4.6" lengthAdjust="spacingAndGlyphs" font-weight="bold">G</text>
<text x="205" y="469.3" font-size="11.63" class="c" fill="#ffffff" textLength="51" lengthAdjust="spacingAndGlyphs" font-weight="bold">框架梁柱配筋图</text>
<line x1="204" y1="472" x2="257" y2="472" stroke="#00ff00" stroke-width="2"/>
<line x1="204" y1="474.5" x2="257" y2="474.5" stroke="#00ff00" stroke-width="1"/>
<text x="260" y="468.8" font-size="9.5" fill="#ffffff" textLength="18.5" lengthAdjust="spacingAndGlyphs" stroke="#ffffff" stroke-width="0.45">1:100</text>
<line x1="147" y1="118.5" x2="169.5" y2="118.5" stroke="#0000ff" stroke-width="1"/>
<polyline points="147,118.5 102,136.5" fill="none" stroke="#0000ff" stroke-width="1" shape-rendering="geometricPrecision"/>
<polyline points="147,118.5 105,153.5" fill="none" stroke="#0000ff" stroke-width="1" shape-rendering="geometricPrecision"/>
<polyline points="169.5,118.5 215,136.5" fill="none" stroke="#0000ff" stroke-width="1" shape-rendering="geometricPrecision"/>
<polyline points="169.5,118.5 211,153.5" fill="none" stroke="#0000ff" stroke-width="1" shape-rendering="geometricPrecision"/>
<line x1="147" y1="169.5" x2="169.5" y2="169.5" stroke="#0000ff" stroke-width="1"/>
<polyline points="147,170 103,200.5" fill="none" stroke="#0000ff" stroke-width="1" shape-rendering="geometricPrecision"/>
<polyline points="169.5,170 215,200.5" fill="none" stroke="#0000ff" stroke-width="1" shape-rendering="geometricPrecision"/>
<line x1="147" y1="234.5" x2="169.5" y2="234.5" stroke="#0000ff" stroke-width="1"/>
<polyline points="147,235 101,253" fill="none" stroke="#0000ff" stroke-width="1" shape-rendering="geometricPrecision"/>
<polyline points="147,235 105,270.5" fill="none" stroke="#0000ff" stroke-width="1" shape-rendering="geometricPrecision"/>
<polyline points="169.5,235 215,253" fill="none" stroke="#0000ff" stroke-width="1" shape-rendering="geometricPrecision"/>
<polyline points="169.5,235 211,270.5" fill="none" stroke="#0000ff" stroke-width="1" shape-rendering="geometricPrecision"/>
<line x1="147" y1="286.5" x2="169.5" y2="286.5" stroke="#0000ff" stroke-width="1"/>
<polyline points="147,287 103,317.5" fill="none" stroke="#0000ff" stroke-width="1" shape-rendering="geometricPrecision"/>
<polyline points="169.5,287 214,317.5" fill="none" stroke="#0000ff" stroke-width="1" shape-rendering="geometricPrecision"/>
<line x1="147" y1="365.5" x2="169.5" y2="365.5" stroke="#0000ff" stroke-width="1"/>
<polyline points="147,366 103,396" fill="none" stroke="#0000ff" stroke-width="1" shape-rendering="geometricPrecision"/>
<polyline points="169.5,366 214,396" fill="none" stroke="#0000ff" stroke-width="1" shape-rendering="geometricPrecision"/>
<line x1="308.5" y1="118.5" x2="330.5" y2="118.5" stroke="#0000ff" stroke-width="1"/>
<polyline points="308.5,118.5 263,136.5" fill="none" stroke="#0000ff" stroke-width="1" shape-rendering="geometricPrecision"/>
<polyline points="308.5,118.5 266,153.5" fill="none" stroke="#0000ff" stroke-width="1" shape-rendering="geometricPrecision"/>
<polyline points="330.5,118.5 377,136.5" fill="none" stroke="#0000ff" stroke-width="1" shape-rendering="geometricPrecision"/>
<polyline points="330.5,118.5 373,153.5" fill="none" stroke="#0000ff" stroke-width="1" shape-rendering="geometricPrecision"/>
<line x1="308.5" y1="169.5" x2="330.5" y2="169.5" stroke="#0000ff" stroke-width="1"/>
<polyline points="308.5,170 264,200.5" fill="none" stroke="#0000ff" stroke-width="1" shape-rendering="geometricPrecision"/>
<polyline points="330.5,170 377,200.5" fill="none" stroke="#0000ff" stroke-width="1" shape-rendering="geometricPrecision"/>
<line x1="308.5" y1="234.5" x2="330.5" y2="234.5" stroke="#0000ff" stroke-width="1"/>
<polyline points="308.5,235 262,253" fill="none" stroke="#0000ff" stroke-width="1" shape-rendering="geometricPrecision"/>
<polyline points="308.5,235 266,270.5" fill="none" stroke="#0000ff" stroke-width="1" shape-rendering="geometricPrecision"/>
<polyline points="330.5,235 377,253" fill="none" stroke="#0000ff" stroke-width="1" shape-rendering="geometricPrecision"/>
<polyline points="330.5,235 373,270.5" fill="none" stroke="#0000ff" stroke-width="1" shape-rendering="geometricPrecision"/>
<line x1="308.5" y1="286.5" x2="330.5" y2="286.5" stroke="#0000ff" stroke-width="1"/>
<polyline points="308.5,287 264,317.5" fill="none" stroke="#0000ff" stroke-width="1" shape-rendering="geometricPrecision"/>
<polyline points="330.5,287 376,317.5" fill="none" stroke="#0000ff" stroke-width="1" shape-rendering="geometricPrecision"/>
<line x1="308.5" y1="365.5" x2="330.5" y2="365.5" stroke="#0000ff" stroke-width="1"/>
<polyline points="308.5,366 264,396" fill="none" stroke="#0000ff" stroke-width="1" shape-rendering="geometricPrecision"/>
<polyline points="330.5,366 376,396" fill="none" stroke="#0000ff" stroke-width="1" shape-rendering="geometricPrecision"/>
<text x="89.5" y="139.8" font-size="7.82" fill="#ffffff" textLength="3.4" lengthAdjust="spacingAndGlyphs" stroke="#ffffff" stroke-width="0.45">8</text>
<rect x="88.5" y="140.7" width="5.4" height="1.2" fill="#ff00ff"/>
<text x="107.3" y="139.8" font-size="7.82" fill="#ffffff" textLength="3.4" lengthAdjust="spacingAndGlyphs" stroke="#ffffff" stroke-width="0.45">8</text>
<rect x="106.3" y="140.7" width="5.4" height="1.2" fill="#ff00ff"/>
<text x="205.4" y="139.8" font-size="7.82" fill="#ffffff" textLength="3.4" lengthAdjust="spacingAndGlyphs" stroke="#ffffff" stroke-width="0.45">9</text>
<rect x="204.4" y="140.7" width="5.4" height="1.2" fill="#ff00ff"/>
<text x="223.3" y="139.8" font-size="7.82" fill="#ffffff" textLength="3.4" lengthAdjust="spacingAndGlyphs" stroke="#ffffff" stroke-width="0.45">9</text>
<rect x="222.3" y="140.7" width="5.4" height="1.2" fill="#ff00ff"/>
<text x="251.6" y="139.8" font-size="7.82" fill="#ffffff" textLength="3.4" lengthAdjust="spacingAndGlyphs" stroke="#ffffff" stroke-width="0.45">9</text>
<rect x="250.6" y="140.7" width="5.4" height="1.2" fill="#ff00ff"/>
<text x="268.8" y="139.8" font-size="7.82" fill="#ffffff" textLength="3.4" lengthAdjust="spacingAndGlyphs" stroke="#ffffff" stroke-width="0.45">9</text>
<rect x="267.8" y="140.7" width="5.4" height="1.2" fill="#ff00ff"/>
<text x="368.3" y="139.8" font-size="7.82" fill="#ffffff" textLength="3.4" lengthAdjust="spacingAndGlyphs" stroke="#ffffff" stroke-width="0.45">8</text>
<rect x="367.3" y="140.7" width="5.4" height="1.2" fill="#ff00ff"/>
<text x="385.3" y="139.8" font-size="7.82" fill="#ffffff" textLength="3.4" lengthAdjust="spacingAndGlyphs" stroke="#ffffff" stroke-width="0.45">8</text>
<rect x="384.3" y="140.7" width="5.4" height="1.2" fill="#ff00ff"/>
<text x="89.5" y="160.6" font-size="7.82" fill="#ffffff" textLength="3.4" lengthAdjust="spacingAndGlyphs" stroke="#ffffff" stroke-width="0.45">8</text>
<rect x="88.5" y="161.5" width="5.4" height="1.2" fill="#ff00ff"/>
<text x="107.3" y="160.6" font-size="7.82" fill="#ffffff" textLength="3.4" lengthAdjust="spacingAndGlyphs" stroke="#ffffff" stroke-width="0.45">8</text>
<rect x="106.3" y="161.5" width="5.4" height="1.2" fill="#ff00ff"/>
<text x="205.4" y="160.6" font-size="7.82" fill="#ffffff" textLength="3.4" lengthAdjust="spacingAndGlyphs" stroke="#ffffff" stroke-width="0.45">9</text>
<rect x="204.4" y="161.5" width="5.4" height="1.2" fill="#ff00ff"/>
<text x="223.3" y="160.6" font-size="7.82" fill="#ffffff" textLength="3.4" lengthAdjust="spacingAndGlyphs" stroke="#ffffff" stroke-width="0.45">9</text>
<rect x="222.3" y="161.5" width="5.4" height="1.2" fill="#ff00ff"/>
<text x="251.6" y="160.6" font-size="7.82" fill="#ffffff" textLength="3.4" lengthAdjust="spacingAndGlyphs" stroke="#ffffff" stroke-width="0.45">9</text>
<rect x="250.6" y="161.5" width="5.4" height="1.2" fill="#ff00ff"/>
<text x="268.8" y="160.6" font-size="7.82" fill="#ffffff" textLength="3.4" lengthAdjust="spacingAndGlyphs" stroke="#ffffff" stroke-width="0.45">9</text>
<rect x="267.8" y="161.5" width="5.4" height="1.2" fill="#ff00ff"/>
<text x="368.3" y="160.6" font-size="7.82" fill="#ffffff" textLength="3.4" lengthAdjust="spacingAndGlyphs" stroke="#ffffff" stroke-width="0.45">8</text>
<rect x="367.3" y="161.5" width="5.4" height="1.2" fill="#ff00ff"/>
<text x="385.3" y="160.6" font-size="7.82" fill="#ffffff" textLength="3.4" lengthAdjust="spacingAndGlyphs" stroke="#ffffff" stroke-width="0.45">8</text>
<rect x="384.3" y="161.5" width="5.4" height="1.2" fill="#ff00ff"/>
<text x="89.5" y="256.1" font-size="7.82" fill="#ffffff" textLength="3.4" lengthAdjust="spacingAndGlyphs" stroke="#ffffff" stroke-width="0.45">7</text>
<rect x="88.5" y="257" width="5.4" height="1.2" fill="#ff00ff"/>
<text x="107.3" y="256.1" font-size="7.82" fill="#ffffff" textLength="3.4" lengthAdjust="spacingAndGlyphs" stroke="#ffffff" stroke-width="0.45">7</text>
<rect x="106.3" y="257" width="5.4" height="1.2" fill="#ff00ff"/>
<text x="205.9" y="256.1" font-size="7.82" fill="#ffffff" textLength="6.4" lengthAdjust="spacingAndGlyphs" stroke="#ffffff" stroke-width="0.45">18</text>
<rect x="204.9" y="257" width="8.4" height="1.2" fill="#ff00ff"/>
<text x="223.3" y="256.1" font-size="7.82" fill="#ffffff" textLength="6.4" lengthAdjust="spacingAndGlyphs" stroke="#ffffff" stroke-width="0.45">19</text>
<rect x="222.3" y="257" width="8.4" height="1.2" fill="#ff00ff"/>
<text x="248.6" y="256.1" font-size="7.82" fill="#ffffff" textLength="6.4" lengthAdjust="spacingAndGlyphs" stroke="#ffffff" stroke-width="0.45">10</text>
<rect x="247.6" y="257" width="8.4" height="1.2" fill="#ff00ff"/>
<text x="268.8" y="256.1" font-size="7.82" fill="#ffffff" textLength="6.4" lengthAdjust="spacingAndGlyphs" stroke="#ffffff" stroke-width="0.45">10</text>
<rect x="267.8" y="257" width="8.4" height="1.2" fill="#ff00ff"/>
<text x="368.3" y="256.1" font-size="7.82" fill="#ffffff" textLength="3.4" lengthAdjust="spacingAndGlyphs" stroke="#ffffff" stroke-width="0.45">7</text>
<rect x="367.3" y="257" width="5.4" height="1.2" fill="#ff00ff"/>
<text x="385.3" y="256.1" font-size="7.82" fill="#ffffff" textLength="3.4" lengthAdjust="spacingAndGlyphs" stroke="#ffffff" stroke-width="0.45">7</text>
<rect x="384.3" y="257" width="5.4" height="1.2" fill="#ff00ff"/>
<text x="89.5" y="276.6" font-size="7.82" fill="#ffffff" textLength="3.4" lengthAdjust="spacingAndGlyphs" stroke="#ffffff" stroke-width="0.45">7</text>
<rect x="88.5" y="277.5" width="5.4" height="1.2" fill="#ff00ff"/>
<text x="107.3" y="276.6" font-size="7.82" fill="#ffffff" textLength="3.4" lengthAdjust="spacingAndGlyphs" stroke="#ffffff" stroke-width="0.45">7</text>
<rect x="106.3" y="277.5" width="5.4" height="1.2" fill="#ff00ff"/>
<text x="205.9" y="276.6" font-size="7.82" fill="#ffffff" textLength="6.4" lengthAdjust="spacingAndGlyphs" stroke="#ffffff" stroke-width="0.45">13</text>
<rect x="204.9" y="277.5" width="8.4" height="1.2" fill="#ff00ff"/>
<text x="223.3" y="276.6" font-size="7.82" fill="#ffffff" textLength="6.4" lengthAdjust="spacingAndGlyphs" stroke="#ffffff" stroke-width="0.45">16</text>
<rect x="222.3" y="277.5" width="8.4" height="1.2" fill="#ff00ff"/>
<text x="248.6" y="276.6" font-size="7.82" fill="#ffffff" textLength="6.4" lengthAdjust="spacingAndGlyphs" stroke="#ffffff" stroke-width="0.45">10</text>
<rect x="247.6" y="277.5" width="8.4" height="1.2" fill="#ff00ff"/>
<text x="268.8" y="276.6" font-size="7.82" fill="#ffffff" textLength="6.4" lengthAdjust="spacingAndGlyphs" stroke="#ffffff" stroke-width="0.45">10</text>
<rect x="267.8" y="277.5" width="8.4" height="1.2" fill="#ff00ff"/>
<text x="368.3" y="276.6" font-size="7.82" fill="#ffffff" textLength="3.4" lengthAdjust="spacingAndGlyphs" stroke="#ffffff" stroke-width="0.45">7</text>
<rect x="367.3" y="277.5" width="5.4" height="1.2" fill="#ff00ff"/>
<text x="385.3" y="276.6" font-size="7.82" fill="#ffffff" textLength="3.4" lengthAdjust="spacingAndGlyphs" stroke="#ffffff" stroke-width="0.45">7</text>
<rect x="384.3" y="277.5" width="5.4" height="1.2" fill="#ff00ff"/>
<text x="89.5" y="392.2" font-size="7.82" fill="#ffffff" textLength="3.4" lengthAdjust="spacingAndGlyphs" stroke="#ffffff" stroke-width="0.45">1</text>
<rect x="88.5" y="393.1" width="5.4" height="1.2" fill="#ff00ff"/>
<text x="107.3" y="392.2" font-size="7.82" fill="#ffffff" textLength="3.4" lengthAdjust="spacingAndGlyphs" stroke="#ffffff" stroke-width="0.45">1</text>
<rect x="106.3" y="393.1" width="5.4" height="1.2" fill="#ff00ff"/>
<text x="205.4" y="392.2" font-size="7.82" fill="#ffffff" textLength="3.4" lengthAdjust="spacingAndGlyphs" stroke="#ffffff" stroke-width="0.45">2</text>
<rect x="204.4" y="393.1" width="5.4" height="1.2" fill="#ff00ff"/>
<text x="223.3" y="392.2" font-size="7.82" fill="#ffffff" textLength="3.4" lengthAdjust="spacingAndGlyphs" stroke="#ffffff" stroke-width="0.45">2</text>
<rect x="222.3" y="393.1" width="5.4" height="1.2" fill="#ff00ff"/>
<text x="251.6" y="392.2" font-size="7.82" fill="#ffffff" textLength="3.4" lengthAdjust="spacingAndGlyphs" stroke="#ffffff" stroke-width="0.45">2</text>
<rect x="250.6" y="393.1" width="5.4" height="1.2" fill="#ff00ff"/>
<text x="268.8" y="392.2" font-size="7.82" fill="#ffffff" textLength="3.4" lengthAdjust="spacingAndGlyphs" stroke="#ffffff" stroke-width="0.45">2</text>
<rect x="267.8" y="393.1" width="5.4" height="1.2" fill="#ff00ff"/>
<text x="368.3" y="392.2" font-size="7.82" fill="#ffffff" textLength="3.4" lengthAdjust="spacingAndGlyphs" stroke="#ffffff" stroke-width="0.45">1</text>
<rect x="367.3" y="393.1" width="5.4" height="1.2" fill="#ff00ff"/>
<text x="385.3" y="392.2" font-size="7.82" fill="#ffffff" textLength="3.4" lengthAdjust="spacingAndGlyphs" stroke="#ffffff" stroke-width="0.45">1</text>
<rect x="384.3" y="393.1" width="5.4" height="1.2" fill="#ff00ff"/>
<text x="112.5" y="83.8" font-size="7.82" fill="#ffffff" textLength="6.4" lengthAdjust="spacingAndGlyphs" stroke="#ffffff" stroke-width="0.45">14</text>
<rect x="124" y="79.8" width="2.4" height="2.4" fill="#ff00ff"/>
<text x="112.5" y="106.8" font-size="7.82" fill="#ffffff" textLength="6.4" lengthAdjust="spacingAndGlyphs" stroke="#ffffff" stroke-width="0.45">14</text>
<line x1="125.5" y1="81.2" x2="125.5" y2="85" stroke="#ff0000" stroke-width="1"/>
<text x="162" y="83.8" font-size="7.82" fill="#ffffff" textLength="6.4" lengthAdjust="spacingAndGlyphs" stroke="#ffffff" stroke-width="0.45">15</text>
<rect x="159.4" y="77.7" width="1.2" height="6.5" fill="#ff00ff"/>
<rect x="169" y="79.8" width="2.4" height="2.4" fill="#ff00ff"/>
<text x="162" y="106.8" font-size="7.82" fill="#ffffff" textLength="6.4" lengthAdjust="spacingAndGlyphs" stroke="#ffffff" stroke-width="0.45">15</text>
<rect x="159.4" y="100.7" width="1.2" height="6.5" fill="#ff00ff"/>
<line x1="170.5" y1="81.2" x2="170.5" y2="85" stroke="#ff0000" stroke-width="1"/>
<text x="198" y="83.8" font-size="7.82" fill="#ffffff" textLength="6.4" lengthAdjust="spacingAndGlyphs" stroke="#ffffff" stroke-width="0.45">18</text>
<rect x="205.5" y="79.8" width="2.4" height="2.4" fill="#ff00ff"/>
<text x="198" y="106.8" font-size="7.82" fill="#ffffff" textLength="6.4" lengthAdjust="spacingAndGlyphs" stroke="#ffffff" stroke-width="0.45">16</text>
<line x1="206.5" y1="81.2" x2="206.5" y2="85" stroke="#ff0000" stroke-width="1"/>
<text x="272.5" y="83.8" font-size="7.82" fill="#ffffff" textLength="6.4" lengthAdjust="spacingAndGlyphs" stroke="#ffffff" stroke-width="0.45">18</text>
<rect x="269.5" y="79.8" width="2.4" height="2.4" fill="#ff00ff"/>
<text x="274" y="106.8" font-size="7.82" fill="#ffffff" textLength="6.4" lengthAdjust="spacingAndGlyphs" stroke="#ffffff" stroke-width="0.45">16</text>
<rect x="279.7" y="77.7" width="1.2" height="6.5" fill="#ff00ff"/>
<rect x="281.2" y="100.7" width="1.2" height="6.5" fill="#ff00ff"/>
<line x1="270.5" y1="81.2" x2="270.5" y2="85" stroke="#ff00ff" stroke-width="1"/>
<text x="311" y="83.8" font-size="7.82" fill="#ffffff" textLength="6.4" lengthAdjust="spacingAndGlyphs" stroke="#ffffff" stroke-width="0.45">15</text>
<rect x="307" y="79.8" width="2.4" height="2.4" fill="#ff00ff"/>
<text x="312.5" y="106.8" font-size="7.82" fill="#ffffff" textLength="6.4" lengthAdjust="spacingAndGlyphs" stroke="#ffffff" stroke-width="0.45">15</text>
<line x1="308.5" y1="81.2" x2="308.5" y2="85" stroke="#ff00ff" stroke-width="1"/>
<text x="361" y="83.8" font-size="7.82" fill="#ffffff" textLength="6.4" lengthAdjust="spacingAndGlyphs" stroke="#ffffff" stroke-width="0.45">14</text>
<rect x="353.5" y="79.8" width="2.4" height="2.4" fill="#ff00ff"/>
<text x="362.5" y="106.8" font-size="7.82" fill="#ffffff" textLength="6.4" lengthAdjust="spacingAndGlyphs" stroke="#ffffff" stroke-width="0.45">14</text>
<line x1="354.5" y1="81.2" x2="354.5" y2="85" stroke="#ff00ff" stroke-width="1"/>
<rect x="270" y="97.5" width="2.4" height="2.4" fill="#ff00ff"/>
<line x1="271.5" y1="95" x2="271.5" y2="98" stroke="#ff00ff" stroke-width="1"/>
<rect x="307.5" y="97.5" width="2.4" height="2.4" fill="#ff00ff"/>
<line x1="308.5" y1="95" x2="308.5" y2="98" stroke="#ff00ff" stroke-width="1"/>
<rect x="354" y="97.5" width="2.4" height="2.4" fill="#ff00ff"/>
<line x1="355.5" y1="95" x2="355.5" y2="98" stroke="#ff00ff" stroke-width="1"/>
<rect x="123.5" y="97.5" width="2" height="2" fill="#ff00ff"/>
<line x1="124.5" y1="95" x2="124.5" y2="100" stroke="#ff0000" stroke-width="1"/>
<rect x="169.5" y="97.5" width="2" height="2" fill="#ff00ff"/>
<text x="227.5" y="83.8" font-size="7.82" fill="#ffffff" textLength="6.4" lengthAdjust="spacingAndGlyphs" stroke="#ffffff" stroke-width="0.45">17</text>
<text x="227.5" y="98.8" font-size="7.82" fill="#ffffff" textLength="6.4" lengthAdjust="spacingAndGlyphs" stroke="#ffffff" stroke-width="0.45">17</text>
<rect x="225.7" y="77.7" width="1.2" height="6.5" fill="#ff00ff"/>
<rect x="225.7" y="92.7" width="1.2" height="6.5" fill="#ff00ff"/>
<text x="252.5" y="83.8" font-size="7.82" fill="#ffffff" textLength="6.4" lengthAdjust="spacingAndGlyphs" stroke="#ffffff" stroke-width="0.45">17</text>
<text x="252.5" y="98.8" font-size="7.82" fill="#ffffff" textLength="6.4" lengthAdjust="spacingAndGlyphs" stroke="#ffffff" stroke-width="0.45">17</text>
<rect x="250.7" y="77.7" width="1.2" height="6.5" fill="#ff00ff"/>
<rect x="250.7" y="92.7" width="1.2" height="6.5" fill="#ff00ff"/>
<rect x="222.5" y="80.5" width="2" height="2" fill="#ff00ff"/>
<text x="113.5" y="200.2" font-size="7.82" fill="#ffffff" textLength="6.4" lengthAdjust="spacingAndGlyphs" stroke="#ffffff" stroke-width="0.45">10</text>
<rect x="110.9" y="194.1" width="1.2" height="6.5" fill="#ff00ff"/>
<rect x="123" y="196.4" width="2.4" height="2.4" fill="#ff00ff"/>
<text x="113.5" y="223.2" font-size="7.82" fill="#ffffff" textLength="6.4" lengthAdjust="spacingAndGlyphs" stroke="#ffffff" stroke-width="0.45">10</text>
<polyline points="124.2,198.6 125.4,202" fill="none" stroke="#ff00ff" stroke-width="1" shape-rendering="geometricPrecision"/>
<text x="163.5" y="200.2" font-size="7.82" fill="#ffffff" textLength="6.4" lengthAdjust="spacingAndGlyphs" stroke="#ffffff" stroke-width="0.45">11</text>
<rect x="160.9" y="194.1" width="1.2" height="6.5" fill="#ff00ff"/>
<rect x="172" y="196.4" width="2.4" height="2.4" fill="#ff00ff"/>
<text x="163.5" y="223.2" font-size="7.82" fill="#ffffff" textLength="6.4" lengthAdjust="spacingAndGlyphs" stroke="#ffffff" stroke-width="0.45">11</text>
<rect x="160.9" y="217.1" width="1.2" height="6.5" fill="#ff00ff"/>
<polyline points="173.2,198.6 174.4,202" fill="none" stroke="#ff00ff" stroke-width="1" shape-rendering="geometricPrecision"/>
<text x="202.3" y="200.2" font-size="7.82" fill="#ffffff" textLength="6.4" lengthAdjust="spacingAndGlyphs" stroke="#ffffff" stroke-width="0.45">12</text>
<rect x="196" y="196.4" width="2.4" height="2.4" fill="#ff00ff"/>
<text x="202.3" y="223.2" font-size="7.82" fill="#ffffff" textLength="6.4" lengthAdjust="spacingAndGlyphs" stroke="#ffffff" stroke-width="0.45">12</text>
<polyline points="197.2,198.6 198.4,202" fill="none" stroke="#ff00ff" stroke-width="1" shape-rendering="geometricPrecision"/>
<text x="273.6" y="200.2" font-size="7.82" fill="#ffffff" textLength="6.4" lengthAdjust="spacingAndGlyphs" stroke="#ffffff" stroke-width="0.45">12</text>
<rect x="282" y="196.4" width="2.4" height="2.4" fill="#ff00ff"/>
<text x="273.6" y="223.2" font-size="7.82" fill="#ffffff" textLength="6.4" lengthAdjust="spacingAndGlyphs" stroke="#ffffff" stroke-width="0.45">12</text>
<polyline points="283.2,198.6 284.4,202" fill="none" stroke="#ff00ff" stroke-width="1" shape-rendering="geometricPrecision"/>
<text x="319.6" y="200.2" font-size="7.82" fill="#ffffff" textLength="6.4" lengthAdjust="spacingAndGlyphs" stroke="#ffffff" stroke-width="0.45">11</text>
<rect x="317" y="194.1" width="1.2" height="6.5" fill="#ff00ff"/>
<rect x="327.5" y="196.4" width="2.4" height="2.4" fill="#ff00ff"/>
<text x="319.6" y="223.2" font-size="7.82" fill="#ffffff" textLength="6.4" lengthAdjust="spacingAndGlyphs" stroke="#ffffff" stroke-width="0.45">11</text>
<rect x="317" y="217.1" width="1.2" height="6.5" fill="#ff00ff"/>
<polyline points="328.7,198.6 329.9,202" fill="none" stroke="#ff00ff" stroke-width="1" shape-rendering="geometricPrecision"/>
<text x="362" y="200.2" font-size="7.82" fill="#ffffff" textLength="6.4" lengthAdjust="spacingAndGlyphs" stroke="#ffffff" stroke-width="0.45">10</text>
<rect x="368.5" y="196.4" width="2.4" height="2.4" fill="#ff00ff"/>
<text x="362" y="223.2" font-size="7.82" fill="#ffffff" textLength="6.4" lengthAdjust="spacingAndGlyphs" stroke="#ffffff" stroke-width="0.45">10</text>
<polyline points="369.7,198.6 370.9,202" fill="none" stroke="#ff00ff" stroke-width="1" shape-rendering="geometricPrecision"/>
<rect x="282" y="214" width="2.4" height="2.4" fill="#ff00ff"/>
<rect x="327.5" y="214" width="2.4" height="2.4" fill="#ff00ff"/>
<rect x="368.5" y="214" width="2.4" height="2.4" fill="#ff00ff"/>
<text x="223.5" y="200.2" font-size="7.82" fill="#ffffff" textLength="6.4" lengthAdjust="spacingAndGlyphs" stroke="#ffffff" stroke-width="0.45">13</text>
<text x="223.5" y="215.4" font-size="7.82" fill="#ffffff" textLength="6.4" lengthAdjust="spacingAndGlyphs" stroke="#ffffff" stroke-width="0.45">13</text>
<text x="251.5" y="200.2" font-size="7.82" fill="#ffffff" textLength="6.4" lengthAdjust="spacingAndGlyphs" stroke="#ffffff" stroke-width="0.45">13</text>
<text x="251.5" y="215.4" font-size="7.82" fill="#ffffff" textLength="6.4" lengthAdjust="spacingAndGlyphs" stroke="#ffffff" stroke-width="0.45">13</text>
<rect x="230.5" y="196.6" width="2" height="2" fill="#ff00ff"/>
<rect x="231" y="211.5" width="2" height="2" fill="#ff00ff"/>
<text x="112.6" y="316.4" font-size="7.82" fill="#ffffff" textLength="3.4" lengthAdjust="spacingAndGlyphs" stroke="#ffffff" stroke-width="0.45">3</text>
<rect x="110" y="310.3" width="1.2" height="6.5" fill="#ff00ff"/>
<rect x="123.5" y="312.6" width="2.4" height="2.4" fill="#ff00ff"/>
<text x="162.5" y="316.4" font-size="7.82" fill="#ffffff" textLength="3.4" lengthAdjust="spacingAndGlyphs" stroke="#ffffff" stroke-width="0.45">4</text>
<rect x="159.9" y="310.3" width="1.2" height="6.5" fill="#ff00ff"/>
<rect x="166.6" y="312.6" width="2.4" height="2.4" fill="#ff00ff"/>
<text x="162.5" y="339.9" font-size="7.82" fill="#ffffff" textLength="3.4" lengthAdjust="spacingAndGlyphs" stroke="#ffffff" stroke-width="0.45">4</text>
<rect x="159.9" y="333.8" width="1.2" height="6.5" fill="#ff00ff"/>
<text x="202" y="316.4" font-size="7.82" fill="#ffffff" textLength="3.4" lengthAdjust="spacingAndGlyphs" stroke="#ffffff" stroke-width="0.45">5</text>
<rect x="206.2" y="312.6" width="2.4" height="2.4" fill="#ff00ff"/>
<text x="272.6" y="316.4" font-size="7.82" fill="#ffffff" textLength="3.4" lengthAdjust="spacingAndGlyphs" stroke="#ffffff" stroke-width="0.45">5</text>
<rect x="270" y="312.6" width="2.4" height="2.4" fill="#ff00ff"/>
<text x="273.1" y="339.9" font-size="7.82" fill="#ffffff" textLength="3.4" lengthAdjust="spacingAndGlyphs" stroke="#ffffff" stroke-width="0.45">5</text>
<text x="313.3" y="316.4" font-size="7.82" fill="#ffffff" textLength="3.4" lengthAdjust="spacingAndGlyphs" stroke="#ffffff" stroke-width="0.45">4</text>
<rect x="310" y="312.6" width="2.4" height="2.4" fill="#ff00ff"/>
<text x="313.8" y="339.9" font-size="7.82" fill="#ffffff" textLength="3.4" lengthAdjust="spacingAndGlyphs" stroke="#ffffff" stroke-width="0.45">4</text>
<text x="362" y="316.4" font-size="7.82" fill="#ffffff" textLength="3.4" lengthAdjust="spacingAndGlyphs" stroke="#ffffff" stroke-width="0.45">3</text>
<rect x="353" y="312.6" width="2.4" height="2.4" fill="#ff00ff"/>
<text x="362.5" y="339.9" font-size="7.82" fill="#ffffff" textLength="3.4" lengthAdjust="spacingAndGlyphs" stroke="#ffffff" stroke-width="0.45">3</text>
<rect x="270.5" y="330.5" width="2.4" height="2.4" fill="#ff00ff"/>
<rect x="310.5" y="330.5" width="2.4" height="2.4" fill="#ff00ff"/>
<rect x="353.5" y="330.5" width="2.4" height="2.4" fill="#ff00ff"/>
<rect x="270" y="312" width="2.4" height="2.4" fill="#ff00ff"/>
<line x1="271.5" y1="314" x2="271.5" y2="318" stroke="#ff00ff" stroke-width="1"/>
<line x1="271.5" y1="329" x2="271.5" y2="331" stroke="#ff00ff" stroke-width="1"/>
<rect x="310" y="312" width="2.4" height="2.4" fill="#ff00ff"/>
<line x1="311.5" y1="314" x2="311.5" y2="318" stroke="#ff00ff" stroke-width="1"/>
<line x1="311.5" y1="329" x2="311.5" y2="331" stroke="#ff00ff" stroke-width="1"/>
<rect x="353" y="312" width="2.4" height="2.4" fill="#ff00ff"/>
<line x1="354.5" y1="314" x2="354.5" y2="318" stroke="#ff00ff" stroke-width="1"/>
<line x1="354.5" y1="329" x2="354.5" y2="331" stroke="#ff00ff" stroke-width="1"/>
<text x="202" y="339.1" font-size="7.82" fill="#ffffff" textLength="3.4" lengthAdjust="spacingAndGlyphs" stroke="#ffffff" stroke-width="0.45">6</text>
<rect x="206" y="335" width="2" height="2" fill="#ff00ff"/>
<text x="223.8" y="316.4" font-size="7.82" fill="#ffffff" textLength="3.4" lengthAdjust="spacingAndGlyphs" stroke="#ffffff" stroke-width="0.45">6</text>
<text x="223.8" y="331.4" font-size="7.82" fill="#ffffff" textLength="3.4" lengthAdjust="spacingAndGlyphs" stroke="#ffffff" stroke-width="0.45">6</text>
<text x="251.6" y="316.4" font-size="7.82" fill="#ffffff" textLength="3.4" lengthAdjust="spacingAndGlyphs" stroke="#ffffff" stroke-width="0.45">6</text>
<text x="251.6" y="331.4" font-size="7.82" fill="#ffffff" textLength="3.4" lengthAdjust="spacingAndGlyphs" stroke="#ffffff" stroke-width="0.45">6</text>
<rect x="228.3" y="312.6" width="2" height="2" fill="#ff00ff"/>
<rect x="228" y="327.6" width="2" height="2" fill="#ff00ff"/>
<line x1="91" y1="123.5" x2="95" y2="123.5" stroke="#ff00ff" stroke-width="1"/>
<rect x="87.4" y="121.5" width="3.2" height="3.6" fill="#ffffff"/>
<rect x="88.4" y="122.5" width="1" height="1" fill="#ff00ff"/>
<line x1="105" y1="123.5" x2="109" y2="123.5" stroke="#ff00ff" stroke-width="1"/>
<rect x="109" y="121.5" width="3.2" height="3.6" fill="#ffffff"/>
<rect x="110" y="122.5" width="1" height="1" fill="#ff00ff"/>
<polyline points="99,113.6 108,110.4" fill="none" stroke="#ff00ff" stroke-width="1.4" shape-rendering="geometricPrecision"/>
<rect x="107.5" y="108.4" width="3.4" height="3.8" fill="#ffffff"/>
<rect x="108.6" y="109.6" width="1" height="1" fill="#ff00ff"/>
<line x1="207" y1="123.5" x2="211" y2="123.5" stroke="#ff00ff" stroke-width="1"/>
<rect x="203.4" y="121.5" width="3.2" height="3.6" fill="#ffffff"/>
<rect x="204.4" y="122.5" width="1" height="1" fill="#ff00ff"/>
<line x1="222" y1="123.5" x2="226" y2="123.5" stroke="#ff00ff" stroke-width="1"/>
<rect x="226" y="121.5" width="3.2" height="3.6" fill="#ffffff"/>
<rect x="227" y="122.5" width="1" height="1" fill="#ff00ff"/>
<polyline points="216,113.6 225,110.4" fill="none" stroke="#ff00ff" stroke-width="1.4" shape-rendering="geometricPrecision"/>
<rect x="224.5" y="108.4" width="3.4" height="3.8" fill="#ffffff"/>
<rect x="225.6" y="109.6" width="1" height="1" fill="#ff00ff"/>
<line x1="252" y1="123.5" x2="256" y2="123.5" stroke="#ff00ff" stroke-width="1"/>
<rect x="248.4" y="121.5" width="3.2" height="3.6" fill="#ffffff"/>
<rect x="249.4" y="122.5" width="1" height="1" fill="#ff00ff"/>
<line x1="266" y1="123.5" x2="270" y2="123.5" stroke="#ff00ff" stroke-width="1"/>
<rect x="270" y="121.5" width="3.2" height="3.6" fill="#ffffff"/>
<rect x="271" y="122.5" width="1" height="1" fill="#ff00ff"/>
<polyline points="262,113.6 252,110.4" fill="none" stroke="#ff00ff" stroke-width="1.4" shape-rendering="geometricPrecision"/>
<rect x="248.6" y="108.4" width="3.4" height="3.8" fill="#ffffff"/>
<rect x="249.8" y="109.6" width="1" height="1" fill="#ff00ff"/>
<line x1="369" y1="123.5" x2="373" y2="123.5" stroke="#ff00ff" stroke-width="1"/>
<rect x="365.4" y="121.5" width="3.2" height="3.6" fill="#ffffff"/>
<rect x="366.4" y="122.5" width="1" height="1" fill="#ff00ff"/>
<line x1="383" y1="123.5" x2="387" y2="123.5" stroke="#ff00ff" stroke-width="1"/>
<rect x="387" y="121.5" width="3.2" height="3.6" fill="#ffffff"/>
<rect x="388" y="122.5" width="1" height="1" fill="#ff00ff"/>
<polyline points="379,113.6 369,110.4" fill="none" stroke="#ff00ff" stroke-width="1.4" shape-rendering="geometricPrecision"/>
<rect x="365.6" y="108.4" width="3.4" height="3.8" fill="#ffffff"/>
<rect x="366.8" y="109.6" width="1" height="1" fill="#ff00ff"/>
<line x1="91" y1="185.5" x2="95" y2="185.5" stroke="#ff00ff" stroke-width="1"/>
<rect x="87.4" y="183.5" width="3.2" height="3.6" fill="#ffffff"/>
<rect x="88.4" y="184.5" width="1" height="1" fill="#ff00ff"/>
<line x1="105" y1="185.5" x2="109" y2="185.5" stroke="#ff00ff" stroke-width="1"/>
<rect x="109" y="183.5" width="3.2" height="3.6" fill="#ffffff"/>
<rect x="110" y="184.5" width="1" height="1" fill="#ff00ff"/>
<polyline points="99,175.1 108,171.9" fill="none" stroke="#ff00ff" stroke-width="1.4" shape-rendering="geometricPrecision"/>
<rect x="107.5" y="169.9" width="3.4" height="3.8" fill="#ffffff"/>
<rect x="108.6" y="171.1" width="1" height="1" fill="#ff00ff"/>
<line x1="207" y1="185.5" x2="211" y2="185.5" stroke="#ff00ff" stroke-width="1"/>
<rect x="203.4" y="183.5" width="3.2" height="3.6" fill="#ffffff"/>
<rect x="204.4" y="184.5" width="1" height="1" fill="#ff00ff"/>
<line x1="222" y1="185.5" x2="226" y2="185.5" stroke="#ff00ff" stroke-width="1"/>
<rect x="226" y="183.5" width="3.2" height="3.6" fill="#ffffff"/>
<rect x="227" y="184.5" width="1" height="1" fill="#ff00ff"/>
<polyline points="216,175.1 225,171.9" fill="none" stroke="#ff00ff" stroke-width="1.4" shape-rendering="geometricPrecision"/>
<rect x="224.5" y="169.9" width="3.4" height="3.8" fill="#ffffff"/>
<rect x="225.6" y="171.1" width="1" height="1" fill="#ff00ff"/>
<line x1="252" y1="185.5" x2="256" y2="185.5" stroke="#ff00ff" stroke-width="1"/>
<rect x="248.4" y="183.5" width="3.2" height="3.6" fill="#ffffff"/>
<rect x="249.4" y="184.5" width="1" height="1" fill="#ff00ff"/>
<line x1="266" y1="185.5" x2="270" y2="185.5" stroke="#ff00ff" stroke-width="1"/>
<rect x="270" y="183.5" width="3.2" height="3.6" fill="#ffffff"/>
<rect x="271" y="184.5" width="1" height="1" fill="#ff00ff"/>
<polyline points="262,175.1 252,171.9" fill="none" stroke="#ff00ff" stroke-width="1.4" shape-rendering="geometricPrecision"/>
<rect x="248.6" y="169.9" width="3.4" height="3.8" fill="#ffffff"/>
<rect x="249.8" y="171.1" width="1" height="1" fill="#ff00ff"/>
<line x1="369" y1="185.5" x2="373" y2="185.5" stroke="#ff00ff" stroke-width="1"/>
<rect x="365.4" y="183.5" width="3.2" height="3.6" fill="#ffffff"/>
<rect x="366.4" y="184.5" width="1" height="1" fill="#ff00ff"/>
<line x1="383" y1="185.5" x2="387" y2="185.5" stroke="#ff00ff" stroke-width="1"/>
<rect x="387" y="183.5" width="3.2" height="3.6" fill="#ffffff"/>
<rect x="388" y="184.5" width="1" height="1" fill="#ff00ff"/>
<polyline points="379,175.1 369,171.9" fill="none" stroke="#ff00ff" stroke-width="1.4" shape-rendering="geometricPrecision"/>
<rect x="365.6" y="169.9" width="3.4" height="3.8" fill="#ffffff"/>
<rect x="366.8" y="171.1" width="1" height="1" fill="#ff00ff"/>
<line x1="91" y1="241.5" x2="95" y2="241.5" stroke="#ff00ff" stroke-width="1"/>
<rect x="87.4" y="239.5" width="3.2" height="3.6" fill="#ffffff"/>
<rect x="88.4" y="240.5" width="1" height="1" fill="#ff00ff"/>
<line x1="105" y1="241.5" x2="109" y2="241.5" stroke="#ff00ff" stroke-width="1"/>
<rect x="109" y="239.5" width="3.2" height="3.6" fill="#ffffff"/>
<rect x="110" y="240.5" width="1" height="1" fill="#ff00ff"/>
<polyline points="99,231.1 108,227.9" fill="none" stroke="#ff00ff" stroke-width="1.4" shape-rendering="geometricPrecision"/>
<rect x="107.5" y="225.9" width="3.4" height="3.8" fill="#ffffff"/>
<rect x="108.6" y="227.1" width="1" height="1" fill="#ff00ff"/>
<line x1="207" y1="241.5" x2="211" y2="241.5" stroke="#ff00ff" stroke-width="1"/>
<rect x="203.4" y="239.5" width="3.2" height="3.6" fill="#ffffff"/>
<rect x="204.4" y="240.5" width="1" height="1" fill="#ff00ff"/>
<line x1="222" y1="241.5" x2="226" y2="241.5" stroke="#ff00ff" stroke-width="1"/>
<rect x="226" y="239.5" width="3.2" height="3.6" fill="#ffffff"/>
<rect x="227" y="240.5" width="1" height="1" fill="#ff00ff"/>
<polyline points="216,231.1 225,227.9" fill="none" stroke="#ff00ff" stroke-width="1.4" shape-rendering="geometricPrecision"/>
<rect x="224.5" y="225.9" width="3.4" height="3.8" fill="#ffffff"/>
<rect x="225.6" y="227.1" width="1" height="1" fill="#ff00ff"/>
<line x1="252" y1="241.5" x2="256" y2="241.5" stroke="#ff00ff" stroke-width="1"/>
<rect x="248.4" y="239.5" width="3.2" height="3.6" fill="#ffffff"/>
<rect x="249.4" y="240.5" width="1" height="1" fill="#ff00ff"/>
<line x1="266" y1="241.5" x2="270" y2="241.5" stroke="#ff00ff" stroke-width="1"/>
<rect x="270" y="239.5" width="3.2" height="3.6" fill="#ffffff"/>
<rect x="271" y="240.5" width="1" height="1" fill="#ff00ff"/>
<polyline points="262,231.1 252,227.9" fill="none" stroke="#ff00ff" stroke-width="1.4" shape-rendering="geometricPrecision"/>
<rect x="248.6" y="225.9" width="3.4" height="3.8" fill="#ffffff"/>
<rect x="249.8" y="227.1" width="1" height="1" fill="#ff00ff"/>
<line x1="369" y1="241.5" x2="373" y2="241.5" stroke="#ff00ff" stroke-width="1"/>
<rect x="365.4" y="239.5" width="3.2" height="3.6" fill="#ffffff"/>
<rect x="366.4" y="240.5" width="1" height="1" fill="#ff00ff"/>
<line x1="383" y1="241.5" x2="387" y2="241.5" stroke="#ff00ff" stroke-width="1"/>
<rect x="387" y="239.5" width="3.2" height="3.6" fill="#ffffff"/>
<rect x="388" y="240.5" width="1" height="1" fill="#ff00ff"/>
<polyline points="379,231.1 369,227.9" fill="none" stroke="#ff00ff" stroke-width="1.4" shape-rendering="geometricPrecision"/>
<rect x="365.6" y="225.9" width="3.4" height="3.8" fill="#ffffff"/>
<rect x="366.8" y="227.1" width="1" height="1" fill="#ff00ff"/>
<line x1="91" y1="297.5" x2="95" y2="297.5" stroke="#ff00ff" stroke-width="1"/>
<rect x="87.4" y="295.5" width="3.2" height="3.6" fill="#ffffff"/>
<rect x="88.4" y="296.5" width="1" height="1" fill="#ff00ff"/>
<line x1="105" y1="297.5" x2="109" y2="297.5" stroke="#ff00ff" stroke-width="1"/>
<rect x="109" y="295.5" width="3.2" height="3.6" fill="#ffffff"/>
<rect x="110" y="296.5" width="1" height="1" fill="#ff00ff"/>
<polyline points="99,286.6 108,283.4" fill="none" stroke="#ff00ff" stroke-width="1.4" shape-rendering="geometricPrecision"/>
<rect x="107.5" y="281.4" width="3.4" height="3.8" fill="#ffffff"/>
<rect x="108.6" y="282.6" width="1" height="1" fill="#ff00ff"/>
<line x1="207" y1="297.5" x2="211" y2="297.5" stroke="#ff00ff" stroke-width="1"/>
<rect x="203.4" y="295.5" width="3.2" height="3.6" fill="#ffffff"/>
<rect x="204.4" y="296.5" width="1" height="1" fill="#ff00ff"/>
<line x1="222" y1="297.5" x2="226" y2="297.5" stroke="#ff00ff" stroke-width="1"/>
<rect x="226" y="295.5" width="3.2" height="3.6" fill="#ffffff"/>
<rect x="227" y="296.5" width="1" height="1" fill="#ff00ff"/>
<polyline points="216,286.6 225,283.4" fill="none" stroke="#ff00ff" stroke-width="1.4" shape-rendering="geometricPrecision"/>
<rect x="224.5" y="281.4" width="3.4" height="3.8" fill="#ffffff"/>
<rect x="225.6" y="282.6" width="1" height="1" fill="#ff00ff"/>
<line x1="252" y1="297.5" x2="256" y2="297.5" stroke="#ff00ff" stroke-width="1"/>
<rect x="248.4" y="295.5" width="3.2" height="3.6" fill="#ffffff"/>
<rect x="249.4" y="296.5" width="1" height="1" fill="#ff00ff"/>
<line x1="266" y1="297.5" x2="270" y2="297.5" stroke="#ff00ff" stroke-width="1"/>
<rect x="270" y="295.5" width="3.2" height="3.6" fill="#ffffff"/>
<rect x="271" y="296.5" width="1" height="1" fill="#ff00ff"/>
<polyline points="262,286.6 252,283.4" fill="none" stroke="#ff00ff" stroke-width="1.4" shape-rendering="geometricPrecision"/>
<rect x="248.6" y="281.4" width="3.4" height="3.8" fill="#ffffff"/>
<rect x="249.8" y="282.6" width="1" height="1" fill="#ff00ff"/>
<line x1="369" y1="297.5" x2="373" y2="297.5" stroke="#ff00ff" stroke-width="1"/>
<rect x="365.4" y="295.5" width="3.2" height="3.6" fill="#ffffff"/>
<rect x="366.4" y="296.5" width="1" height="1" fill="#ff00ff"/>
<line x1="383" y1="297.5" x2="387" y2="297.5" stroke="#ff00ff" stroke-width="1"/>
<rect x="387" y="295.5" width="3.2" height="3.6" fill="#ffffff"/>
<rect x="388" y="296.5" width="1" height="1" fill="#ff00ff"/>
<polyline points="379,286.6 369,283.4" fill="none" stroke="#ff00ff" stroke-width="1.4" shape-rendering="geometricPrecision"/>
<rect x="365.6" y="281.4" width="3.4" height="3.8" fill="#ffffff"/>
<rect x="366.8" y="282.6" width="1" height="1" fill="#ff00ff"/>
<line x1="91" y1="381.5" x2="95" y2="381.5" stroke="#ff00ff" stroke-width="1"/>
<rect x="87.4" y="379.5" width="3.2" height="3.6" fill="#ffffff"/>
<rect x="88.4" y="380.5" width="1" height="1" fill="#ff00ff"/>
<line x1="105" y1="381.5" x2="109" y2="381.5" stroke="#ff00ff" stroke-width="1"/>
<rect x="109" y="379.5" width="3.2" height="3.6" fill="#ffffff"/>
<rect x="110" y="380.5" width="1" height="1" fill="#ff00ff"/>
<polyline points="99,371.1 108,367.9" fill="none" stroke="#ff00ff" stroke-width="1.4" shape-rendering="geometricPrecision"/>
<rect x="107.5" y="365.9" width="3.4" height="3.8" fill="#ffffff"/>
<rect x="108.6" y="367.1" width="1" height="1" fill="#ff00ff"/>
<line x1="207" y1="381.5" x2="211" y2="381.5" stroke="#ff00ff" stroke-width="1"/>
<rect x="203.4" y="379.5" width="3.2" height="3.6" fill="#ffffff"/>
<rect x="204.4" y="380.5" width="1" height="1" fill="#ff00ff"/>
<line x1="222" y1="381.5" x2="226" y2="381.5" stroke="#ff00ff" stroke-width="1"/>
<rect x="226" y="379.5" width="3.2" height="3.6" fill="#ffffff"/>
<rect x="227" y="380.5" width="1" height="1" fill="#ff00ff"/>
<polyline points="216,371.1 225,367.9" fill="none" stroke="#ff00ff" stroke-width="1.4" shape-rendering="geometricPrecision"/>
<rect x="224.5" y="365.9" width="3.4" height="3.8" fill="#ffffff"/>
<rect x="225.6" y="367.1" width="1" height="1" fill="#ff00ff"/>
<line x1="252" y1="381.5" x2="256" y2="381.5" stroke="#ff00ff" stroke-width="1"/>
<rect x="248.4" y="379.5" width="3.2" height="3.6" fill="#ffffff"/>
<rect x="249.4" y="380.5" width="1" height="1" fill="#ff00ff"/>
<line x1="266" y1="381.5" x2="270" y2="381.5" stroke="#ff00ff" stroke-width="1"/>
<rect x="270" y="379.5" width="3.2" height="3.6" fill="#ffffff"/>
<rect x="271" y="380.5" width="1" height="1" fill="#ff00ff"/>
<polyline points="260,371.1 269,367.9" fill="none" stroke="#ff00ff" stroke-width="1.4" shape-rendering="geometricPrecision"/>
<rect x="268.5" y="365.9" width="3.4" height="3.8" fill="#ffffff"/>
<rect x="269.6" y="367.1" width="1" height="1" fill="#ff00ff"/>
<line x1="369" y1="381.5" x2="373" y2="381.5" stroke="#ff00ff" stroke-width="1"/>
<rect x="365.4" y="379.5" width="3.2" height="3.6" fill="#ffffff"/>
<rect x="366.4" y="380.5" width="1" height="1" fill="#ff00ff"/>
<line x1="383" y1="381.5" x2="387" y2="381.5" stroke="#ff00ff" stroke-width="1"/>
<rect x="387" y="379.5" width="3.2" height="3.6" fill="#ffffff"/>
<rect x="388" y="380.5" width="1" height="1" fill="#ff00ff"/>
<polyline points="377,371.1 386,367.9" fill="none" stroke="#ff00ff" stroke-width="1.4" shape-rendering="geometricPrecision"/>
<rect x="385.5" y="365.9" width="3.4" height="3.8" fill="#ffffff"/>
<rect x="386.6" y="367.1" width="1" height="1" fill="#ff00ff"/>
<text x="150" y="116" font-size="8.94" fill="#00ff00" textLength="23.3" lengthAdjust="spacingAndGlyphs" font-weight="bold" stroke="#00ff00" stroke-width="0.45">Φ10@150</text>
<text x="150" y="167.4" font-size="8.94" fill="#00ff00" textLength="23.3" lengthAdjust="spacingAndGlyphs" font-weight="bold" stroke="#00ff00" stroke-width="0.45">Φ10@100</text>
<text x="150" y="232.4" font-size="8.94" fill="#00ff00" textLength="23.3" lengthAdjust="spacingAndGlyphs" font-weight="bold" stroke="#00ff00" stroke-width="0.45">Φ10@150</text>
<text x="150" y="284.8" font-size="8.94" fill="#00ff00" textLength="23.3" lengthAdjust="spacingAndGlyphs" font-weight="bold" stroke="#00ff00" stroke-width="0.45">Φ10@100</text>
<text x="150" y="363.7" font-size="8.94" fill="#00ff00" textLength="23.3" lengthAdjust="spacingAndGlyphs" font-weight="bold" stroke="#00ff00" stroke-width="0.45">Φ10@100</text>
<text x="313" y="116" font-size="8.94" fill="#00ff00" textLength="23.3" lengthAdjust="spacingAndGlyphs" font-weight="bold" stroke="#00ff00" stroke-width="0.45">Φ10@150</text>
<text x="313" y="167.4" font-size="8.94" fill="#00ff00" textLength="23.3" lengthAdjust="spacingAndGlyphs" font-weight="bold" stroke="#00ff00" stroke-width="0.45">Φ10@100</text>
<text x="313" y="232.4" font-size="8.94" fill="#00ff00" textLength="23.3" lengthAdjust="spacingAndGlyphs" font-weight="bold" stroke="#00ff00" stroke-width="0.45">Φ10@150</text>
<text x="313" y="284.8" font-size="8.94" fill="#00ff00" textLength="23.3" lengthAdjust="spacingAndGlyphs" font-weight="bold" stroke="#00ff00" stroke-width="0.45">Φ10@100</text>
<text x="313" y="363.7" font-size="8.94" fill="#00ff00" textLength="23.3" lengthAdjust="spacingAndGlyphs" font-weight="bold" stroke="#00ff00" stroke-width="0.45">Φ10@100</text>
<text x="109" y="101.5" font-size="7.82" fill="#00ff00" textLength="20" lengthAdjust="spacingAndGlyphs" font-weight="bold" stroke="#00ff00" stroke-width="0.45">Φ8@100</text>
<text x="153" y="101.5" font-size="7.82" fill="#00ff00" textLength="19.5" lengthAdjust="spacingAndGlyphs" font-weight="bold" stroke="#00ff00" stroke-width="0.45">Φ8@200</text>
<text x="192.4" y="101.5" font-size="7.82" fill="#00ff00" textLength="18.6" lengthAdjust="spacingAndGlyphs" font-weight="bold" stroke="#00ff00" stroke-width="0.45">Φ8@100</text>
<text x="108" y="218.2" font-size="7.82" fill="#00ff00" textLength="20" lengthAdjust="spacingAndGlyphs" font-weight="bold" stroke="#00ff00" stroke-width="0.45">Φ8@100</text>
<text x="152" y="218.2" font-size="7.82" fill="#00ff00" textLength="21" lengthAdjust="spacingAndGlyphs" font-weight="bold" stroke="#00ff00" stroke-width="0.45">Φ8@200</text>
<text x="194" y="218.2" font-size="7.82" fill="#00ff00" textLength="23" lengthAdjust="spacingAndGlyphs" font-weight="bold" stroke="#00ff00" stroke-width="0.45">Φ8@100</text>
<text x="107" y="334.2" font-size="7.82" fill="#00ff00" textLength="20" lengthAdjust="spacingAndGlyphs" font-weight="bold" stroke="#00ff00" stroke-width="0.45">Φ8@100</text>
<text x="151" y="334.2" font-size="7.82" fill="#00ff00" textLength="20.5" lengthAdjust="spacingAndGlyphs" font-weight="bold" stroke="#00ff00" stroke-width="0.45">Φ8@200</text>
<text x="191" y="334.2" font-size="7.82" fill="#00ff00" textLength="20" lengthAdjust="spacingAndGlyphs" font-weight="bold" stroke="#00ff00" stroke-width="0.45">Φ8@100</text>
<text x="235" y="97.9" font-size="7.82" fill="#00ff00" textLength="15.5" lengthAdjust="spacingAndGlyphs" font-weight="bold" stroke="#00ff00" stroke-width="0.45">Φ10@100</text>
<text x="235" y="214.2" font-size="8.1" fill="#00ff00" textLength="15.5" lengthAdjust="spacingAndGlyphs" font-weight="bold" stroke="#00ff00" stroke-width="0.45">Φ10@100</text>
<text x="231" y="331.2" font-size="8.1" fill="#00ff00" textLength="22.7" lengthAdjust="spacingAndGlyphs" font-weight="bold" stroke="#00ff00" stroke-width="0.45">Φ10@100</text>
<text x="0" y="0" font-size="7.54" fill="#00ff00" textLength="16.2" lengthAdjust="spacingAndGlyphs" transform="translate(95 112) rotate(-90)" font-weight="bold" stroke="#00ff00" stroke-width="0.4">Φ10@100</text>
<text x="0" y="0" font-size="7.26" fill="#00ff00" textLength="14" lengthAdjust="spacingAndGlyphs" transform="translate(227.6 112) rotate(-90)" font-weight="bold" stroke="#00ff00" stroke-width="0.4">Φ10@10</text>
<text x="0" y="0" font-size="7.54" fill="#00ff00" textLength="24.3" lengthAdjust="spacingAndGlyphs" transform="translate(92.8 362) rotate(-90)" font-weight="bold" stroke="#00ff00" stroke-width="0.4">Φ10@150</text>
<text x="0" y="0" font-size="7.54" fill="#00ff00" textLength="23.7" lengthAdjust="spacingAndGlyphs" transform="translate(194.6 372.7) rotate(-90)" font-weight="bold" stroke="#00ff00" stroke-width="0.4">Φ10@100</text>
<text x="0" y="0" font-size="7.54" fill="#00ff00" textLength="15.4" lengthAdjust="spacingAndGlyphs" transform="translate(210 361.8) rotate(-90)" font-weight="bold" stroke="#00ff00" stroke-width="0.4">Φ10@1</text>
<line x1="105" y1="60" x2="105" y2="85" stroke="#00ff00" stroke-width="2"/>
<line x1="121.5" y1="60" x2="121.5" y2="82" stroke="#00ff00" stroke-width="1"/>
<line x1="103" y1="63.5" x2="124" y2="63.5" stroke="#00ff00" stroke-width="1"/>
<line x1="96.5" y1="66" x2="96.5" y2="85" stroke="#00ff00" stroke-width="1"/>
<line x1="95.5" y1="69.5" x2="117.5" y2="69.5" stroke="#00ff00" stroke-width="1"/>
<line x1="114.5" y1="65" x2="114.5" y2="71" stroke="#00ff00" stroke-width="1"/>
<line x1="99.5" y1="72.4" x2="99.5" y2="85" stroke="#00ff00" stroke-width="1"/>
<line x1="98.4" y1="76.5" x2="132.5" y2="76.5" stroke="#00ff00" stroke-width="1"/>
<line x1="131.5" y1="73" x2="131.5" y2="82" stroke="#00ff00" stroke-width="1"/>
<polyline points="104,65 107,62" fill="none" stroke="#00ff00" stroke-width="1" shape-rendering="geometricPrecision"/>
<polyline points="120.8,65 123.8,62" fill="none" stroke="#00ff00" stroke-width="1" shape-rendering="geometricPrecision"/>
<polyline points="95.6,71.5 98.6,68.5" fill="none" stroke="#00ff00" stroke-width="1" shape-rendering="geometricPrecision"/>
<polyline points="113.5,71.5 116.5,68.5" fill="none" stroke="#00ff00" stroke-width="1" shape-rendering="geometricPrecision"/>
<polyline points="98.6,78.3 101.6,75.3" fill="none" stroke="#00ff00" stroke-width="1" shape-rendering="geometricPrecision"/>
<polyline points="130.4,78.3 133.4,75.3" fill="none" stroke="#00ff00" stroke-width="1" shape-rendering="geometricPrecision"/>
<polyline points="104,78.3 107,75.3" fill="none" stroke="#00ff00" stroke-width="1" shape-rendering="geometricPrecision"/>
<text x="99.7" y="61.8" font-size="6.84" fill="#ffffff" textLength="5.2" lengthAdjust="spacingAndGlyphs" font-weight="bold" stroke="#ffffff" stroke-width="0.45">60</text>
<text x="109.3" y="61.8" font-size="6.01" fill="#ffffff" textLength="9.6" lengthAdjust="spacingAndGlyphs" font-weight="bold" stroke="#ffffff" stroke-width="0.45">1100</text>
<text x="91.2" y="66" font-size="6.98" fill="#ffffff" textLength="11.5" lengthAdjust="spacingAndGlyphs" font-weight="bold" stroke="#ffffff" stroke-width="0.45">1200</text>
<text x="106.2" y="75.6" font-size="6.98" fill="#ffffff" textLength="7.5" lengthAdjust="spacingAndGlyphs" font-weight="bold" stroke="#ffffff" stroke-width="0.45">350</text>
<text x="114.9" y="75.6" font-size="6.15" fill="#ffffff" textLength="11.8" lengthAdjust="spacingAndGlyphs" font-weight="bold" stroke="#ffffff" stroke-width="0.45">1600</text>
<text x="105.5" y="81.2" font-size="6.98" fill="#ffffff" textLength="8.2" lengthAdjust="spacingAndGlyphs" font-weight="bold" stroke="#ffffff" stroke-width="0.45">250</text>
<line x1="83" y1="85.5" x2="95.5" y2="85.5" stroke="#00ff00" stroke-width="1"/>
<line x1="81" y1="90.5" x2="99" y2="90.5" stroke="#00ff00" stroke-width="1"/>
<line x1="81" y1="93.5" x2="95" y2="93.5" stroke="#00ff00" stroke-width="1"/>
<line x1="81" y1="97.5" x2="96" y2="97.5" stroke="#00ff00" stroke-width="1"/>
<line x1="81" y1="103.5" x2="95.5" y2="103.5" stroke="#00ff00" stroke-width="1"/>
<line x1="85.5" y1="83.7" x2="85.5" y2="105.5" stroke="#00ff00" stroke-width="1"/>
<polyline points="84.8,87.3 87.8,84.3" fill="none" stroke="#00ff00" stroke-width="1" shape-rendering="geometricPrecision"/>
<polyline points="84.8,92.3 87.8,89.3" fill="none" stroke="#00ff00" stroke-width="1" shape-rendering="geometricPrecision"/>
<polyline points="84.8,99.2 87.8,96.2" fill="none" stroke="#00ff00" stroke-width="1" shape-rendering="geometricPrecision"/>
<polyline points="84.8,105.7 87.8,102.7" fill="none" stroke="#00ff00" stroke-width="1" shape-rendering="geometricPrecision"/>
<text x="0" y="0" font-size="5.59" fill="#ffffff" textLength="8.5" lengthAdjust="spacingAndGlyphs" transform="translate(82.6 85.5) rotate(-90)" font-weight="bold" stroke="#ffffff" stroke-width="0.4">300</text>
<text x="0" y="0" font-size="5.59" fill="#ffffff" textLength="8.1" lengthAdjust="spacingAndGlyphs" transform="translate(79.4 95.5) rotate(-90)" font-weight="bold" stroke="#ffffff" stroke-width="0.4">200</text>
<text x="0" y="0" font-size="6.28" fill="#ffffff" textLength="8.8" lengthAdjust="spacingAndGlyphs" transform="translate(83 104.3) rotate(-90)" font-weight="bold" stroke="#ffffff" stroke-width="0.4">400</text>
<line x1="205.5" y1="61.8" x2="205.5" y2="87.4" stroke="#00ff00" stroke-width="1"/>
<line x1="211.5" y1="61.8" x2="211.5" y2="83.7" stroke="#00ff00" stroke-width="1"/>
<line x1="204" y1="66.5" x2="213.5" y2="66.5" stroke="#00ff00" stroke-width="1"/>
<line x1="208.5" y1="70.6" x2="208.5" y2="84.3" stroke="#00ff00" stroke-width="1"/>
<line x1="207.8" y1="75.5" x2="226.5" y2="75.5" stroke="#00ff00" stroke-width="1"/>
<line x1="224.5" y1="71" x2="224.5" y2="83.7" stroke="#00ff00" stroke-width="1"/>
<line x1="184" y1="83.5" x2="217" y2="83.5" stroke="#00ff00" stroke-width="1"/>
<line x1="184.5" y1="78" x2="184.5" y2="84.3" stroke="#00ff00" stroke-width="1"/>
<line x1="184" y1="90.5" x2="212" y2="90.5" stroke="#00ff00" stroke-width="1"/>
<line x1="188.5" y1="88.7" x2="188.5" y2="96" stroke="#00ff00" stroke-width="1"/>
<line x1="213.5" y1="92.4" x2="213.5" y2="116" stroke="#00ff00" stroke-width="1"/>
<polyline points="211,114.5 215.5,118" fill="none" stroke="#00ff00" stroke-width="1" shape-rendering="geometricPrecision"/>
<polyline points="204.6,67.8 207.6,64.8" fill="none" stroke="#00ff00" stroke-width="1" shape-rendering="geometricPrecision"/>
<polyline points="210.8,67.8 213.8,64.8" fill="none" stroke="#00ff00" stroke-width="1" shape-rendering="geometricPrecision"/>
<polyline points="207.7,76.8 210.7,73.8" fill="none" stroke="#00ff00" stroke-width="1" shape-rendering="geometricPrecision"/>
<polyline points="223.9,76.8 226.9,73.8" fill="none" stroke="#00ff00" stroke-width="1" shape-rendering="geometricPrecision"/>
<polyline points="210.8,76.8 213.8,73.8" fill="none" stroke="#00ff00" stroke-width="1" shape-rendering="geometricPrecision"/>
<polyline points="183.5,84.8 186.5,81.8" fill="none" stroke="#00ff00" stroke-width="1" shape-rendering="geometricPrecision"/>
<polyline points="204.6,84.8 207.6,81.8" fill="none" stroke="#00ff00" stroke-width="1" shape-rendering="geometricPrecision"/>
<polyline points="187.5,92 190.5,89" fill="none" stroke="#00ff00" stroke-width="1" shape-rendering="geometricPrecision"/>
<text x="213.4" y="63.5" font-size="6.98" fill="#ffffff" textLength="8.6" lengthAdjust="spacingAndGlyphs" font-weight="bold" stroke="#ffffff" stroke-width="0.45">450</text>
<text x="199.7" y="72.8" font-size="7.4" fill="#ffffff" textLength="8.1" lengthAdjust="spacingAndGlyphs" font-weight="bold" stroke="#ffffff" stroke-width="0.45">250</text>
<text x="212.8" y="72.8" font-size="7.4" fill="#ffffff" textLength="8.2" lengthAdjust="spacingAndGlyphs" font-weight="bold" stroke="#ffffff" stroke-width="0.45">250</text>
<text x="187" y="81" font-size="7.54" fill="#ffffff" textLength="10.8" lengthAdjust="spacingAndGlyphs" font-weight="bold" stroke="#ffffff" stroke-width="0.45">1000</text>
<text x="212.2" y="80" font-size="6.15" fill="#ffffff" textLength="8.1" lengthAdjust="spacingAndGlyphs" font-weight="bold" stroke="#ffffff" stroke-width="0.45">350</text>
<text x="0" y="0" font-size="6.98" fill="#ffffff" textLength="9" lengthAdjust="spacingAndGlyphs" transform="translate(185.4 105) rotate(-90)" font-weight="bold" stroke="#ffffff" stroke-width="0.4">300</text>
<text x="202" y="113" font-size="6.42" fill="#ffffff" textLength="8.8" lengthAdjust="spacingAndGlyphs" font-weight="bold" stroke="#ffffff" stroke-width="0.45">200</text>
<text x="106" y="179.4" font-size="6.7" fill="#ffffff" textLength="7.6" lengthAdjust="spacingAndGlyphs" font-weight="bold" stroke="#ffffff" stroke-width="0.45">300</text>
<text x="116.5" y="192" font-size="6.98" fill="#ffffff" textLength="11.3" lengthAdjust="spacingAndGlyphs" font-weight="bold" stroke="#ffffff" stroke-width="0.45">2400</text>
<line x1="105" y1="193.5" x2="141.5" y2="193.5" stroke="#00ff00" stroke-width="1"/>
<line x1="140.5" y1="189" x2="140.5" y2="197.5" stroke="#00ff00" stroke-width="1"/>
<polyline points="139.5,195 142.5,192" fill="none" stroke="#00ff00" stroke-width="1" shape-rendering="geometricPrecision"/>
<polyline points="104,195 107,192" fill="none" stroke="#00ff00" stroke-width="1" shape-rendering="geometricPrecision"/>
<line x1="99.5" y1="178" x2="99.5" y2="195" stroke="#00ff00" stroke-width="1"/>
<line x1="104.5" y1="176" x2="104.5" y2="195" stroke="#00ff00" stroke-width="1"/>
<polyline points="98,182.5 101,179.5" fill="none" stroke="#00ff00" stroke-width="1" shape-rendering="geometricPrecision"/>
<line x1="97" y1="180.5" x2="107" y2="180.5" stroke="#00ff00" stroke-width="1"/>
<line x1="85" y1="202.5" x2="96" y2="202.5" stroke="#00ff00" stroke-width="1"/>
<line x1="85" y1="206.5" x2="96" y2="206.5" stroke="#00ff00" stroke-width="1"/>
<line x1="85" y1="210.5" x2="96" y2="210.5" stroke="#00ff00" stroke-width="1"/>
<line x1="89.5" y1="201" x2="89.5" y2="212.5" stroke="#00ff00" stroke-width="1"/>
<polyline points="88.5,204.5 91.5,201.5" fill="none" stroke="#00ff00" stroke-width="1" shape-rendering="geometricPrecision"/>
<polyline points="88.5,208.5 91.5,205.5" fill="none" stroke="#00ff00" stroke-width="1" shape-rendering="geometricPrecision"/>
<polyline points="88.5,212.3 91.5,209.3" fill="none" stroke="#00ff00" stroke-width="1" shape-rendering="geometricPrecision"/>
<text x="0" y="0" font-size="6.98" fill="#ffffff" textLength="8.5" lengthAdjust="spacingAndGlyphs" transform="translate(87 201) rotate(-90)" font-weight="bold" stroke="#ffffff" stroke-width="0.4">300</text>
<text x="0" y="0" font-size="6.98" fill="#ffffff" textLength="8.7" lengthAdjust="spacingAndGlyphs" transform="translate(87 220.5) rotate(-90)" font-weight="bold" stroke="#ffffff" stroke-width="0.4">250</text>
<text x="105.5" y="227" font-size="6.98" fill="#ffffff" textLength="8.1" lengthAdjust="spacingAndGlyphs" font-weight="bold" stroke="#ffffff" stroke-width="0.45">200</text>
<line x1="100.5" y1="215.5" x2="100.5" y2="232" stroke="#00ff00" stroke-width="1"/>
<polyline points="99.5,230.1 102.5,227.1" fill="none" stroke="#00ff00" stroke-width="1" shape-rendering="geometricPrecision"/>
<line x1="98" y1="228.5" x2="103" y2="228.5" stroke="#00ff00" stroke-width="1"/>
<text x="202" y="236.3" font-size="7.68" fill="#ffffff" textLength="9" lengthAdjust="spacingAndGlyphs" font-weight="bold" stroke="#ffffff" stroke-width="0.45">200</text>
<line x1="214.5" y1="214.4" x2="214.5" y2="241.8" stroke="#00ff00" stroke-width="1"/>
<polyline points="213.3,238.5 216.3,235.5" fill="none" stroke="#00ff00" stroke-width="1" shape-rendering="geometricPrecision"/>
<line x1="212" y1="237.5" x2="217" y2="237.5" stroke="#00ff00" stroke-width="1"/>
<text x="105.5" y="261" font-size="6.98" fill="#ffffff" textLength="8.1" lengthAdjust="spacingAndGlyphs" font-weight="bold" stroke="#ffffff" stroke-width="0.45">300</text>
<line x1="99.5" y1="253" x2="99.5" y2="268" stroke="#00ff00" stroke-width="1"/>
<line x1="104.5" y1="253" x2="104.5" y2="268" stroke="#00ff00" stroke-width="1"/>
<line x1="98" y1="265.5" x2="107" y2="265.5" stroke="#00ff00" stroke-width="1"/>
<polyline points="98.4,267.1 101.4,264.1" fill="none" stroke="#00ff00" stroke-width="1" shape-rendering="geometricPrecision"/>
<polyline points="103.9,267.1 106.9,264.1" fill="none" stroke="#00ff00" stroke-width="1" shape-rendering="geometricPrecision"/>
<text x="105.5" y="304.9" font-size="7.68" fill="#ffffff" textLength="8.1" lengthAdjust="spacingAndGlyphs" font-weight="bold" stroke="#ffffff" stroke-width="0.45">300</text>
<text x="116.9" y="304.4" font-size="6.98" fill="#ffffff" textLength="12" lengthAdjust="spacingAndGlyphs" font-weight="bold" stroke="#ffffff" stroke-width="0.45">2475</text>
<line x1="98.3" y1="305.5" x2="142" y2="305.5" stroke="#00ff00" stroke-width="1"/>
<line x1="141.5" y1="302.5" x2="141.5" y2="315" stroke="#00ff00" stroke-width="1"/>
<polyline points="140.4,307.3 143.4,304.3" fill="none" stroke="#00ff00" stroke-width="1" shape-rendering="geometricPrecision"/>
<line x1="99.5" y1="302.5" x2="99.5" y2="315" stroke="#00ff00" stroke-width="1"/>
<line x1="104.5" y1="302.5" x2="104.5" y2="315" stroke="#00ff00" stroke-width="1"/>
<polyline points="98,307.3 101,304.3" fill="none" stroke="#00ff00" stroke-width="1" shape-rendering="geometricPrecision"/>
<polyline points="103.9,307.3 106.9,304.3" fill="none" stroke="#00ff00" stroke-width="1" shape-rendering="geometricPrecision"/>
<line x1="85.8" y1="318.5" x2="96" y2="318.5" stroke="#00ff00" stroke-width="1"/>
<line x1="85.8" y1="323.5" x2="96" y2="323.5" stroke="#00ff00" stroke-width="1"/>
<line x1="85.8" y1="327.5" x2="96" y2="327.5" stroke="#00ff00" stroke-width="1"/>
<line x1="90.5" y1="316.5" x2="90.5" y2="330" stroke="#00ff00" stroke-width="1"/>
<polyline points="89.6,320.4 92.6,317.4" fill="none" stroke="#00ff00" stroke-width="1" shape-rendering="geometricPrecision"/>
<polyline points="89.6,325.2 92.6,322.2" fill="none" stroke="#00ff00" stroke-width="1" shape-rendering="geometricPrecision"/>
<polyline points="89.6,329.6 92.6,326.6" fill="none" stroke="#00ff00" stroke-width="1" shape-rendering="geometricPrecision"/>
<text x="0" y="0" font-size="6.98" fill="#ffffff" textLength="9.4" lengthAdjust="spacingAndGlyphs" transform="translate(88 318) rotate(-90)" font-weight="bold" stroke="#ffffff" stroke-width="0.4">330</text>
<text x="0" y="0" font-size="6.98" fill="#ffffff" textLength="8.7" lengthAdjust="spacingAndGlyphs" transform="translate(88 337.7) rotate(-90)" font-weight="bold" stroke="#ffffff" stroke-width="0.4">270</text>
<text x="105.5" y="338.6" font-size="7.26" fill="#ffffff" textLength="9.2" lengthAdjust="spacingAndGlyphs" font-weight="bold" stroke="#ffffff" stroke-width="0.45">200</text>
<text x="105.5" y="344.2" font-size="7.26" fill="#ffffff" textLength="8.1" lengthAdjust="spacingAndGlyphs" font-weight="bold" stroke="#ffffff" stroke-width="0.45">300</text>
<line x1="99.5" y1="331" x2="99.5" y2="350" stroke="#00ff00" stroke-width="1"/>
<line x1="104.5" y1="334" x2="104.5" y2="350" stroke="#00ff00" stroke-width="1"/>
<line x1="98" y1="346.5" x2="107" y2="346.5" stroke="#00ff00" stroke-width="1"/>
<polyline points="98.4,347.8 101.4,344.8" fill="none" stroke="#00ff00" stroke-width="1" shape-rendering="geometricPrecision"/>
<polyline points="103.9,347.8 106.9,344.8" fill="none" stroke="#00ff00" stroke-width="1" shape-rendering="geometricPrecision"/>
<line x1="98" y1="341.5" x2="107" y2="341.5" stroke="#00ff00" stroke-width="1"/>
<polyline points="98.4,342.8 101.4,339.8" fill="none" stroke="#00ff00" stroke-width="1" shape-rendering="geometricPrecision"/>
<text x="202" y="345" font-size="7.82" fill="#ffffff" textLength="8.8" lengthAdjust="spacingAndGlyphs" font-weight="bold" stroke="#ffffff" stroke-width="0.45">250</text>
<line x1="215.5" y1="332" x2="215.5" y2="347.5" stroke="#00ff00" stroke-width="1"/>
<line x1="212.5" y1="345.5" x2="217.5" y2="345.5" stroke="#00ff00" stroke-width="1"/>
<polyline points="214,346.8 217,343.8" fill="none" stroke="#00ff00" stroke-width="1" shape-rendering="geometricPrecision"/>
</svg>
</body></html>
